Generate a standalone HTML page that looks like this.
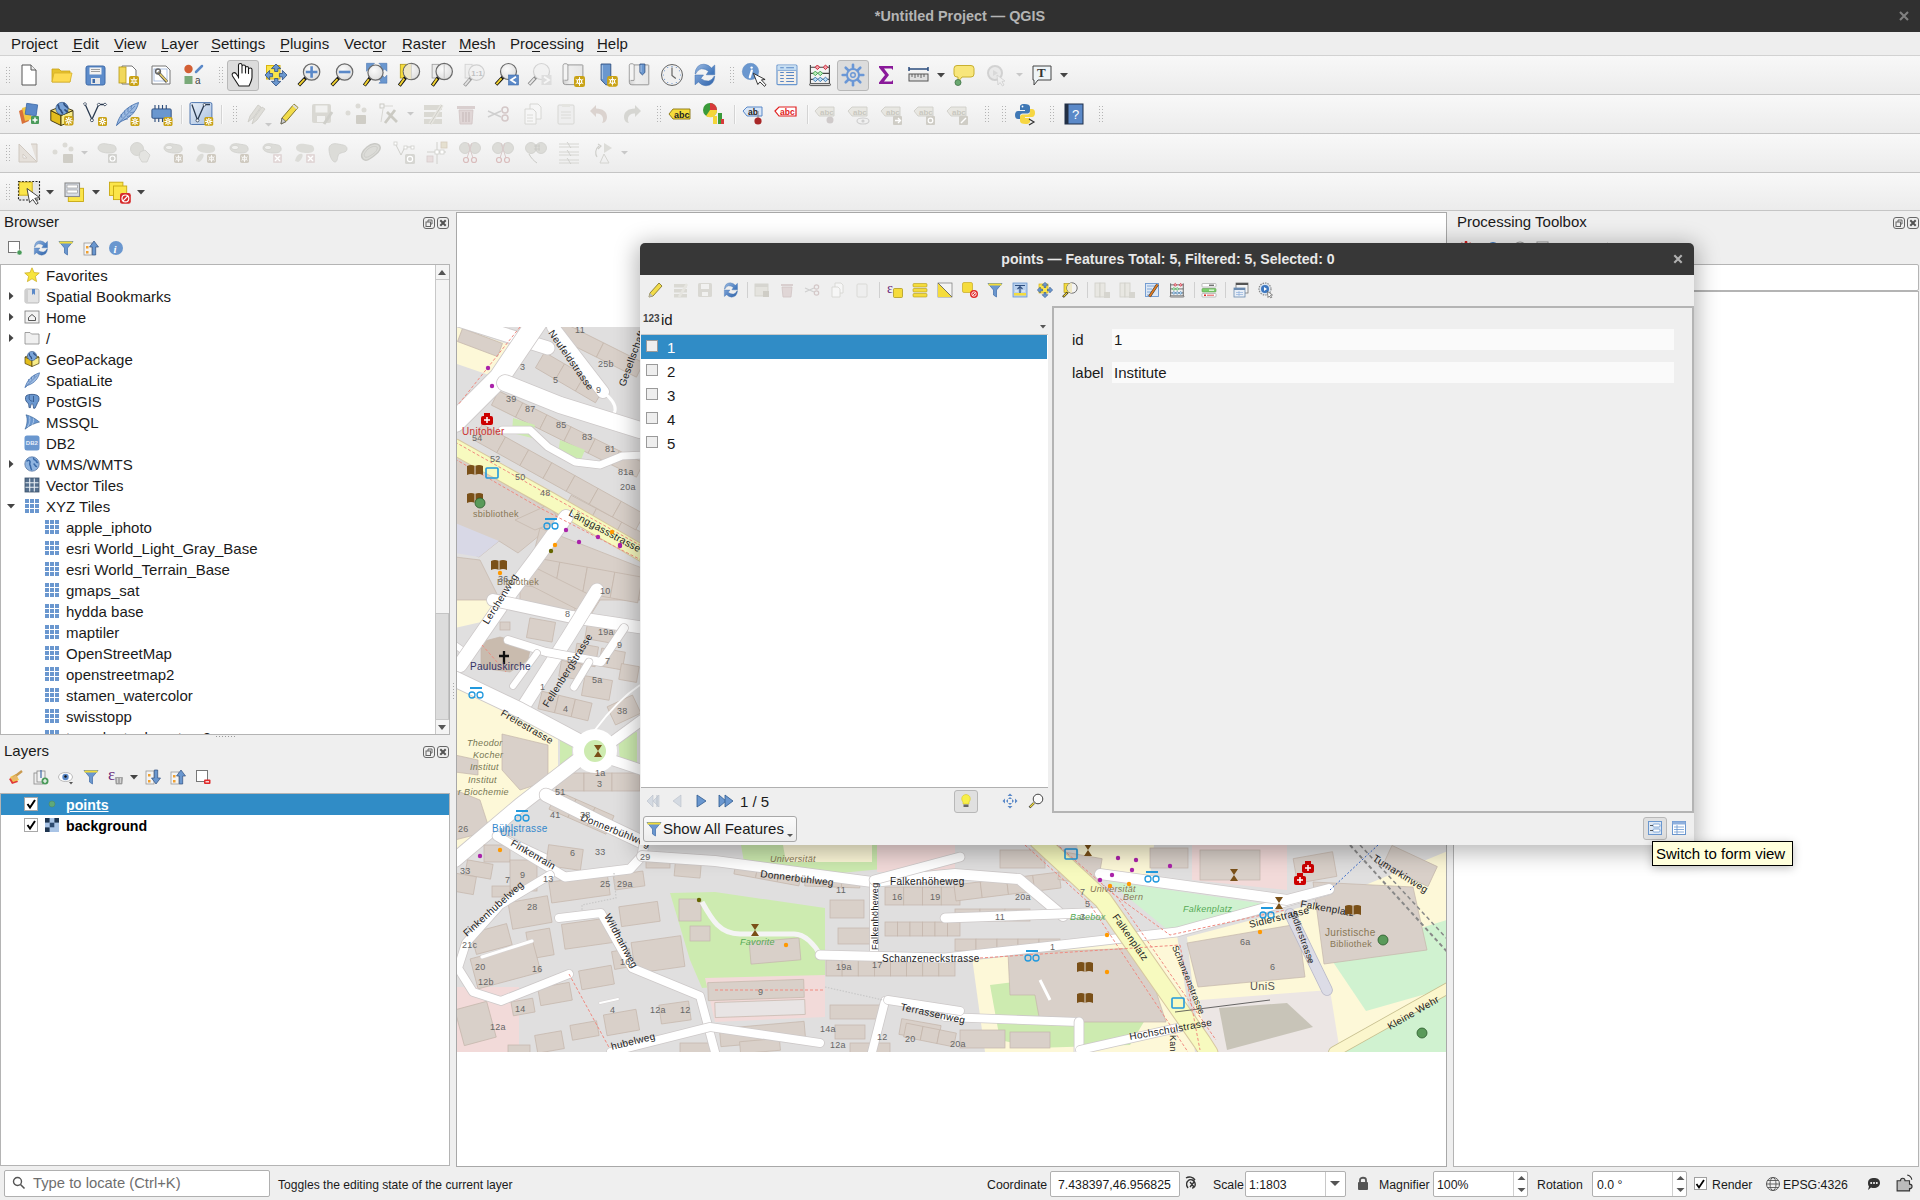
<!DOCTYPE html><html><head><meta charset="utf-8"><style>
*{margin:0;padding:0;box-sizing:border-box}
html,body{width:1920px;height:1200px;overflow:hidden;background:#efefef;font-family:"Liberation Sans",sans-serif;position:relative}
.a{position:absolute}
.t{position:absolute;white-space:nowrap;line-height:1}
svg{position:absolute;overflow:visible}
</style></head><body><div class="a" style="left:0px;top:0px;width:1920px;height:32px;background:#303030"></div><div class="t" style="left:560px;width:800px;text-align:center;top:8.81px;font-size:14.4px;color:#b4b4b4;font-weight:bold;">*Untitled Project — QGIS</div><svg style="left:1899px;top:11px" width="10" height="10"><path d="M1 1L9 9M9 1L1 9" stroke="#808080" stroke-width="2.1"/></svg><div class="a" style="left:0px;top:32px;width:1920px;height:23px;background:#eeeeee"></div><div class="a" style="left:0px;top:55px;width:1920px;height:1px;background:#d2d2d2"></div><div class="t" style="left:11px;top:36.30px;font-size:15px;color:#1a1a1a;font-weight:normal;">Project</div><div class="a" style="left:33px;top:51px;width:4px;height:1px;background:#1a1a1a"></div><div class="t" style="left:73px;top:36.30px;font-size:15px;color:#1a1a1a;font-weight:normal;">Edit</div><div class="a" style="left:72px;top:51px;width:9px;height:1px;background:#1a1a1a"></div><div class="t" style="left:114px;top:36.30px;font-size:15px;color:#1a1a1a;font-weight:normal;">View</div><div class="a" style="left:114px;top:51px;width:9px;height:1px;background:#1a1a1a"></div><div class="t" style="left:161px;top:36.30px;font-size:15px;color:#1a1a1a;font-weight:normal;">Layer</div><div class="a" style="left:161px;top:51px;width:7px;height:1px;background:#1a1a1a"></div><div class="t" style="left:211px;top:36.30px;font-size:15px;color:#1a1a1a;font-weight:normal;">Settings</div><div class="a" style="left:211px;top:51px;width:8px;height:1px;background:#1a1a1a"></div><div class="t" style="left:280px;top:36.30px;font-size:15px;color:#1a1a1a;font-weight:normal;">Plugins</div><div class="a" style="left:280px;top:51px;width:9px;height:1px;background:#1a1a1a"></div><div class="t" style="left:344px;top:36.30px;font-size:15px;color:#1a1a1a;font-weight:normal;">Vector</div><div class="a" style="left:373px;top:51px;width:9px;height:1px;background:#1a1a1a"></div><div class="t" style="left:402px;top:36.30px;font-size:15px;color:#1a1a1a;font-weight:normal;">Raster</div><div class="a" style="left:402px;top:51px;width:9px;height:1px;background:#1a1a1a"></div><div class="t" style="left:459px;top:36.30px;font-size:15px;color:#1a1a1a;font-weight:normal;">Mesh</div><div class="a" style="left:459px;top:51px;width:13px;height:1px;background:#1a1a1a"></div><div class="t" style="left:510px;top:36.30px;font-size:15px;color:#1a1a1a;font-weight:normal;">Processing</div><div class="a" style="left:532px;top:51px;width:8px;height:1px;background:#1a1a1a"></div><div class="t" style="left:597px;top:36.30px;font-size:15px;color:#1a1a1a;font-weight:normal;">Help</div><div class="a" style="left:597px;top:51px;width:10px;height:1px;background:#1a1a1a"></div><div class="a" style="left:0px;top:56px;width:1920px;height:38px;background:linear-gradient(#f8f8f8,#ececec)"></div><div class="a" style="left:0px;top:94px;width:1920px;height:1px;background:#c5c5c5"></div><div class="a" style="left:0px;top:95px;width:1920px;height:38px;background:linear-gradient(#f8f8f8,#ececec)"></div><div class="a" style="left:0px;top:133px;width:1920px;height:1px;background:#c5c5c5"></div><div class="a" style="left:0px;top:134px;width:1920px;height:38px;background:linear-gradient(#f8f8f8,#ececec)"></div><div class="a" style="left:0px;top:172px;width:1920px;height:1px;background:#c5c5c5"></div><div class="a" style="left:0px;top:173px;width:1920px;height:37px;background:linear-gradient(#f8f8f8,#ececec)"></div><div class="a" style="left:0px;top:210px;width:1920px;height:1px;background:#c5c5c5"></div><div class="a" style="left:6px;top:67px;width:1px;height:1px;background:#b4b4b4"></div><div class="a" style="left:9px;top:67px;width:1px;height:1px;background:#b4b4b4"></div><div class="a" style="left:6px;top:70px;width:1px;height:1px;background:#b4b4b4"></div><div class="a" style="left:9px;top:70px;width:1px;height:1px;background:#b4b4b4"></div><div class="a" style="left:6px;top:73px;width:1px;height:1px;background:#b4b4b4"></div><div class="a" style="left:9px;top:73px;width:1px;height:1px;background:#b4b4b4"></div><div class="a" style="left:6px;top:76px;width:1px;height:1px;background:#b4b4b4"></div><div class="a" style="left:9px;top:76px;width:1px;height:1px;background:#b4b4b4"></div><div class="a" style="left:6px;top:79px;width:1px;height:1px;background:#b4b4b4"></div><div class="a" style="left:9px;top:79px;width:1px;height:1px;background:#b4b4b4"></div><div class="a" style="left:6px;top:82px;width:1px;height:1px;background:#b4b4b4"></div><div class="a" style="left:9px;top:82px;width:1px;height:1px;background:#b4b4b4"></div><div class="a" style="left:227px;top:60px;width:32px;height:31px;background:#dcdcdc;border:1px solid #b8b8b8;border-radius:3px"></div><div class="a" style="left:837px;top:60px;width:32px;height:31px;background:#dcdcdc;border:1px solid #b8b8b8;border-radius:3px"></div><svg style="left:17.0px;top:63.0px" width="24" height="24" viewBox="0 0 24 24"><path d="M5 2H14L19 7V22H5Z" fill="#fff" stroke="#555" stroke-width="1"/><path d="M14 2V7H19" fill="#eee" stroke="#555" stroke-width="1"/></svg><svg style="left:50.0px;top:63.0px" width="24" height="24" viewBox="0 0 24 24"><path d="M2 6H9L11 8H20V19H2Z" fill="#e6c22e" stroke="#c9a21a" stroke-width="0.8"/><path d="M4 10H22L20 19H2Z" fill="#fddb52" stroke="#d6b028" stroke-width="0.8"/></svg><svg style="left:83.0px;top:63.0px" width="24" height="24" viewBox="0 0 24 24"><rect x="3" y="3" width="19" height="19" rx="2" fill="#5d8ccb" stroke="#3e6aa8"/><rect x="6.5" y="4.5" width="12" height="7" fill="#f2f2f2"/><path d="M8 6.5H17M8 8.5H17" stroke="#888" stroke-width="0.8"/><rect x="8" y="15" width="9" height="6" fill="#e8e8e8"/><rect x="9.5" y="16" width="2.5" height="4" fill="#3e6aa8"/></svg><svg style="left:116.0px;top:63.0px" width="24" height="24" viewBox="0 0 24 24"><path d="M6 3H16L20 7V21H6Z" fill="#fff" stroke="#777"/><rect x="3" y="4" width="7" height="16" fill="#f1d85b" stroke="#b89a16" stroke-width="0.8"/><rect x="13" y="13" width="10" height="10" rx="2.00" fill="#c9a215"/><path d="M18.0 18.0L21.46 20.00" stroke="#fff" stroke-width="0.85"/><path d="M18.0 18.0L14.54 20.00" stroke="#fff" stroke-width="0.85"/><path d="M18.0 18.0L14.54 16.00" stroke="#fff" stroke-width="0.85"/><path d="M18.0 18.0L21.46 16.00" stroke="#fff" stroke-width="0.85"/><circle cx="18.0" cy="18.0" r="2.00" fill="#c9a215" stroke="#fff" stroke-width="1.00"/><path d="M18.0 14.0V22.0" stroke="#fff" stroke-width="0.85"/></svg><svg style="left:149.0px;top:63.0px" width="24" height="24" viewBox="0 0 24 24"><path d="M3 3H17L21 7V21H3Z" fill="#fff" stroke="#777"/><rect x="5" y="6" width="13" height="12" fill="none" stroke="#9bb3dc" stroke-width="0.8"/><path d="M9 9L18 19" stroke="#555" stroke-width="3"/><path d="M9.5 9.5L18 18.5" stroke="#e8cf6a" stroke-width="1.6"/><circle cx="9" cy="8.5" r="2.4" fill="none" stroke="#666" stroke-width="1.5"/></svg><svg style="left:182.0px;top:63.0px" width="24" height="24" viewBox="0 0 24 24"><circle cx="6.5" cy="6" r="4.2" fill="#d35f34"/><rect x="2.5" y="13" width="8" height="8" fill="#79a978"/><path d="M14 9L20 3" stroke="#5b89c8" stroke-width="2.5" stroke-linecap="round"/><text x="13" y="21" font-family="Liberation Sans" font-size="10" fill="#444">a</text></svg><svg style="left:231.0px;top:63.0px" width="24" height="24" viewBox="0 0 24 24"><path d="M7.5 15L7.5 2Q7.5 0.5 9.3 0.5Q11 0.5 11 2L11 10L11 3.5Q11 2 12.7 2Q14.5 2 14.5 3.5L14.5 10L14.5 5Q14.5 3.5 16 3.5Q17.5 3.5 17.5 5L17.5 10.5L17.5 6.5Q17.5 5 19.2 5Q21 5 21 6.5L21 14Q21 17 18 23L8 23L1.5 13Q0.5 11 2 10Q3.5 9 5 10.5L7.5 14Z" fill="#fff" stroke="#1a1a1a" stroke-width="1.1" stroke-linejoin="round"/></svg><svg style="left:264.0px;top:63.0px" width="24" height="24" viewBox="0 0 24 24"><rect x="2.5" y="2.5" width="13.5" height="13.5" fill="#fbe54a" stroke="#d8b410" stroke-width="1"/><path d="M12 1L16.8 5.6H13.9V8.5H10.6V5.6H7.4ZM12 23L16.8 18.4H13.9V15.5H10.6V18.4H7.4ZM1 12L5.6 7.4V10.5H8.6V13.8H5.6V16.9ZM23 12L18.4 7.4V10.5H15.4V13.8H18.4V16.9Z" fill="#6a97cf" stroke="#2f4f80" stroke-width="0.8" stroke-linejoin="round"/></svg><svg style="left:297.0px;top:63.0px" width="24" height="24" viewBox="0 0 24 24"><defs><radialGradient id="lens" cx="0.4" cy="0.35" r="0.7"><stop offset="0" stop-color="#fbfbfb"/><stop offset="1" stop-color="#dcdcdc"/></radialGradient></defs><path d="M9.296000000000001 14.304L1.8 22.2" stroke="#111" stroke-width="3.6" stroke-linecap="butt"/><path d="M7.496000000000001 16.104L2.2 21.8" stroke="#f2d230" stroke-width="1.9"/><circle cx="14.6" cy="9" r="8.2" fill="url(#lens)" stroke="#6a6a6a" stroke-width="1.2"/><path d="M14.6 3.2V14.8M8.8 9H20.4" stroke="#5b89c8" stroke-width="2.6"/></svg><svg style="left:330.0px;top:63.0px" width="24" height="24" viewBox="0 0 24 24"><path d="M9.296000000000001 14.304L1.8 22.2" stroke="#111" stroke-width="3.6" stroke-linecap="butt"/><path d="M7.496000000000001 16.104L2.2 21.8" stroke="#f2d230" stroke-width="1.9"/><circle cx="14.6" cy="9" r="8.2" fill="url(#lens)" stroke="#6a6a6a" stroke-width="1.2"/><path d="M8.8 9H20.4" stroke="#5b89c8" stroke-width="2.6"/></svg><svg style="left:364.0px;top:63.0px" width="24" height="24" viewBox="0 0 24 24"><path d="M2.5 0.3H10.5L8.5 2.3L11 4.8L7.3 8.5L4.8 6L2.5 8.3Z" fill="#6a97cf" stroke="#3e6aa8" stroke-width="0.5"/><path d="M22.9 0.3H14.9L16.9 2.3L14.4 4.8L18.1 8.5L20.6 6L22.9 8.3Z" fill="#6a97cf" stroke="#3e6aa8" stroke-width="0.5"/><path d="M22.9 20.2H14.9L16.9 18.2L14.4 15.7L18.1 12L20.6 14.5L22.9 12.2Z" fill="#6a97cf" stroke="#3e6aa8" stroke-width="0.5"/><path d="M6.628 14.472L0.3 22.5" stroke="#111" stroke-width="3.6" stroke-linecap="butt"/><path d="M4.828 16.272L0.7 22.1" stroke="#f2d230" stroke-width="1.9"/><circle cx="11.5" cy="9.6" r="7.6" fill="url(#lens)" stroke="#6a6a6a" stroke-width="1.2"/></svg><svg style="left:396.0px;top:63.0px" width="24" height="24" viewBox="0 0 24 24"><rect x="4.3" y="1.3" width="7.3" height="13.7" fill="#f5dc3c" stroke="#b09818" stroke-width="0.8"/><path d="M10.096000000000002 13.804L3.3 22.6" stroke="#111" stroke-width="3.6" stroke-linecap="butt"/><path d="M8.296000000000003 15.604L3.6999999999999997 22.200000000000003" stroke="#f2d230" stroke-width="1.9"/><circle cx="15.4" cy="8.5" r="8.2" fill="url(#lens)" stroke="#6a6a6a" stroke-width="1.2"/><path d="M15.4 0.8A7.7 7.7 0 0 0 15.4 16.2Z" fill="#eee6c4"/><path d="M15.4 1V16" stroke="#c8c8c8" stroke-width="0.8"/></svg><svg style="left:429.0px;top:63.0px" width="24" height="24" viewBox="0 0 24 24"><rect x="3.1" y="1.3" width="7" height="13.7" fill="#eaeaea" stroke="#9a9a9a" stroke-width="0.8"/><path d="M9.895999999999999 13.804L3.3 22.6" stroke="#111" stroke-width="3.6" stroke-linecap="butt"/><path d="M8.096 15.604L3.6999999999999997 22.200000000000003" stroke="#f2d230" stroke-width="1.9"/><circle cx="15.2" cy="8.5" r="8.2" fill="url(#lens)" stroke="#6a6a6a" stroke-width="1.2"/><path d="M15.2 1V16" stroke="#b8b8b8" stroke-width="0.8"/></svg><svg style="left:462.0px;top:63.0px" width="24" height="24" viewBox="0 0 24 24"><g opacity="0.4"><rect x="3.1" y="1.3" width="7" height="13.7" fill="#eaeaea" stroke="#9a9a9a" stroke-width="0.8"/><path d="M9.484 14.616L2.5 22.6" stroke="#111" stroke-width="3.6" stroke-linecap="butt"/><path d="M7.684 16.416L2.9 22.200000000000003" stroke="#ccc" stroke-width="1.9"/><circle cx="14.5" cy="9.6" r="7.8" fill="#f0f0f0" stroke="#999" stroke-width="1.2"/><text x="9.2" y="13.3" font-family="Liberation Sans" font-size="8" font-weight="bold" fill="#777">1:1</text></g></svg><svg style="left:495.0px;top:63.0px" width="24" height="24" viewBox="0 0 24 24"><path d="M8.34 13.66L1 21.5" stroke="#111" stroke-width="3.6" stroke-linecap="butt"/><path d="M6.54 15.459999999999999L1.4 21.1" stroke="#f2d230" stroke-width="1.9"/><circle cx="13.5" cy="8.5" r="8" fill="url(#lens)" stroke="#6a6a6a" stroke-width="1.2"/><rect x="13.5" y="12" width="10" height="10" fill="#5b89c8" stroke="#3e6aa8" stroke-width="0.6"/><path d="M21 13.8L16 17L21 20.2" stroke="#fff" stroke-width="1.8" fill="none"/></svg><svg style="left:528.0px;top:63.0px" width="24" height="24" viewBox="0 0 24 24"><g opacity="0.45"><path d="M8.34 13.66L1 21.5" stroke="#111" stroke-width="3.6" stroke-linecap="butt"/><path d="M6.54 15.459999999999999L1.4 21.1" stroke="#ddd" stroke-width="1.9"/><circle cx="13.5" cy="8.5" r="8" fill="#f0f0f0" stroke="#aaa" stroke-width="1.2"/><rect x="13.5" y="12" width="10" height="10" fill="#c8c8c8"/><path d="M16 13.8L21 17L16 20.2" stroke="#fff" stroke-width="1.8" fill="none"/></g></svg><svg style="left:562.0px;top:63.0px" width="24" height="24" viewBox="0 0 24 24"><defs><linearGradient id="scr" x1="0" y1="0" x2="1" y2="0"><stop offset="0" stop-color="#cfcfcf"/><stop offset="0.35" stop-color="#eeeeee"/><stop offset="1" stop-color="#e6e6e6"/></linearGradient></defs><path d="M5.800000000000001 1.9H20.299999999999997Q20.9 1.9 20.9 2.5V21.0Q20.9 21.6 20.299999999999997 21.6H3.6Q1.1 21.6 1.1 19.1V2.2Q1.1 0.7 3.45 0.7Q5.800000000000001 0.7 5.800000000000001 2.2Z" fill="url(#scr)" stroke="#8f8f8f" stroke-width="0.9"/><path d="M5.800000000000001 2.2V17.1H2.6" fill="none" stroke="#8f8f8f" stroke-width="0.9"/><rect x="1.6" y="1.5" width="3.7" height="15.100000000000001" fill="#f4f4f4"/><rect x="12" y="13" width="11" height="11" rx="2.20" fill="#c9a215"/><path d="M17.5 18.5L21.31 20.70" stroke="#fff" stroke-width="0.94"/><path d="M17.5 18.5L13.69 20.70" stroke="#fff" stroke-width="0.94"/><path d="M17.5 18.5L13.69 16.30" stroke="#fff" stroke-width="0.94"/><path d="M17.5 18.5L21.31 16.30" stroke="#fff" stroke-width="0.94"/><circle cx="17.5" cy="18.5" r="2.20" fill="#c9a215" stroke="#fff" stroke-width="1.10"/><path d="M17.5 14.1V22.9" stroke="#fff" stroke-width="0.94"/></svg><svg style="left:596.0px;top:63.0px" width="24" height="24" viewBox="0 0 24 24"><path d="M5.1 1H14.8V21.8H9.8L5.1 16.9Z" fill="#6a97cf" stroke="#2f4f80" stroke-width="0.9"/><path d="M6.3 2.2V16" stroke="#c8dcf4" stroke-width="0.8"/><rect x="11.1" y="13" width="10.7" height="10.7" rx="2.14" fill="#c9a215"/><path d="M16.45 18.35L20.16 20.49" stroke="#fff" stroke-width="0.91"/><path d="M16.45 18.35L12.74 20.49" stroke="#fff" stroke-width="0.91"/><path d="M16.45 18.35L12.74 16.21" stroke="#fff" stroke-width="0.91"/><path d="M16.45 18.35L20.16 16.21" stroke="#fff" stroke-width="0.91"/><circle cx="16.45" cy="18.35" r="2.14" fill="#c9a215" stroke="#fff" stroke-width="1.07"/><path d="M16.45 14.07V22.63" stroke="#fff" stroke-width="0.91"/></svg><svg style="left:628.0px;top:63.0px" width="24" height="24" viewBox="0 0 24 24"><defs><linearGradient id="scr" x1="0" y1="0" x2="1" y2="0"><stop offset="0" stop-color="#cfcfcf"/><stop offset="0.35" stop-color="#eeeeee"/><stop offset="1" stop-color="#e6e6e6"/></linearGradient></defs><path d="M6.0 1.9H20.2Q20.8 1.9 20.8 2.5V21.2Q20.8 21.8 20.2 21.8H3.8Q1.3 21.8 1.3 19.3V2.2Q1.3 0.7 3.6500000000000004 0.7Q6.0 0.7 6.0 2.2Z" fill="url(#scr)" stroke="#8f8f8f" stroke-width="0.9"/><path d="M6.0 2.2V17.3H2.8" fill="none" stroke="#8f8f8f" stroke-width="0.9"/><rect x="1.8" y="1.5" width="3.7" height="15.3" fill="#f4f4f4"/><path d="M11.9 1H16.9V9.5L14.4 11.9L11.9 9.5Z" fill="#6a97cf" stroke="#2f4f80" stroke-width="0.8"/><path d="M13 2V9" stroke="#c8dcf4" stroke-width="0.7"/></svg><svg style="left:660.0px;top:63.0px" width="24" height="24" viewBox="0 0 24 24"><circle cx="12" cy="12" r="10.5" fill="#f0f0f0" stroke="#666" stroke-width="1"/><circle cx="20.60" cy="12.00" r="0.55" fill="#5b89c8"/><circle cx="19.45" cy="16.30" r="0.55" fill="#5b89c8"/><circle cx="16.30" cy="19.45" r="0.55" fill="#5b89c8"/><circle cx="12.00" cy="20.60" r="0.55" fill="#5b89c8"/><circle cx="7.70" cy="19.45" r="0.55" fill="#5b89c8"/><circle cx="4.55" cy="16.30" r="0.55" fill="#5b89c8"/><circle cx="3.40" cy="12.00" r="0.55" fill="#5b89c8"/><circle cx="4.55" cy="7.70" r="0.55" fill="#5b89c8"/><circle cx="7.70" cy="4.55" r="0.55" fill="#5b89c8"/><circle cx="12.00" cy="3.40" r="0.55" fill="#5b89c8"/><circle cx="16.30" cy="4.55" r="0.55" fill="#5b89c8"/><circle cx="19.45" cy="7.70" r="0.55" fill="#5b89c8"/><path d="M12 4.5V12.5L15.8 15.5" stroke="#666" stroke-width="1.2" fill="none"/></svg><svg style="left:693.0px;top:63.0px" width="24" height="24" viewBox="0 0 24 24"><defs><linearGradient id="rg1" x1="0" y1="0" x2="1" y2="0.6"><stop offset="0" stop-color="#9dbbe2"/><stop offset="1" stop-color="#4479bd"/></linearGradient><linearGradient id="rg2" x1="0" y1="0" x2="1" y2="0.6"><stop offset="0" stop-color="#78a0d6"/><stop offset="1" stop-color="#3a6cb0"/></linearGradient></defs><path d="M2 10.75Q3 1 11 1.2Q15.5 1.5 18.5 5L21.75 2V11.75H13.25L15.5 8.25Q12.5 5.5 8.25 5.75Q4.5 6.5 2.75 10.75Z" fill="url(#rg1)" stroke="#3f6fae" stroke-width="0.5"/><path d="M21.75 13.25Q21 22.5 13 22.75Q8.5 22.5 5.5 19L2 21.75V12H10.5L7.75 15.5Q11.5 18.5 15.75 18Q19.5 17 21 13.25Z" fill="url(#rg2)" stroke="#3f6fae" stroke-width="0.5"/></svg><svg style="left:743.0px;top:63.0px" width="24" height="24" viewBox="0 0 24 24"><circle cx="7.5" cy="8.5" r="8.2" fill="#6a97cf" stroke="#5a86be" stroke-width="0.5"/><circle cx="8.6" cy="4.6" r="1.2" fill="#fff"/><path d="M6.8 14.3L8.8 7.6" stroke="#fff" stroke-width="2.2" stroke-linecap="round"/><path d="M10.4 10.3L14.8 21.5L16.9 18.9L21.6 23.4L22.9 21.8L18.4 16.9L22.1 16.5Z" fill="#fff" stroke="#222" stroke-width="0.9" stroke-linejoin="round"/></svg><svg style="left:775.0px;top:63.0px" width="24" height="24" viewBox="0 0 24 24"><rect x="2" y="2" width="19.9" height="19.7" rx="1" fill="#f3efe9" stroke="#6a97cf" stroke-width="1.2"/><rect x="2.6" y="2.6" width="18.7" height="4.8" fill="#c8e0f4"/><path d="M2.6 7.4H21.3" stroke="#6a97cf" stroke-width="0.8"/><path d="M5.2 4.8H8.8M11.2 4.8H19M5.2 9.5H8.8M11.2 9.5H19M5.2 12.5H8.8M11.2 12.5H19M5.2 15.5H8.8M11.2 15.5H19M5.2 18.5H8.8M11.2 18.5H19" stroke="#5a86c4" stroke-width="1.1"/></svg><svg style="left:808.0px;top:63.0px" width="24" height="24" viewBox="0 0 24 24"><path d="M2.4 2V21M21.4 2V21M2.4 4.3H21.4M2.4 10.4H21.4M2.4 16.4H21.4" stroke="#444" stroke-width="1.1"/><path d="M9.4 2.0L11.7 4.3L9.4 6.6L7.1000000000000005 4.3Z" fill="#f4a0a8" stroke="#c8283a" stroke-width="1"/><path d="M17.5 2.0L19.8 4.3L17.5 6.6L15.2 4.3Z" fill="#f4a0a8" stroke="#c8283a" stroke-width="1"/><path d="M7.3 8.100000000000001L9.6 10.4L7.3 12.7L5.0 10.4Z" fill="#b8f0b8" stroke="#4aa85a" stroke-width="1"/><path d="M12.3 8.100000000000001L14.600000000000001 10.4L12.3 12.7L10.0 10.4Z" fill="#b8f0b8" stroke="#4aa85a" stroke-width="1"/><path d="M7.3 14.099999999999998L9.6 16.4L7.3 18.7L5.0 16.4Z" fill="#b8ddf8" stroke="#4a7fb0" stroke-width="1"/><path d="M12.3 14.099999999999998L14.600000000000001 16.4L12.3 18.7L10.0 16.4Z" fill="#b8ddf8" stroke="#4a7fb0" stroke-width="1"/><path d="M17.5 14.099999999999998L19.8 16.4L17.5 18.7L15.2 16.4Z" fill="#b8ddf8" stroke="#4a7fb0" stroke-width="1"/><rect x="1.6" y="20.6" width="20.9" height="2" rx="1" fill="#ddd" stroke="#444" stroke-width="0.9"/></svg><svg style="left:841.0px;top:63.0px" width="24" height="24" viewBox="0 0 24 24"><g transform="translate(12 12)" fill="none" stroke="#6a97d6"><path d="M0 -6.5V-10.3" stroke-width="2.6" stroke-linecap="round" transform="rotate(0)"/><path d="M0 -6.5V-10.3" stroke-width="2.6" stroke-linecap="round" transform="rotate(45)"/><path d="M0 -6.5V-10.3" stroke-width="2.6" stroke-linecap="round" transform="rotate(90)"/><path d="M0 -6.5V-10.3" stroke-width="2.6" stroke-linecap="round" transform="rotate(135)"/><path d="M0 -6.5V-10.3" stroke-width="2.6" stroke-linecap="round" transform="rotate(180)"/><path d="M0 -6.5V-10.3" stroke-width="2.6" stroke-linecap="round" transform="rotate(225)"/><path d="M0 -6.5V-10.3" stroke-width="2.6" stroke-linecap="round" transform="rotate(270)"/><path d="M0 -6.5V-10.3" stroke-width="2.6" stroke-linecap="round" transform="rotate(315)"/><circle r="6" stroke-width="2"/><circle r="2.3" stroke-width="1.4"/></g></svg><svg style="left:874.0px;top:63.0px" width="24" height="24" viewBox="0 0 24 24"><path d="M5 3H19V7L17.5 5.5H10L15 12L10 18.5H17.5L19 17V21H5V19.5L11 12L5 4.5Z" fill="#8a1a9a"/></svg><svg style="left:907.0px;top:63.0px" width="24" height="24" viewBox="0 0 24 24"><path d="M2 6H21M2 4V8M21 4V8" stroke="#2b4c7e" stroke-width="1.5"/><rect x="2" y="11" width="19" height="7" fill="#e0e0e0" stroke="#555" stroke-width="1"/><path d="M5 11V14M8 11V15M11 11V14M14 11V15M17 11V14" stroke="#555" stroke-width="0.9"/></svg><svg style="left:952.0px;top:63.0px" width="24" height="24" viewBox="0 0 24 24"><path d="M5 2.5H19Q22 2.5 22 5.5V11Q22 14 19 14H10L6 19V14H5Q2 14 2 11V5.5Q2 2.5 5 2.5Z" fill="#f8e67a" stroke="#c8b030" stroke-width="1" stroke-linejoin="round"/><circle cx="6" cy="19.5" r="3" fill="#6aa870" stroke="#3d7043" stroke-width="0.8"/></svg><svg style="left:985.0px;top:63.0px" width="24" height="24" viewBox="0 0 24 24"><g opacity="0.45"><circle cx="10" cy="10" r="7" fill="#ddd" stroke="#aaa" stroke-width="2"/><path d="M8 7V13L13 10Z" fill="#bbb"/><path d="M12 12L13 22L15 19.5L17.5 23L19 22L17 18.5L20 18Z" fill="#eee" stroke="#aaa" stroke-width="0.8"/></g></svg><svg style="left:1030.0px;top:63.0px" width="24" height="24" viewBox="0 0 24 24"><path d="M3 3H21V17H8L4 22V17H3Z" fill="#eef4f7" stroke="#444" stroke-width="1"/><text x="7" y="14" font-family="Liberation Serif" font-size="13" font-weight="bold" fill="#333">T</text></svg><div class="a" style="left:219px;top:67px;width:1px;height:1px;background:#b4b4b4"></div><div class="a" style="left:222px;top:67px;width:1px;height:1px;background:#b4b4b4"></div><div class="a" style="left:219px;top:70px;width:1px;height:1px;background:#b4b4b4"></div><div class="a" style="left:222px;top:70px;width:1px;height:1px;background:#b4b4b4"></div><div class="a" style="left:219px;top:73px;width:1px;height:1px;background:#b4b4b4"></div><div class="a" style="left:222px;top:73px;width:1px;height:1px;background:#b4b4b4"></div><div class="a" style="left:219px;top:76px;width:1px;height:1px;background:#b4b4b4"></div><div class="a" style="left:222px;top:76px;width:1px;height:1px;background:#b4b4b4"></div><div class="a" style="left:219px;top:79px;width:1px;height:1px;background:#b4b4b4"></div><div class="a" style="left:222px;top:79px;width:1px;height:1px;background:#b4b4b4"></div><div class="a" style="left:219px;top:82px;width:1px;height:1px;background:#b4b4b4"></div><div class="a" style="left:222px;top:82px;width:1px;height:1px;background:#b4b4b4"></div><div class="a" style="left:730px;top:67px;width:1px;height:1px;background:#b4b4b4"></div><div class="a" style="left:733px;top:67px;width:1px;height:1px;background:#b4b4b4"></div><div class="a" style="left:730px;top:70px;width:1px;height:1px;background:#b4b4b4"></div><div class="a" style="left:733px;top:70px;width:1px;height:1px;background:#b4b4b4"></div><div class="a" style="left:730px;top:73px;width:1px;height:1px;background:#b4b4b4"></div><div class="a" style="left:733px;top:73px;width:1px;height:1px;background:#b4b4b4"></div><div class="a" style="left:730px;top:76px;width:1px;height:1px;background:#b4b4b4"></div><div class="a" style="left:733px;top:76px;width:1px;height:1px;background:#b4b4b4"></div><div class="a" style="left:730px;top:79px;width:1px;height:1px;background:#b4b4b4"></div><div class="a" style="left:733px;top:79px;width:1px;height:1px;background:#b4b4b4"></div><div class="a" style="left:730px;top:82px;width:1px;height:1px;background:#b4b4b4"></div><div class="a" style="left:733px;top:82px;width:1px;height:1px;background:#b4b4b4"></div><svg style="left:937px;top:72.5px" width="8" height="5"><path d="M0 0L8 0L4 4.5Z" fill="#444"/></svg><svg style="left:1015.5px;top:73px" width="7" height="4"><path d="M0 0L7 0L3.5 3.5Z" fill="#c8c8c8"/></svg><svg style="left:1060px;top:72.5px" width="8" height="5"><path d="M0 0L8 0L4 4.5Z" fill="#444"/></svg><div class="a" style="left:6px;top:106px;width:1px;height:1px;background:#b4b4b4"></div><div class="a" style="left:9px;top:106px;width:1px;height:1px;background:#b4b4b4"></div><div class="a" style="left:6px;top:109px;width:1px;height:1px;background:#b4b4b4"></div><div class="a" style="left:9px;top:109px;width:1px;height:1px;background:#b4b4b4"></div><div class="a" style="left:6px;top:112px;width:1px;height:1px;background:#b4b4b4"></div><div class="a" style="left:9px;top:112px;width:1px;height:1px;background:#b4b4b4"></div><div class="a" style="left:6px;top:115px;width:1px;height:1px;background:#b4b4b4"></div><div class="a" style="left:9px;top:115px;width:1px;height:1px;background:#b4b4b4"></div><div class="a" style="left:6px;top:118px;width:1px;height:1px;background:#b4b4b4"></div><div class="a" style="left:9px;top:118px;width:1px;height:1px;background:#b4b4b4"></div><div class="a" style="left:6px;top:121px;width:1px;height:1px;background:#b4b4b4"></div><div class="a" style="left:9px;top:121px;width:1px;height:1px;background:#b4b4b4"></div><svg style="left:17.0px;top:102.0px" width="24" height="24" viewBox="0 0 24 24"><path d="M2 9L8 6L12 19L5 22Z" fill="#d9713a"/><path d="M5 6L12 4L15 17L8 19Z" fill="#f1c742"/><rect x="9" y="2" width="11" height="11" fill="#5b89c8" stroke="#3e6aa8" stroke-width="0.8" transform="rotate(8 14 7)"/><rect x="14" y="14" width="8" height="8" rx="1" fill="#4a9a5a"/><path d="M18 15.5V20.5M15.5 18H20.5" stroke="#fff" stroke-width="1.5"/></svg><svg style="left:50.0px;top:102.0px" width="24" height="24" viewBox="0 0 24 24"><path d="M0.8 8.5L11 13.5V23.5L0.8 18.5Z" fill="#e3bd1c" stroke="#3a300a" stroke-width="0.9"/><path d="M11 13.5L23 8.5V18.5L11 23.5Z" fill="#f8ec88" stroke="#3a300a" stroke-width="0.9"/><path d="M0.8 8.5L12 4L23 8.5L11 13.5Z" fill="#f4e070" stroke="#3a300a" stroke-width="0.9"/><circle cx="12" cy="6.5" r="6.2" fill="#7aa4d8" stroke="#3a5a8a" stroke-width="0.7"/><path d="M8 3C9.5 4.5 8 6.5 10 7.5C11.5 8 11 10 12.5 11M14 1.5C14 3.5 16 4 17.5 5.5M15 8C16 8.5 16.5 9.5 17.5 9.5" stroke="#2f4f80" stroke-width="1.8" fill="none" stroke-linecap="round"/><rect x="14" y="14" width="9.5" height="9.5" rx="1.71" fill="#c9a215"/><path d="M19.98 18.75L22.17 18.75" stroke="#fff" stroke-width="1.24" stroke-linecap="round"/><path d="M19.62 19.62L21.17 21.17" stroke="#fff" stroke-width="1.24" stroke-linecap="round"/><path d="M18.75 19.98L18.75 22.17" stroke="#fff" stroke-width="1.24" stroke-linecap="round"/><path d="M17.88 19.62L16.33 21.17" stroke="#fff" stroke-width="1.24" stroke-linecap="round"/><path d="M17.52 18.75L15.33 18.75" stroke="#fff" stroke-width="1.24" stroke-linecap="round"/><path d="M17.88 17.88L16.33 16.33" stroke="#fff" stroke-width="1.24" stroke-linecap="round"/><path d="M18.75 17.52L18.75 15.33" stroke="#fff" stroke-width="1.24" stroke-linecap="round"/><path d="M19.62 17.88L21.17 16.33" stroke="#fff" stroke-width="1.24" stroke-linecap="round"/></svg><svg style="left:83.0px;top:102.0px" width="24" height="24" viewBox="0 0 24 24"><path d="M2 2L8.9 17.5L15.75 2.5H22" stroke="#2a3a50" stroke-width="1.3" fill="none"/><path d="M2 0.3999999999999999L3.6 2L2 3.6L0.3999999999999999 2Z" fill="#fff" stroke="#2a3a50" stroke-width="0.8"/><path d="M15.75 0.8999999999999999L17.35 2.5L15.75 4.1L14.15 2.5Z" fill="#fff" stroke="#2a3a50" stroke-width="0.8"/><path d="M22 0.8999999999999999L23.6 2.5L22 4.1L20.4 2.5Z" fill="#fff" stroke="#2a3a50" stroke-width="0.8"/><circle cx="8.9" cy="18.2" r="1.5" fill="#fff" stroke="#2a3a50" stroke-width="0.8"/><rect x="15" y="15" width="9" height="9" rx="1.62" fill="#c9a215"/><path d="M20.67 19.50L22.74 19.50" stroke="#fff" stroke-width="1.17" stroke-linecap="round"/><path d="M20.33 20.33L21.79 21.79" stroke="#fff" stroke-width="1.17" stroke-linecap="round"/><path d="M19.50 20.67L19.50 22.74" stroke="#fff" stroke-width="1.17" stroke-linecap="round"/><path d="M18.67 20.33L17.21 21.79" stroke="#fff" stroke-width="1.17" stroke-linecap="round"/><path d="M18.33 19.50L16.26 19.50" stroke="#fff" stroke-width="1.17" stroke-linecap="round"/><path d="M18.67 18.67L17.21 17.21" stroke="#fff" stroke-width="1.17" stroke-linecap="round"/><path d="M19.50 18.33L19.50 16.26" stroke="#fff" stroke-width="1.17" stroke-linecap="round"/><path d="M20.33 18.67L21.79 17.21" stroke="#fff" stroke-width="1.17" stroke-linecap="round"/></svg><svg style="left:116.0px;top:102.0px" width="24" height="24" viewBox="0 0 24 24"><path d="M0.5 23.5C3 14 9 5 22.5 0.5C21 8 16 15 5 19.5Z" fill="#9dbbe2" stroke="#3e6aa8" stroke-width="0.8"/><path d="M0.5 23.5L19 4M6 16L5 12M9 13L8.5 8.5M12 10L12 6M15 7L15.5 3.5M8 17.5L12 17M11 14.5L15 13.5M14 11L18 10" stroke="#3e6aa8" stroke-width="0.6" fill="none"/><rect x="14.5" y="15" width="9" height="9" rx="1.62" fill="#c9a215"/><path d="M20.17 19.50L22.24 19.50" stroke="#fff" stroke-width="1.17" stroke-linecap="round"/><path d="M19.83 20.33L21.29 21.79" stroke="#fff" stroke-width="1.17" stroke-linecap="round"/><path d="M19.00 20.67L19.00 22.74" stroke="#fff" stroke-width="1.17" stroke-linecap="round"/><path d="M18.17 20.33L16.71 21.79" stroke="#fff" stroke-width="1.17" stroke-linecap="round"/><path d="M17.83 19.50L15.76 19.50" stroke="#fff" stroke-width="1.17" stroke-linecap="round"/><path d="M18.17 18.67L16.71 17.21" stroke="#fff" stroke-width="1.17" stroke-linecap="round"/><path d="M19.00 18.33L19.00 16.26" stroke="#fff" stroke-width="1.17" stroke-linecap="round"/><path d="M19.83 18.67L21.29 17.21" stroke="#fff" stroke-width="1.17" stroke-linecap="round"/></svg><svg style="left:149.0px;top:102.0px" width="24" height="24" viewBox="0 0 24 24"><rect x="2.9" y="6.9" width="19.3" height="9.4" rx="1.2" fill="#6a97cf" stroke="#2a4a7a" stroke-width="0.9"/><path d="M6 3V6.9M6 16.3V20" stroke="#2a4a7a" stroke-width="1.1"/><path d="M9.75 3V6.9M9.75 16.3V20" stroke="#2a4a7a" stroke-width="1.1"/><path d="M13.5 3V6.9M13.5 16.3V20" stroke="#2a4a7a" stroke-width="1.1"/><path d="M17.25 3V6.9M17.25 16.3V20" stroke="#2a4a7a" stroke-width="1.1"/><rect x="14.5" y="15" width="9" height="9" rx="1.62" fill="#c9a215"/><path d="M20.17 19.50L22.24 19.50" stroke="#fff" stroke-width="1.17" stroke-linecap="round"/><path d="M19.83 20.33L21.29 21.79" stroke="#fff" stroke-width="1.17" stroke-linecap="round"/><path d="M19.00 20.67L19.00 22.74" stroke="#fff" stroke-width="1.17" stroke-linecap="round"/><path d="M18.17 20.33L16.71 21.79" stroke="#fff" stroke-width="1.17" stroke-linecap="round"/><path d="M17.83 19.50L15.76 19.50" stroke="#fff" stroke-width="1.17" stroke-linecap="round"/><path d="M18.17 18.67L16.71 17.21" stroke="#fff" stroke-width="1.17" stroke-linecap="round"/><path d="M19.00 18.33L19.00 16.26" stroke="#fff" stroke-width="1.17" stroke-linecap="round"/><path d="M19.83 18.67L21.29 17.21" stroke="#fff" stroke-width="1.17" stroke-linecap="round"/></svg><svg style="left:189.0px;top:102.0px" width="24" height="24" viewBox="0 0 24 24"><defs><linearGradient id="vbg" x1="0" y1="0" x2="1" y2="1"><stop offset="0" stop-color="#e8eff8"/><stop offset="1" stop-color="#a8c0e0"/></linearGradient></defs><rect x="1" y="0.6" width="21.9" height="21.9" rx="1.5" fill="url(#vbg)" stroke="#3e6aa8" stroke-width="0.9"/><path d="M2.9 2.5L8.5 18.1L15.4 2.5H21" stroke="#2a3a50" stroke-width="1.3" fill="none"/><circle cx="8.5" cy="18.4" r="1.5" fill="#fff" stroke="#2a3a50" stroke-width="0.8"/><circle cx="15.4" cy="2.8" r="1.3" fill="#fff" stroke="#2a3a50" stroke-width="0.7"/><rect x="15.4" y="15" width="8.8" height="8.8" rx="1.58" fill="#c9a215"/><path d="M20.94 19.40L22.97 19.40" stroke="#fff" stroke-width="1.14" stroke-linecap="round"/><path d="M20.61 20.21L22.04 21.64" stroke="#fff" stroke-width="1.14" stroke-linecap="round"/><path d="M19.80 20.54L19.80 22.57" stroke="#fff" stroke-width="1.14" stroke-linecap="round"/><path d="M18.99 20.21L17.56 21.64" stroke="#fff" stroke-width="1.14" stroke-linecap="round"/><path d="M18.66 19.40L16.63 19.40" stroke="#fff" stroke-width="1.14" stroke-linecap="round"/><path d="M18.99 18.59L17.56 17.16" stroke="#fff" stroke-width="1.14" stroke-linecap="round"/><path d="M19.80 18.26L19.80 16.23" stroke="#fff" stroke-width="1.14" stroke-linecap="round"/><path d="M20.61 18.59L22.04 17.16" stroke="#fff" stroke-width="1.14" stroke-linecap="round"/></svg><svg style="left:245.0px;top:102.0px" width="24" height="24" viewBox="0 0 24 24"><g opacity="0.9"><path d="M3 20L5 14L13 3L16 5L8 16Z" fill="#dcdbd6" stroke="#c8c7c0" stroke-width="0.8"/><path d="M7 22L9 16L17 5L20 7L12 18Z" fill="#dcdbd6" stroke="#c8c7c0" stroke-width="0.8"/></g></svg><svg style="left:277.0px;top:102.0px" width="24" height="24" viewBox="0 0 24 24"><path d="M4 22L5 16L17 2L21 5.5L9 19.5Z" fill="#f2dc4a" stroke="#776a20" stroke-width="0.9"/><path d="M4 22L5 16L9 19.5Z" fill="#ccc" stroke="#555" stroke-width="0.7"/><path d="M16 3L20 6.5" stroke="#ddd" stroke-width="2"/></svg><svg style="left:310.0px;top:102.0px" width="24" height="24" viewBox="0 0 24 24"><rect x="2" y="2" width="19" height="19" rx="2" fill="#d9d8d3"/><rect x="5.5" y="3.5" width="12" height="7" fill="#f1f1f0"/><rect x="7" y="14" width="8" height="6" fill="#f1f1f0"/><path d="M14 22L22 10" stroke="#cfcfca" stroke-width="3"/></svg><svg style="left:344.0px;top:102.0px" width="24" height="24" viewBox="0 0 24 24"><circle cx="14" cy="4" r="2.5" fill="#dcdbd6"/><circle cx="20" cy="8" r="2.5" fill="#dcdbd6"/><circle cx="4" cy="11" r="2.5" fill="#dcdbd6"/><rect x="12" y="13" width="10" height="9" rx="1" fill="#cfcdc6"/></svg><svg style="left:378.0px;top:102.0px" width="24" height="24" viewBox="0 0 24 24"><rect x="2" y="2" width="4" height="4" fill="none" stroke="#c8c7c0" stroke-width="0.9"/><path d="M6 4H15M3 20L5 7" stroke="#d0cfca" stroke-width="0.8"/><path d="M7 21L17 8M9 10L19 20" stroke="#cbcac3" stroke-width="2.8"/></svg><svg style="left:422.0px;top:102.0px" width="24" height="24" viewBox="0 0 24 24"><rect x="2" y="3" width="18" height="5" fill="#dad9d3"/><rect x="2" y="10" width="18" height="5" fill="#dad9d3"/><rect x="2" y="17" width="18" height="5" fill="#dad9d3"/><path d="M8 22L20 3" stroke="#e6e5e0" stroke-width="3.5"/><path d="M8 22L20 3" stroke="#cfcec8" stroke-width="1"/></svg><svg style="left:454.0px;top:102.0px" width="24" height="24" viewBox="0 0 24 24"><rect x="3" y="4" width="18" height="3" fill="#d9cfcf"/><path d="M5 8H19L18 22H6Z" fill="#e0d6d6" stroke="#d0c4c4" stroke-width="0.8"/><path d="M9 10V20M12 10V20M15 10V20" stroke="#c9bcbc" stroke-width="1.2"/></svg><svg style="left:487.0px;top:102.0px" width="24" height="24" viewBox="0 0 24 24"><path d="M1 9L14 15M1 15L14 9" stroke="#cfcfcf" stroke-width="1.4"/><circle cx="18" cy="8" r="3" fill="none" stroke="#d4c8c8" stroke-width="1.6"/><circle cx="18" cy="16" r="3" fill="none" stroke="#d4c8c8" stroke-width="1.6"/></svg><svg style="left:521.0px;top:102.0px" width="24" height="24" viewBox="0 0 24 24"><path d="M9 2H17L20 5V17H9Z" fill="#f6f6f6" stroke="#d4d4d0" stroke-width="0.9"/><path d="M4 7H12L15 10V22H4Z" fill="#f6f6f6" stroke="#d4d4d0" stroke-width="0.9"/><path d="M6 13H12M6 16H12M6 19H12" stroke="#d6d6d2" stroke-width="0.8"/></svg><svg style="left:554.0px;top:102.0px" width="24" height="24" viewBox="0 0 24 24"><rect x="4" y="3" width="16" height="19" rx="1" fill="#eee" stroke="#d4d4d0" stroke-width="0.9"/><rect x="8" y="2" width="8" height="3" fill="#e4e4e0"/><path d="M7 10H17M7 13H17M7 16H17" stroke="#d6d6d2" stroke-width="0.8"/></svg><svg style="left:587.0px;top:102.0px" width="24" height="24" viewBox="0 0 24 24"><path d="M3 9L9 3V6.5C16 6.5 20 10 20 15C20 18 18 21 15 21C17 19 17 11 9 11.5V15Z" fill="#dbd3cf"/></svg><svg style="left:620.0px;top:102.0px" width="24" height="24" viewBox="0 0 24 24"><path d="M21 9L15 3V6.5C8 6.5 4 10 4 15C4 18 6 21 9 21C7 19 7 11 15 11.5V15Z" fill="#d6d6d2"/></svg><svg style="left:668.0px;top:102.0px" width="24" height="24" viewBox="0 0 24 24"><path d="M1 12L5 7H22V17H5Z" fill="#f5dc3c" stroke="#8a7410" stroke-width="0.9"/><text x="6" y="15.5" font-family="Liberation Sans" font-size="9" font-weight="bold" fill="#222">abc</text></svg><svg style="left:701.0px;top:102.0px" width="24" height="24" viewBox="0 0 24 24"><circle cx="9" cy="8" r="7" fill="#3a9a3a"/><path d="M9 8L9 1A7 7 0 0 1 16 8Z" fill="#d83a3a"/><path d="M9 8L16 8A7 7 0 0 1 5 14Z" fill="#f4d53a"/><rect x="12" y="14" width="4" height="8" fill="#f4d53a"/><rect x="17" y="11" width="4" height="11" fill="#3a9a3a"/><rect x="20" y="17" width="3" height="5" fill="#d83a3a"/></svg><svg style="left:742.0px;top:102.0px" width="24" height="24" viewBox="0 0 24 24"><path d="M1 9L5 5H20V14H5Z" fill="#d8e6f7" stroke="#5b89c8" stroke-width="1"/><text x="6" y="12.5" font-family="Liberation Sans" font-size="8.5" font-weight="bold" fill="#222">ab</text><path d="M16 9V18" stroke="#888" stroke-width="1"/><circle cx="16" cy="19" r="3.6" fill="#a82828"/></svg><svg style="left:774.0px;top:102.0px" width="24" height="24" viewBox="0 0 24 24"><path d="M1 9L5 5H22V14H5Z" fill="#fff" stroke="#e02020" stroke-width="1.2"/><text x="6" y="12.8" font-family="Liberation Sans" font-size="8.5" font-weight="bold" fill="#e02020">abc</text></svg><svg style="left:814.0px;top:102.0px" width="24" height="24" viewBox="0 0 24 24"><g><path d="M1 9L5 5H20V14H5Z" fill="#e8e7e2" stroke="#cfcec8" stroke-width="0.9"/><text x="6" y="12.5" font-family="Liberation Sans" font-size="8" font-weight="bold" fill="#c8c7c0">abc</text><circle cx="16" cy="18" r="3.5" fill="#cfcaca"/></g></svg><svg style="left:847.0px;top:102.0px" width="24" height="24" viewBox="0 0 24 24"><g><path d="M1 9L5 5H20V14H5Z" fill="#e8e7e2" stroke="#cfcec8" stroke-width="0.9"/><text x="6" y="12.5" font-family="Liberation Sans" font-size="8" font-weight="bold" fill="#c8c7c0">abc</text><ellipse cx="16" cy="19" rx="6" ry="3" fill="none" stroke="#cfcfcf" stroke-width="1.2"/><circle cx="16" cy="19" r="1.6" fill="#cfcfcf"/></g></svg><svg style="left:880.0px;top:102.0px" width="24" height="24" viewBox="0 0 24 24"><g><path d="M1 9L5 5H20V14H5Z" fill="#e8e7e2" stroke="#cfcec8" stroke-width="0.9"/><text x="6" y="12.5" font-family="Liberation Sans" font-size="8" font-weight="bold" fill="#c8c7c0">abc</text><rect x="13" y="14" width="9" height="9" rx="1" fill="#cfcdc6"/><path d="M15 18.5H20M18 16L20.5 18.5L18 21" stroke="#fff" stroke-width="1.3" fill="none"/></g></svg><svg style="left:913.0px;top:102.0px" width="24" height="24" viewBox="0 0 24 24"><g><path d="M1 9L5 5H20V14H5Z" fill="#e8e7e2" stroke="#cfcec8" stroke-width="0.9"/><text x="6" y="12.5" font-family="Liberation Sans" font-size="8" font-weight="bold" fill="#c8c7c0">abc</text><rect x="13" y="14" width="9" height="9" rx="1" fill="#cfcdc6"/><circle cx="17.5" cy="18.5" r="2.3" fill="none" stroke="#fff" stroke-width="1.2"/></g></svg><svg style="left:946.0px;top:102.0px" width="24" height="24" viewBox="0 0 24 24"><g><path d="M1 9L5 5H20V14H5Z" fill="#e8e7e2" stroke="#cfcec8" stroke-width="0.9"/><text x="6" y="12.5" font-family="Liberation Sans" font-size="8" font-weight="bold" fill="#c8c7c0">abc</text><rect x="13" y="14" width="9" height="9" rx="1" fill="#cfcdc6"/><path d="M15 21L20 16" stroke="#fff" stroke-width="1.5"/></g></svg><svg style="left:1013.0px;top:102.0px" width="24" height="24" viewBox="0 0 24 24"><path d="M11.5 2C7 2 7 4 7 5V8H12V9H5C3 9 2 11 2 13C2 15.5 3 17 5 17H7V14C7 12.5 8 11.5 9.5 11.5H14.5C16 11.5 17 10.5 17 9V5C17 3 15 2 11.5 2Z" fill="#3f78b5"/><path d="M12.5 22C17 22 17 20 17 19V16H12V15H19C21 15 22 13 22 11C22 8.5 21 7 19 7H17V10C17 11.5 16 12.5 14.5 12.5H9.5C8 12.5 7 13.5 7 15V19C7 21 9 22 12.5 22Z" fill="#f6d643"/><circle cx="9.5" cy="4.5" r="0.9" fill="#fff"/><path d="M16 17L21 20L16 23" stroke="#333" stroke-width="1.2" fill="none"/></svg><svg style="left:1062.0px;top:102.0px" width="24" height="24" viewBox="0 0 24 24"><rect x="3" y="2" width="18" height="20" fill="#5b89c8" stroke="#1f2f4a" stroke-width="1"/><rect x="3" y="2" width="3.5" height="20" fill="#222f44"/><text x="10" y="17" font-family="Liberation Sans" font-size="13" fill="#fff">?</text></svg><div class="a" style="left:181px;top:105px;width:1px;height:19px;background:#d4d4d4"></div><div class="a" style="left:182px;top:105px;width:1px;height:19px;background:#fafafa"></div><div class="a" style="left:221px;top:105px;width:1px;height:19px;background:#d4d4d4"></div><div class="a" style="left:222px;top:105px;width:1px;height:19px;background:#fafafa"></div><div class="a" style="left:233px;top:106px;width:1px;height:1px;background:#b4b4b4"></div><div class="a" style="left:236px;top:106px;width:1px;height:1px;background:#b4b4b4"></div><div class="a" style="left:233px;top:109px;width:1px;height:1px;background:#b4b4b4"></div><div class="a" style="left:236px;top:109px;width:1px;height:1px;background:#b4b4b4"></div><div class="a" style="left:233px;top:112px;width:1px;height:1px;background:#b4b4b4"></div><div class="a" style="left:236px;top:112px;width:1px;height:1px;background:#b4b4b4"></div><div class="a" style="left:233px;top:115px;width:1px;height:1px;background:#b4b4b4"></div><div class="a" style="left:236px;top:115px;width:1px;height:1px;background:#b4b4b4"></div><div class="a" style="left:233px;top:118px;width:1px;height:1px;background:#b4b4b4"></div><div class="a" style="left:236px;top:118px;width:1px;height:1px;background:#b4b4b4"></div><div class="a" style="left:233px;top:121px;width:1px;height:1px;background:#b4b4b4"></div><div class="a" style="left:236px;top:121px;width:1px;height:1px;background:#b4b4b4"></div><div class="a" style="left:657px;top:106px;width:1px;height:1px;background:#b4b4b4"></div><div class="a" style="left:660px;top:106px;width:1px;height:1px;background:#b4b4b4"></div><div class="a" style="left:657px;top:109px;width:1px;height:1px;background:#b4b4b4"></div><div class="a" style="left:660px;top:109px;width:1px;height:1px;background:#b4b4b4"></div><div class="a" style="left:657px;top:112px;width:1px;height:1px;background:#b4b4b4"></div><div class="a" style="left:660px;top:112px;width:1px;height:1px;background:#b4b4b4"></div><div class="a" style="left:657px;top:115px;width:1px;height:1px;background:#b4b4b4"></div><div class="a" style="left:660px;top:115px;width:1px;height:1px;background:#b4b4b4"></div><div class="a" style="left:657px;top:118px;width:1px;height:1px;background:#b4b4b4"></div><div class="a" style="left:660px;top:118px;width:1px;height:1px;background:#b4b4b4"></div><div class="a" style="left:657px;top:121px;width:1px;height:1px;background:#b4b4b4"></div><div class="a" style="left:660px;top:121px;width:1px;height:1px;background:#b4b4b4"></div><div class="a" style="left:734px;top:105px;width:1px;height:19px;background:#d4d4d4"></div><div class="a" style="left:735px;top:105px;width:1px;height:19px;background:#fafafa"></div><div class="a" style="left:807px;top:105px;width:1px;height:19px;background:#d4d4d4"></div><div class="a" style="left:808px;top:105px;width:1px;height:19px;background:#fafafa"></div><div class="a" style="left:985px;top:106px;width:1px;height:1px;background:#b4b4b4"></div><div class="a" style="left:988px;top:106px;width:1px;height:1px;background:#b4b4b4"></div><div class="a" style="left:985px;top:109px;width:1px;height:1px;background:#b4b4b4"></div><div class="a" style="left:988px;top:109px;width:1px;height:1px;background:#b4b4b4"></div><div class="a" style="left:985px;top:112px;width:1px;height:1px;background:#b4b4b4"></div><div class="a" style="left:988px;top:112px;width:1px;height:1px;background:#b4b4b4"></div><div class="a" style="left:985px;top:115px;width:1px;height:1px;background:#b4b4b4"></div><div class="a" style="left:988px;top:115px;width:1px;height:1px;background:#b4b4b4"></div><div class="a" style="left:985px;top:118px;width:1px;height:1px;background:#b4b4b4"></div><div class="a" style="left:988px;top:118px;width:1px;height:1px;background:#b4b4b4"></div><div class="a" style="left:985px;top:121px;width:1px;height:1px;background:#b4b4b4"></div><div class="a" style="left:988px;top:121px;width:1px;height:1px;background:#b4b4b4"></div><div class="a" style="left:1002px;top:106px;width:1px;height:1px;background:#b4b4b4"></div><div class="a" style="left:1005px;top:106px;width:1px;height:1px;background:#b4b4b4"></div><div class="a" style="left:1002px;top:109px;width:1px;height:1px;background:#b4b4b4"></div><div class="a" style="left:1005px;top:109px;width:1px;height:1px;background:#b4b4b4"></div><div class="a" style="left:1002px;top:112px;width:1px;height:1px;background:#b4b4b4"></div><div class="a" style="left:1005px;top:112px;width:1px;height:1px;background:#b4b4b4"></div><div class="a" style="left:1002px;top:115px;width:1px;height:1px;background:#b4b4b4"></div><div class="a" style="left:1005px;top:115px;width:1px;height:1px;background:#b4b4b4"></div><div class="a" style="left:1002px;top:118px;width:1px;height:1px;background:#b4b4b4"></div><div class="a" style="left:1005px;top:118px;width:1px;height:1px;background:#b4b4b4"></div><div class="a" style="left:1002px;top:121px;width:1px;height:1px;background:#b4b4b4"></div><div class="a" style="left:1005px;top:121px;width:1px;height:1px;background:#b4b4b4"></div><div class="a" style="left:1050px;top:106px;width:1px;height:1px;background:#b4b4b4"></div><div class="a" style="left:1053px;top:106px;width:1px;height:1px;background:#b4b4b4"></div><div class="a" style="left:1050px;top:109px;width:1px;height:1px;background:#b4b4b4"></div><div class="a" style="left:1053px;top:109px;width:1px;height:1px;background:#b4b4b4"></div><div class="a" style="left:1050px;top:112px;width:1px;height:1px;background:#b4b4b4"></div><div class="a" style="left:1053px;top:112px;width:1px;height:1px;background:#b4b4b4"></div><div class="a" style="left:1050px;top:115px;width:1px;height:1px;background:#b4b4b4"></div><div class="a" style="left:1053px;top:115px;width:1px;height:1px;background:#b4b4b4"></div><div class="a" style="left:1050px;top:118px;width:1px;height:1px;background:#b4b4b4"></div><div class="a" style="left:1053px;top:118px;width:1px;height:1px;background:#b4b4b4"></div><div class="a" style="left:1050px;top:121px;width:1px;height:1px;background:#b4b4b4"></div><div class="a" style="left:1053px;top:121px;width:1px;height:1px;background:#b4b4b4"></div><div class="a" style="left:1099px;top:106px;width:1px;height:1px;background:#b4b4b4"></div><div class="a" style="left:1102px;top:106px;width:1px;height:1px;background:#b4b4b4"></div><div class="a" style="left:1099px;top:109px;width:1px;height:1px;background:#b4b4b4"></div><div class="a" style="left:1102px;top:109px;width:1px;height:1px;background:#b4b4b4"></div><div class="a" style="left:1099px;top:112px;width:1px;height:1px;background:#b4b4b4"></div><div class="a" style="left:1102px;top:112px;width:1px;height:1px;background:#b4b4b4"></div><div class="a" style="left:1099px;top:115px;width:1px;height:1px;background:#b4b4b4"></div><div class="a" style="left:1102px;top:115px;width:1px;height:1px;background:#b4b4b4"></div><div class="a" style="left:1099px;top:118px;width:1px;height:1px;background:#b4b4b4"></div><div class="a" style="left:1102px;top:118px;width:1px;height:1px;background:#b4b4b4"></div><div class="a" style="left:1099px;top:121px;width:1px;height:1px;background:#b4b4b4"></div><div class="a" style="left:1102px;top:121px;width:1px;height:1px;background:#b4b4b4"></div><svg style="left:264.5px;top:123px" width="7" height="4"><path d="M0 0L7 0L3.5 3.5Z" fill="#c8c8c8"/></svg><svg style="left:406.5px;top:112px" width="7" height="4"><path d="M0 0L7 0L3.5 3.5Z" fill="#c8c8c8"/></svg><div class="a" style="left:6px;top:145px;width:1px;height:1px;background:#b4b4b4"></div><div class="a" style="left:9px;top:145px;width:1px;height:1px;background:#b4b4b4"></div><div class="a" style="left:6px;top:148px;width:1px;height:1px;background:#b4b4b4"></div><div class="a" style="left:9px;top:148px;width:1px;height:1px;background:#b4b4b4"></div><div class="a" style="left:6px;top:151px;width:1px;height:1px;background:#b4b4b4"></div><div class="a" style="left:9px;top:151px;width:1px;height:1px;background:#b4b4b4"></div><div class="a" style="left:6px;top:154px;width:1px;height:1px;background:#b4b4b4"></div><div class="a" style="left:9px;top:154px;width:1px;height:1px;background:#b4b4b4"></div><div class="a" style="left:6px;top:157px;width:1px;height:1px;background:#b4b4b4"></div><div class="a" style="left:9px;top:157px;width:1px;height:1px;background:#b4b4b4"></div><div class="a" style="left:6px;top:160px;width:1px;height:1px;background:#b4b4b4"></div><div class="a" style="left:9px;top:160px;width:1px;height:1px;background:#b4b4b4"></div><svg style="left:16.0px;top:141.0px" width="24" height="24" viewBox="0 0 24 24"><path d="M3 3V21H21Z" fill="#e5e0da" stroke="#cfc8c0" stroke-width="1"/><path d="M7 13V17H11Z" fill="#f4f4f4" stroke="#cfc8c0" stroke-width="0.8"/><path d="M15 3H21V21" fill="#e5e0da" stroke="#cfc8c0" stroke-width="1"/></svg><svg style="left:51.0px;top:141.0px" width="24" height="24" viewBox="0 0 24 24"><circle cx="14" cy="4" r="2.5" fill="#dcdbd6"/><circle cx="20" cy="8" r="2.5" fill="#dcdbd6"/><circle cx="4" cy="11" r="2.5" fill="#dcdbd6"/><rect x="12" y="13" width="10" height="9" rx="1" fill="#cfcdc6"/></svg><svg style="left:95.0px;top:141.0px" width="24" height="24" viewBox="0 0 24 24"><path d="M3 7C3 3 8 2 12 3C16 4 20 3 21 7C22 11 18 12 14 12C10 12 3 11 3 7Z" fill="#dcdcd8" stroke="#cfcfcb" stroke-width="0.8"/><rect x="13" y="13" width="9" height="9" rx="1" fill="#d2d2cf"/><circle cx="17.5" cy="17.5" r="2.5" fill="none" stroke="#fff" stroke-width="1.2"/></svg><svg style="left:128.0px;top:141.0px" width="24" height="24" viewBox="0 0 24 24"><circle cx="9" cy="8" r="6.5" fill="#dcdcd8" stroke="#cfcfcb" stroke-width="0.8"/><path d="M12 11L17 9L22 14L19 21H14L11 16Z" fill="#e4e4e1" stroke="#cfcfcb" stroke-width="0.8"/></svg><svg style="left:161.0px;top:141.0px" width="24" height="24" viewBox="0 0 24 24"><path d="M3 7C3 3 8 2 12 3C16 4 20 3 21 7C22 11 18 12 14 12C10 12 3 11 3 7Z" fill="#dcdcd8" stroke="#cfcfcb" stroke-width="0.8"/><ellipse cx="8" cy="6.5" rx="3.5" ry="2.2" fill="#f0f0ee" stroke="#cfcfcb" stroke-width="0.8"/><rect x="13" y="13" width="9" height="9" rx="1.80" fill="#cfcac0"/><path d="M17.5 17.5L20.62 19.30" stroke="#fff" stroke-width="0.77"/><path d="M17.5 17.5L14.38 19.30" stroke="#fff" stroke-width="0.77"/><path d="M17.5 17.5L14.38 15.70" stroke="#fff" stroke-width="0.77"/><path d="M17.5 17.5L20.62 15.70" stroke="#fff" stroke-width="0.77"/><circle cx="17.5" cy="17.5" r="1.80" fill="#cfcac0" stroke="#fff" stroke-width="0.90"/><path d="M17.5 13.9V21.1" stroke="#fff" stroke-width="0.77"/></svg><svg style="left:194.0px;top:141.0px" width="24" height="24" viewBox="0 0 24 24"><path d="M3 7C3 3 8 2 12 3C16 4 20 3 21 7C22 11 18 12 14 12C10 12 3 11 3 7Z" fill="#dcdcd8"/><path d="M2 20C3 15 6 12 9 13C11 14 8 20 5 21Z" fill="#dcdcd8"/><rect x="13" y="13" width="9" height="9" rx="1.80" fill="#cfcac0"/><path d="M17.5 17.5L20.62 19.30" stroke="#fff" stroke-width="0.77"/><path d="M17.5 17.5L14.38 19.30" stroke="#fff" stroke-width="0.77"/><path d="M17.5 17.5L14.38 15.70" stroke="#fff" stroke-width="0.77"/><path d="M17.5 17.5L20.62 15.70" stroke="#fff" stroke-width="0.77"/><circle cx="17.5" cy="17.5" r="1.80" fill="#cfcac0" stroke="#fff" stroke-width="0.90"/><path d="M17.5 13.9V21.1" stroke="#fff" stroke-width="0.77"/></svg><svg style="left:227.0px;top:141.0px" width="24" height="24" viewBox="0 0 24 24"><path d="M3 7C3 3 8 2 12 3C16 4 20 3 21 7C22 11 18 12 14 12C10 12 3 11 3 7Z" fill="#dcdcd8" stroke="#cfcfcb" stroke-width="0.8"/><ellipse cx="8" cy="6.5" rx="3.5" ry="2.2" fill="#f0f0ee" stroke="#cfcfcb" stroke-width="0.8"/><rect x="13" y="13" width="9" height="9" rx="1.80" fill="#cfcac0"/><path d="M17.5 17.5L20.62 19.30" stroke="#fff" stroke-width="0.77"/><path d="M17.5 17.5L14.38 19.30" stroke="#fff" stroke-width="0.77"/><path d="M17.5 17.5L14.38 15.70" stroke="#fff" stroke-width="0.77"/><path d="M17.5 17.5L20.62 15.70" stroke="#fff" stroke-width="0.77"/><circle cx="17.5" cy="17.5" r="1.80" fill="#cfcac0" stroke="#fff" stroke-width="0.90"/><path d="M17.5 13.9V21.1" stroke="#fff" stroke-width="0.77"/></svg><svg style="left:260.0px;top:141.0px" width="24" height="24" viewBox="0 0 24 24"><path d="M3 7C3 3 8 2 12 3C16 4 20 3 21 7C22 11 18 12 14 12C10 12 3 11 3 7Z" fill="#dcdcd8" stroke="#cfcfcb" stroke-width="0.8"/><ellipse cx="8" cy="6.5" rx="3.5" ry="2.2" fill="#f0f0ee" stroke="#cfcfcb" stroke-width="0.8"/><rect x="13" y="13" width="9" height="9" rx="1" fill="#e2d8d8"/><path d="M15 15L20 20M20 15L15 20" stroke="#fff" stroke-width="1.4"/></svg><svg style="left:293.0px;top:141.0px" width="24" height="24" viewBox="0 0 24 24"><path d="M3 7C3 3 8 2 12 3C16 4 20 3 21 7C22 11 18 12 14 12C10 12 3 11 3 7Z" fill="#dcdcd8"/><path d="M2 20C3 15 6 12 9 13C11 14 8 20 5 21Z" fill="#dcdcd8"/><rect x="13" y="13" width="9" height="9" rx="1" fill="#e2d8d8"/><path d="M15 15L20 20M20 15L15 20" stroke="#fff" stroke-width="1.4"/></svg><svg style="left:326.0px;top:141.0px" width="24" height="24" viewBox="0 0 24 24"><path d="M3 8C3 3 8 2 12 3C17 4 21 4 21 8C21 12 15 11 13 13C11 15 12 21 9 21C6 21 3 14 3 8Z" fill="#dcdcd8" stroke="#cfcfcb" stroke-width="0.8"/></svg><svg style="left:359.0px;top:141.0px" width="24" height="24" viewBox="0 0 24 24"><path d="M4 18C1 15 3 10 8 6C13 2 18 2 20 4C23 7 20 11 16 14C11 18 7 21 4 18Z" fill="#dcdcd8" stroke="#c9c9c5" stroke-width="1.4"/><path d="M6 16C4 14 6 11 9 8C13 5 16 5 18 6C19 8 17 11 14 13C11 15 8 17 6 16Z" fill="none" stroke="#c9c9c5" stroke-width="0.8"/></svg><svg style="left:393.0px;top:141.0px" width="24" height="24" viewBox="0 0 24 24"><path d="M2 2L8 14L12 6H20" stroke="#cfcfcb" stroke-width="1" fill="none"/><rect x="1" y="1" width="3" height="3" fill="#fff" stroke="#cfcfcb" stroke-width="0.8"/><rect x="11" y="5" width="3" height="3" fill="#fff" stroke="#cfcfcb" stroke-width="0.8"/><rect x="18" y="5" width="3" height="3" fill="#fff" stroke="#cfcfcb" stroke-width="0.8"/><rect x="12" y="13" width="10" height="10" rx="1.5" fill="#d6d6d2"/><circle cx="17" cy="18" r="2.6" fill="none" stroke="#fff" stroke-width="1.2"/></svg><svg style="left:425.0px;top:141.0px" width="24" height="24" viewBox="0 0 24 24"><path d="M12 1V23M2 11H21" stroke="#d0d0cc" stroke-width="1"/><rect x="10" y="9" width="4" height="4" fill="#fff" stroke="#cfcfcb" stroke-width="0.8"/><rect x="15" y="9" width="4" height="4" fill="#fff" stroke="#cfcfcb" stroke-width="0.8"/><rect x="2" y="15" width="6" height="6" fill="#e8dede" stroke="#d6cccc" stroke-width="0.8"/><rect x="16" y="1" width="6" height="6" fill="#e5e0d0" stroke="#d6ccbc" stroke-width="0.8"/></svg><svg style="left:458.0px;top:141.0px" width="24" height="24" viewBox="0 0 24 24"><circle cx="7" cy="7" r="5.5" fill="#dcdcd8" stroke="#cfcfcb" stroke-width="0.8"/><circle cx="17" cy="7" r="5.5" fill="#dcdcd8" stroke="#cfcfcb" stroke-width="0.8"/><path d="M14 2L9 17M10 2L15 17" stroke="#d9caca" stroke-width="1"/><circle cx="8" cy="19" r="2.5" fill="none" stroke="#d9bcbc" stroke-width="1.2"/><circle cx="16" cy="19" r="2.5" fill="none" stroke="#d9bcbc" stroke-width="1.2"/></svg><svg style="left:491.0px;top:141.0px" width="24" height="24" viewBox="0 0 24 24"><circle cx="7" cy="7" r="5.5" fill="#dcdcd8" stroke="#cfcfcb" stroke-width="0.8"/><circle cx="17" cy="7" r="5.5" fill="#dcdcd8" stroke="#cfcfcb" stroke-width="0.8"/><path d="M14 2L9 17M10 2L15 17" stroke="#d9caca" stroke-width="1"/><circle cx="8" cy="19" r="2.5" fill="none" stroke="#d9bcbc" stroke-width="1.2"/><circle cx="16" cy="19" r="2.5" fill="none" stroke="#d9bcbc" stroke-width="1.2"/></svg><svg style="left:524.0px;top:141.0px" width="24" height="24" viewBox="0 0 24 24"><circle cx="7" cy="7" r="5.5" fill="#dcdcd8" stroke="#cfcfcb" stroke-width="0.8"/><circle cx="17" cy="7" r="5.5" fill="#dcdcd8" stroke="#cfcfcb" stroke-width="0.8"/><path d="M10 5H16M10 8H16M12 3V10M15 3V10" stroke="#c9c9c5" stroke-width="0.8"/><path d="M5 13C7 17 10 20 13 22" stroke="#c9c9c5" stroke-width="1" fill="none"/></svg><svg style="left:557.0px;top:141.0px" width="24" height="24" viewBox="0 0 24 24"><path d="M2 3H22M2 6H22M2 11H22M2 14H22M2 19H22M2 22H22" stroke="#d6d6d2" stroke-width="1"/><path d="M10 1C12 3 12 5 14 7M10 9C12 11 12 13 14 15M10 17C12 19 12 21 14 23" stroke="#c9c9c5" stroke-width="0.8" fill="none"/></svg><svg style="left:591.0px;top:141.0px" width="24" height="24" viewBox="0 0 24 24"><path d="M6 16C4 13 4 8 8 5" stroke="#cfcfcb" stroke-width="1.2" fill="none"/><path d="M7 3L10 5L7 8" stroke="#cfcfcb" stroke-width="1.2" fill="none"/><path d="M13 2V12L21 7Z" fill="#dcdcd8"/><path d="M13 13L9 22H18Z" fill="none" stroke="#d4d4d0" stroke-width="1"/></svg><svg style="left:80.5px;top:151px" width="7" height="4"><path d="M0 0L7 0L3.5 3.5Z" fill="#c8c8c8"/></svg><svg style="left:620.5px;top:151px" width="7" height="4"><path d="M0 0L7 0L3.5 3.5Z" fill="#c8c8c8"/></svg><div class="a" style="left:6px;top:184px;width:1px;height:1px;background:#b4b4b4"></div><div class="a" style="left:9px;top:184px;width:1px;height:1px;background:#b4b4b4"></div><div class="a" style="left:6px;top:187px;width:1px;height:1px;background:#b4b4b4"></div><div class="a" style="left:9px;top:187px;width:1px;height:1px;background:#b4b4b4"></div><div class="a" style="left:6px;top:190px;width:1px;height:1px;background:#b4b4b4"></div><div class="a" style="left:9px;top:190px;width:1px;height:1px;background:#b4b4b4"></div><div class="a" style="left:6px;top:193px;width:1px;height:1px;background:#b4b4b4"></div><div class="a" style="left:9px;top:193px;width:1px;height:1px;background:#b4b4b4"></div><div class="a" style="left:6px;top:196px;width:1px;height:1px;background:#b4b4b4"></div><div class="a" style="left:9px;top:196px;width:1px;height:1px;background:#b4b4b4"></div><div class="a" style="left:6px;top:199px;width:1px;height:1px;background:#b4b4b4"></div><div class="a" style="left:9px;top:199px;width:1px;height:1px;background:#b4b4b4"></div><svg style="left:16.0px;top:180.0px" width="24" height="24" viewBox="0 0 24 24"><rect x="2.5" y="1.5" width="21" height="18.5" fill="#e6e6e6" stroke="#222" stroke-width="1.1" stroke-dasharray="2 1.4"/><rect x="3.2" y="2.2" width="13" height="13" fill="#fbe54a" stroke="#c8a810" stroke-width="0.9"/><path d="M11 8.5L23.5 17.5L18.8 18.4L22.2 23.2L20.2 24.3L16.8 19.4L13.6 22.6Z" fill="#fff" stroke="#333" stroke-width="0.9" stroke-linejoin="round"/></svg><svg style="left:46px;top:189.5px" width="8" height="5"><path d="M0 0L8 0L4 4.5Z" fill="#444"/></svg><svg style="left:63.0px;top:180.0px" width="24" height="24" viewBox="0 0 24 24"><rect x="5.3" y="8.3" width="15.2" height="13.2" fill="#fbe54a" stroke="#c8a810" stroke-width="0.9"/><rect x="2" y="3" width="14.5" height="13.5" fill="#d8dde6" stroke="#8a8a8a" stroke-width="1.1"/><rect x="4" y="5" width="10.5" height="3" fill="#fff" stroke="#8a8a8a" stroke-width="0.6"/><rect x="4" y="10" width="10.5" height="3" fill="#fff" stroke="#8a8a8a" stroke-width="0.6"/></svg><svg style="left:92px;top:189.5px" width="8" height="5"><path d="M0 0L8 0L4 4.5Z" fill="#444"/></svg><svg style="left:108.0px;top:180.0px" width="24" height="24" viewBox="0 0 24 24"><rect x="1.5" y="2.2" width="13.4" height="13.2" fill="#fbe54a" stroke="#c8a810" stroke-width="0.9"/><rect x="5.5" y="6" width="13.2" height="13.6" fill="#fbe54a" stroke="#c8a810" stroke-width="0.9"/><rect x="12" y="13" width="10.8" height="10.8" rx="2.2" fill="#d62a2a"/><circle cx="17.4" cy="18.4" r="3.4" fill="none" stroke="#fff" stroke-width="1.2"/><path d="M15 20.8L19.8 16" stroke="#fff" stroke-width="1.2"/></svg><svg style="left:137px;top:189.5px" width="8" height="5"><path d="M0 0L8 0L4 4.5Z" fill="#444"/></svg><div class="t" style="left:4px;top:214.30px;font-size:15px;color:#1a1a1a;font-weight:normal;">Browser</div><svg style="left:423px;top:217px" width="26" height="12"><rect x="0.5" y="0.5" width="11" height="11" rx="2.5" fill="none" stroke="#666" stroke-width="1"/><rect x="3" y="5" width="4.5" height="4.5" fill="none" stroke="#666" stroke-width="1"/><path d="M5 5V3H9V7H7.5" fill="none" stroke="#666" stroke-width="1"/><rect x="14.5" y="0.5" width="11" height="11" rx="2.5" fill="none" stroke="#666" stroke-width="1"/><path d="M17.3 3.3L22.7 8.7M22.7 3.3L17.3 8.7" stroke="#555" stroke-width="2"/></svg><svg style="left:7.0px;top:240.0px" width="16" height="16" viewBox="0 0 16 16"><rect x="1.5" y="1.5" width="11" height="11" fill="#fff" stroke="#777"/><circle cx="12.5" cy="12.5" r="2.6" fill="#4a9a5a" stroke="#fff" stroke-width="0.6"/></svg><svg style="left:33.0px;top:240.0px" width="16" height="16" viewBox="0 0 24 24"><defs><linearGradient id="rg1" x1="0" y1="0" x2="1" y2="0.6"><stop offset="0" stop-color="#9dbbe2"/><stop offset="1" stop-color="#4479bd"/></linearGradient><linearGradient id="rg2" x1="0" y1="0" x2="1" y2="0.6"><stop offset="0" stop-color="#78a0d6"/><stop offset="1" stop-color="#3a6cb0"/></linearGradient></defs><path d="M2 10.75Q3 1 11 1.2Q15.5 1.5 18.5 5L21.75 2V11.75H13.25L15.5 8.25Q12.5 5.5 8.25 5.75Q4.5 6.5 2.75 10.75Z" fill="url(#rg1)" stroke="#3f6fae" stroke-width="0.5"/><path d="M21.75 13.25Q21 22.5 13 22.75Q8.5 22.5 5.5 19L2 21.75V12H10.5L7.75 15.5Q11.5 18.5 15.75 18Q19.5 17 21 13.25Z" fill="url(#rg2)" stroke="#3f6fae" stroke-width="0.5"/></svg><svg style="left:58.0px;top:240.0px" width="16" height="16" viewBox="0 0 16 16"><path d="M1 1.5H15L9.5 8V15L6.5 13V8Z" fill="#6a97cf" stroke="#3e6aa8" stroke-width="0.7"/><rect x="1.5" y="1.5" width="13" height="2" fill="#f2dc3a"/></svg><svg style="left:83.0px;top:240.0px" width="16" height="16" viewBox="0 0 16 16"><rect x="1" y="3" width="8" height="12" fill="#f4f4f4" stroke="#999" stroke-width="0.8"/><rect x="3" y="6" width="2.5" height="2.5" fill="#f0a030"/><rect x="3" y="11" width="2.5" height="2.5" fill="#f0a030"/><path d="M9.3 15H12.7V7H15.5L11 1L6.5 7H9.3Z" fill="#6a97cf" stroke="#2f4f80" stroke-width="0.7" stroke-linejoin="round"/></svg><svg style="left:108.0px;top:240.0px" width="16" height="16" viewBox="0 0 16 16"><circle cx="8" cy="8" r="7" fill="#6a97cf"/><text x="5.6" y="12.5" font-family="Liberation Serif" font-size="11" font-style="italic" font-weight="bold" fill="#fff">i</text></svg><div class="a" style="left:0px;top:264px;width:450px;height:471px;background:#fff;border:1px solid #b4b4b4"></div><div class="a" style="left:435px;top:265px;width:14px;height:469px;background:#f4f4f4;border-left:1px solid #c8c8c8"></div><div class="a" style="left:435px;top:613px;width:14px;height:107px;background:#dcdcdc;border:1px solid #c4c4c4"></div><div class="a" style="left:435px;top:279px;width:14px;height:1px;background:#c8c8c8"></div><div class="a" style="left:435px;top:719px;width:14px;height:1px;background:#c8c8c8"></div><svg style="left:437px;top:268px" width="10" height="8"><path d="M1 7L5 2L9 7Z" fill="#555"/></svg><svg style="left:437px;top:724px" width="10" height="8"><path d="M1 1L5 6L9 1Z" fill="#555"/></svg><div class="a" style="left:1px;top:265px;width:434px;height:469px;overflow:hidden"><svg style="left:23.0px;top:2.0px" width="16" height="16" viewBox="0 0 16 16"><path d="M8 0.8L10.1 5.6L15.3 6L11.4 9.4L12.6 14.6L8 11.8L3.4 14.6L4.6 9.4L0.7 6L5.9 5.6Z" fill="#f7e43c" stroke="#c8a818" stroke-width="0.7"/></svg><div class="t" style="left:45px;top:2.80px;font-size:15px;color:#1a1a1a;font-weight:normal;">Favorites</div><svg style="left:8px;top:27px" width="6" height="8"><path d="M0 0L4.5 4L0 8Z" fill="#444"/></svg><svg style="left:23.0px;top:23.0px" width="16" height="16" viewBox="0 0 16 16"><rect x="1" y="1" width="14" height="14" rx="1.5" fill="#e4e4e4" stroke="#aaa" stroke-width="0.8"/><rect x="1" y="1" width="3" height="14" fill="#cfcfcf"/><path d="M8 1H11V7L9.5 5.5L8 7Z" fill="#5b89c8"/></svg><div class="t" style="left:45px;top:23.80px;font-size:15px;color:#1a1a1a;font-weight:normal;">Spatial Bookmarks</div><svg style="left:8px;top:48px" width="6" height="8"><path d="M0 0L4.5 4L0 8Z" fill="#444"/></svg><svg style="left:23.0px;top:44.0px" width="16" height="16" viewBox="0 0 16 16"><rect x="1" y="2" width="14" height="12" fill="#f2f2f2" stroke="#777" stroke-width="0.8"/><path d="M4.5 8.5L8 5.5L11.5 8.5V11.5H4.5Z" fill="none" stroke="#444" stroke-width="0.9"/></svg><div class="t" style="left:45px;top:44.80px;font-size:15px;color:#1a1a1a;font-weight:normal;">Home</div><svg style="left:8px;top:69px" width="6" height="8"><path d="M0 0L4.5 4L0 8Z" fill="#444"/></svg><svg style="left:23.0px;top:65.0px" width="16" height="16" viewBox="0 0 16 16"><path d="M1 2.5H6L7.5 4H15V14H1Z" fill="#f0f0f0" stroke="#8a8a8a" stroke-width="0.8"/></svg><div class="t" style="left:45px;top:65.80px;font-size:15px;color:#1a1a1a;font-weight:normal;">/</div><svg style="left:23.0px;top:86.0px" width="16" height="16" viewBox="0 0 16 16"><path d="M1 6L8 9V15.5L1 12.5Z" fill="#e3bd1c" stroke="#4a3e0c" stroke-width="0.7"/><path d="M8 9L15 6V12.5L8 15.5Z" fill="#f8ec88" stroke="#4a3e0c" stroke-width="0.7"/><path d="M1 6L8 3L15 6L8 9Z" fill="#f4e070" stroke="#4a3e0c" stroke-width="0.7"/><circle cx="8" cy="5" r="4.6" fill="#7aa4d8" stroke="#3a5a8a" stroke-width="0.6"/><path d="M5 2.5C6 3.5 5 5 6.5 5.5C7.5 6 7 7.5 8 8M9.5 1.5C9.5 3 11 3.5 12 4.5" stroke="#2f4f80" stroke-width="1.3" fill="none"/></svg><div class="t" style="left:45px;top:86.80px;font-size:15px;color:#1a1a1a;font-weight:normal;">GeoPackage</div><svg style="left:23.0px;top:107.0px" width="16" height="16" viewBox="0 0 16 16"><path d="M1 15.5C3 9 7 3.5 15.5 0.8C14.5 6 11 11 3.5 13.5Z" fill="#9dbbe2" stroke="#3e6aa8" stroke-width="0.7"/><path d="M1 15.5L13 3.5M5 10L4.5 7M7.5 7.5L7.5 4.8M10 5.5L10.5 3" stroke="#3e6aa8" stroke-width="0.6" fill="none"/></svg><div class="t" style="left:45px;top:107.80px;font-size:15px;color:#1a1a1a;font-weight:normal;">SpatiaLite</div><svg style="left:23.0px;top:128.0px" width="16" height="16" viewBox="0 0 16 16"><path d="M2 3C4 0.8 12 0.8 14.2 3C15.6 5 15.2 8 13.6 9.6C13 11.2 12 13.2 11 15.2L9.5 15.2C9.5 13.2 9 11.2 8 10.6C7 11.2 6.5 13 6.5 14.6L5 14.6C5 12.2 4.5 10.2 3 9.2C1.4 8 1 5 2 3Z" fill="#6a97cf" stroke="#2f4f80" stroke-width="0.8"/><path d="M5.5 2.5C4.5 5.5 5.5 8 8.5 8.2M9.5 3V9" stroke="#2f4f80" stroke-width="0.8" fill="none"/></svg><div class="t" style="left:45px;top:128.80px;font-size:15px;color:#1a1a1a;font-weight:normal;">PostGIS</div><svg style="left:23.0px;top:149.0px" width="16" height="16" viewBox="0 0 16 16"><path d="M1 15.2C3 11 4 5 2 0.8C7 2 12 5 15.5 8C11 9.2 6 11 1 15.2Z" fill="#6a97cf" stroke="#2f5a8f" stroke-width="0.6"/><path d="M5.5 2.5C6.5 6.5 5.5 10.5 3.5 13M9.5 4.5C10 7.5 9 10 7.2 11.8" stroke="#c8daf0" stroke-width="0.7" fill="none"/></svg><div class="t" style="left:45px;top:149.80px;font-size:15px;color:#1a1a1a;font-weight:normal;">MSSQL</div><svg style="left:23.0px;top:170.0px" width="16" height="16" viewBox="0 0 16 16"><rect x="0.5" y="0.5" width="15" height="15" rx="2.5" fill="#6a97cf"/><text x="1.8" y="10.3" font-family="Liberation Sans" font-size="6" font-weight="bold" fill="#e8eef8">DB2</text></svg><div class="t" style="left:45px;top:170.80px;font-size:15px;color:#1a1a1a;font-weight:normal;">DB2</div><svg style="left:8px;top:195px" width="6" height="8"><path d="M0 0L4.5 4L0 8Z" fill="#444"/></svg><svg style="left:23.0px;top:191.0px" width="16" height="16" viewBox="0 0 16 16"><circle cx="8" cy="8" r="7.2" fill="#8fb4e0" stroke="#4a6a9a" stroke-width="0.7"/><path d="M3 5C4 4 5.5 4 6 5.5C6.5 7 5 7.5 6 9C7 10.5 6.5 12.5 7.5 13.5M9.5 2C9.5 3.5 10.5 4 11.5 4.2C12.5 4.5 12 6 13.5 6.5M10 8C11 8.5 11 10 12.5 10.5" stroke="#3a6aa8" stroke-width="1.5" fill="none" stroke-linecap="round"/></svg><div class="t" style="left:45px;top:191.80px;font-size:15px;color:#1a1a1a;font-weight:normal;">WMS/WMTS</div><svg style="left:23.0px;top:212.0px" width="16" height="16" viewBox="0 0 16 16"><rect x="1" y="1" width="14" height="14" fill="#56708e"/><path d="M1 5.7H15M1 10.3H15M5.7 1V15M10.3 1V15" stroke="#e8eef4" stroke-width="1.1"/><rect x="1" y="1" width="14" height="14" fill="none" stroke="#3a506a" stroke-width="0.8"/></svg><div class="t" style="left:45px;top:212.80px;font-size:15px;color:#1a1a1a;font-weight:normal;">Vector Tiles</div><svg style="left:6px;top:239px" width="9" height="6"><path d="M0 0L8 0L4 4.5Z" fill="#444"/></svg><svg style="left:23.0px;top:233.0px" width="16" height="16" viewBox="0 0 16 16"><rect x="1" y="1" width="4" height="4" fill="#6a97cf"/><rect x="1" y="6" width="4" height="4" fill="#6a97cf"/><rect x="1" y="11" width="4" height="4" fill="#6a97cf"/><rect x="6" y="1" width="4" height="4" fill="#6a97cf"/><rect x="6" y="6" width="4" height="4" fill="#6a97cf"/><rect x="6" y="11" width="4" height="4" fill="#6a97cf"/><rect x="11" y="1" width="4" height="4" fill="#6a97cf"/><rect x="11" y="6" width="4" height="4" fill="#6a97cf"/><rect x="11" y="11" width="4" height="4" fill="#6a97cf"/></svg><div class="t" style="left:45px;top:233.80px;font-size:15px;color:#1a1a1a;font-weight:normal;">XYZ Tiles</div><svg style="left:43.0px;top:254.0px" width="16" height="16" viewBox="0 0 16 16"><rect x="1" y="1" width="4" height="4" fill="#6a97cf"/><rect x="1" y="6" width="4" height="4" fill="#6a97cf"/><rect x="1" y="11" width="4" height="4" fill="#6a97cf"/><rect x="6" y="1" width="4" height="4" fill="#6a97cf"/><rect x="6" y="6" width="4" height="4" fill="#6a97cf"/><rect x="6" y="11" width="4" height="4" fill="#6a97cf"/><rect x="11" y="1" width="4" height="4" fill="#6a97cf"/><rect x="11" y="6" width="4" height="4" fill="#6a97cf"/><rect x="11" y="11" width="4" height="4" fill="#6a97cf"/></svg><div class="t" style="left:65px;top:254.80px;font-size:15px;color:#1a1a1a;font-weight:normal;">apple_iphoto</div><svg style="left:43.0px;top:275.0px" width="16" height="16" viewBox="0 0 16 16"><rect x="1" y="1" width="4" height="4" fill="#6a97cf"/><rect x="1" y="6" width="4" height="4" fill="#6a97cf"/><rect x="1" y="11" width="4" height="4" fill="#6a97cf"/><rect x="6" y="1" width="4" height="4" fill="#6a97cf"/><rect x="6" y="6" width="4" height="4" fill="#6a97cf"/><rect x="6" y="11" width="4" height="4" fill="#6a97cf"/><rect x="11" y="1" width="4" height="4" fill="#6a97cf"/><rect x="11" y="6" width="4" height="4" fill="#6a97cf"/><rect x="11" y="11" width="4" height="4" fill="#6a97cf"/></svg><div class="t" style="left:65px;top:275.80px;font-size:15px;color:#1a1a1a;font-weight:normal;">esri World_Light_Gray_Base</div><svg style="left:43.0px;top:296.0px" width="16" height="16" viewBox="0 0 16 16"><rect x="1" y="1" width="4" height="4" fill="#6a97cf"/><rect x="1" y="6" width="4" height="4" fill="#6a97cf"/><rect x="1" y="11" width="4" height="4" fill="#6a97cf"/><rect x="6" y="1" width="4" height="4" fill="#6a97cf"/><rect x="6" y="6" width="4" height="4" fill="#6a97cf"/><rect x="6" y="11" width="4" height="4" fill="#6a97cf"/><rect x="11" y="1" width="4" height="4" fill="#6a97cf"/><rect x="11" y="6" width="4" height="4" fill="#6a97cf"/><rect x="11" y="11" width="4" height="4" fill="#6a97cf"/></svg><div class="t" style="left:65px;top:296.80px;font-size:15px;color:#1a1a1a;font-weight:normal;">esri World_Terrain_Base</div><svg style="left:43.0px;top:317.0px" width="16" height="16" viewBox="0 0 16 16"><rect x="1" y="1" width="4" height="4" fill="#6a97cf"/><rect x="1" y="6" width="4" height="4" fill="#6a97cf"/><rect x="1" y="11" width="4" height="4" fill="#6a97cf"/><rect x="6" y="1" width="4" height="4" fill="#6a97cf"/><rect x="6" y="6" width="4" height="4" fill="#6a97cf"/><rect x="6" y="11" width="4" height="4" fill="#6a97cf"/><rect x="11" y="1" width="4" height="4" fill="#6a97cf"/><rect x="11" y="6" width="4" height="4" fill="#6a97cf"/><rect x="11" y="11" width="4" height="4" fill="#6a97cf"/></svg><div class="t" style="left:65px;top:317.80px;font-size:15px;color:#1a1a1a;font-weight:normal;">gmaps_sat</div><svg style="left:43.0px;top:338.0px" width="16" height="16" viewBox="0 0 16 16"><rect x="1" y="1" width="4" height="4" fill="#6a97cf"/><rect x="1" y="6" width="4" height="4" fill="#6a97cf"/><rect x="1" y="11" width="4" height="4" fill="#6a97cf"/><rect x="6" y="1" width="4" height="4" fill="#6a97cf"/><rect x="6" y="6" width="4" height="4" fill="#6a97cf"/><rect x="6" y="11" width="4" height="4" fill="#6a97cf"/><rect x="11" y="1" width="4" height="4" fill="#6a97cf"/><rect x="11" y="6" width="4" height="4" fill="#6a97cf"/><rect x="11" y="11" width="4" height="4" fill="#6a97cf"/></svg><div class="t" style="left:65px;top:338.80px;font-size:15px;color:#1a1a1a;font-weight:normal;">hydda base</div><svg style="left:43.0px;top:359.0px" width="16" height="16" viewBox="0 0 16 16"><rect x="1" y="1" width="4" height="4" fill="#6a97cf"/><rect x="1" y="6" width="4" height="4" fill="#6a97cf"/><rect x="1" y="11" width="4" height="4" fill="#6a97cf"/><rect x="6" y="1" width="4" height="4" fill="#6a97cf"/><rect x="6" y="6" width="4" height="4" fill="#6a97cf"/><rect x="6" y="11" width="4" height="4" fill="#6a97cf"/><rect x="11" y="1" width="4" height="4" fill="#6a97cf"/><rect x="11" y="6" width="4" height="4" fill="#6a97cf"/><rect x="11" y="11" width="4" height="4" fill="#6a97cf"/></svg><div class="t" style="left:65px;top:359.80px;font-size:15px;color:#1a1a1a;font-weight:normal;">maptiler</div><svg style="left:43.0px;top:380.0px" width="16" height="16" viewBox="0 0 16 16"><rect x="1" y="1" width="4" height="4" fill="#6a97cf"/><rect x="1" y="6" width="4" height="4" fill="#6a97cf"/><rect x="1" y="11" width="4" height="4" fill="#6a97cf"/><rect x="6" y="1" width="4" height="4" fill="#6a97cf"/><rect x="6" y="6" width="4" height="4" fill="#6a97cf"/><rect x="6" y="11" width="4" height="4" fill="#6a97cf"/><rect x="11" y="1" width="4" height="4" fill="#6a97cf"/><rect x="11" y="6" width="4" height="4" fill="#6a97cf"/><rect x="11" y="11" width="4" height="4" fill="#6a97cf"/></svg><div class="t" style="left:65px;top:380.80px;font-size:15px;color:#1a1a1a;font-weight:normal;">OpenStreetMap</div><svg style="left:43.0px;top:401.0px" width="16" height="16" viewBox="0 0 16 16"><rect x="1" y="1" width="4" height="4" fill="#6a97cf"/><rect x="1" y="6" width="4" height="4" fill="#6a97cf"/><rect x="1" y="11" width="4" height="4" fill="#6a97cf"/><rect x="6" y="1" width="4" height="4" fill="#6a97cf"/><rect x="6" y="6" width="4" height="4" fill="#6a97cf"/><rect x="6" y="11" width="4" height="4" fill="#6a97cf"/><rect x="11" y="1" width="4" height="4" fill="#6a97cf"/><rect x="11" y="6" width="4" height="4" fill="#6a97cf"/><rect x="11" y="11" width="4" height="4" fill="#6a97cf"/></svg><div class="t" style="left:65px;top:401.80px;font-size:15px;color:#1a1a1a;font-weight:normal;">openstreetmap2</div><svg style="left:43.0px;top:422.0px" width="16" height="16" viewBox="0 0 16 16"><rect x="1" y="1" width="4" height="4" fill="#6a97cf"/><rect x="1" y="6" width="4" height="4" fill="#6a97cf"/><rect x="1" y="11" width="4" height="4" fill="#6a97cf"/><rect x="6" y="1" width="4" height="4" fill="#6a97cf"/><rect x="6" y="6" width="4" height="4" fill="#6a97cf"/><rect x="6" y="11" width="4" height="4" fill="#6a97cf"/><rect x="11" y="1" width="4" height="4" fill="#6a97cf"/><rect x="11" y="6" width="4" height="4" fill="#6a97cf"/><rect x="11" y="11" width="4" height="4" fill="#6a97cf"/></svg><div class="t" style="left:65px;top:422.80px;font-size:15px;color:#1a1a1a;font-weight:normal;">stamen_watercolor</div><svg style="left:43.0px;top:443.0px" width="16" height="16" viewBox="0 0 16 16"><rect x="1" y="1" width="4" height="4" fill="#6a97cf"/><rect x="1" y="6" width="4" height="4" fill="#6a97cf"/><rect x="1" y="11" width="4" height="4" fill="#6a97cf"/><rect x="6" y="1" width="4" height="4" fill="#6a97cf"/><rect x="6" y="6" width="4" height="4" fill="#6a97cf"/><rect x="6" y="11" width="4" height="4" fill="#6a97cf"/><rect x="11" y="1" width="4" height="4" fill="#6a97cf"/><rect x="11" y="6" width="4" height="4" fill="#6a97cf"/><rect x="11" y="11" width="4" height="4" fill="#6a97cf"/></svg><div class="t" style="left:65px;top:443.80px;font-size:15px;color:#1a1a1a;font-weight:normal;">swisstopp</div><svg style="left:43.0px;top:464.0px" width="16" height="16" viewBox="0 0 16 16"><rect x="1" y="1" width="4" height="4" fill="#6a97cf"/><rect x="1" y="6" width="4" height="4" fill="#6a97cf"/><rect x="1" y="11" width="4" height="4" fill="#6a97cf"/><rect x="6" y="1" width="4" height="4" fill="#6a97cf"/><rect x="6" y="6" width="4" height="4" fill="#6a97cf"/><rect x="6" y="11" width="4" height="4" fill="#6a97cf"/><rect x="11" y="1" width="4" height="4" fill="#6a97cf"/><rect x="11" y="6" width="4" height="4" fill="#6a97cf"/><rect x="11" y="11" width="4" height="4" fill="#6a97cf"/></svg><div class="t" style="left:65px;top:464.80px;font-size:15px;color:#1a1a1a;font-weight:normal;">toposkarte_benutzer2</div></div><div class="a" style="left:453px;top:683px;width:1px;height:1px;background:#a8a8a8"></div><div class="a" style="left:453px;top:686px;width:1px;height:1px;background:#a8a8a8"></div><div class="a" style="left:453px;top:689px;width:1px;height:1px;background:#a8a8a8"></div><div class="a" style="left:453px;top:692px;width:1px;height:1px;background:#a8a8a8"></div><div class="a" style="left:453px;top:695px;width:1px;height:1px;background:#a8a8a8"></div><div class="a" style="left:453px;top:698px;width:1px;height:1px;background:#a8a8a8"></div><svg style="left:216px;top:736px" width="20" height="3"><rect x="0" y="0" width="1" height="1" fill="#999"/><rect x="3" y="0" width="1" height="1" fill="#999"/><rect x="6" y="0" width="1" height="1" fill="#999"/><rect x="9" y="0" width="1" height="1" fill="#999"/><rect x="12" y="0" width="1" height="1" fill="#999"/><rect x="15" y="0" width="1" height="1" fill="#999"/><rect x="18" y="0" width="1" height="1" fill="#999"/></svg><div class="t" style="left:4px;top:743.30px;font-size:15px;color:#1a1a1a;font-weight:normal;">Layers</div><svg style="left:423px;top:746px" width="26" height="12"><rect x="0.5" y="0.5" width="11" height="11" rx="2.5" fill="none" stroke="#666" stroke-width="1"/><rect x="3" y="5" width="4.5" height="4.5" fill="none" stroke="#666" stroke-width="1"/><path d="M5 5V3H9V7H7.5" fill="none" stroke="#666" stroke-width="1"/><rect x="14.5" y="0.5" width="11" height="11" rx="2.5" fill="none" stroke="#666" stroke-width="1"/><path d="M17.3 3.3L22.7 8.7M22.7 3.3L17.3 8.7" stroke="#555" stroke-width="2"/></svg><svg style="left:8.0px;top:769.0px" width="16" height="16" viewBox="0 0 16 16"><path d="M1 10L7 7L10 13L4 15Z" fill="#e03a3a"/><path d="M2 8L8 5L11 11L5 13Z" fill="#f2c94a"/><path d="M5 9L14 2" stroke="#c99a50" stroke-width="2.4"/><path d="M3 9L8 6L10 10L5 12Z" fill="#e8b86a"/></svg><svg style="left:33.0px;top:769.0px" width="16" height="16" viewBox="0 0 16 16"><rect x="1" y="4" width="9" height="11" fill="none" stroke="#888" stroke-width="0.8"/><rect x="4" y="2" width="8" height="11" fill="#f2f2f2" stroke="#888" stroke-width="0.8"/><path d="M8 1V9" stroke="#3e6aa8" stroke-width="1.2"/><circle cx="12" cy="12" r="3.5" fill="#4a9a5a"/><path d="M12 10V14M10 12H14" stroke="#fff" stroke-width="1.2"/></svg><svg style="left:58.0px;top:769.0px" width="16" height="16" viewBox="0 0 16 16"><ellipse cx="7.5" cy="8" rx="7" ry="4.5" fill="#fff" stroke="#aaa" stroke-width="0.8"/><circle cx="7.5" cy="8" r="3.2" fill="#5b89c8"/><circle cx="7.5" cy="7.5" r="1.2" fill="#111"/><path d="M11 13L15 13L13 15.5Z" fill="#555"/></svg><svg style="left:83.0px;top:769.0px" width="16" height="16" viewBox="0 0 16 16"><path d="M1 1.5H15L9.5 8V15L6.5 13V8Z" fill="#6a97cf" stroke="#3e6aa8" stroke-width="0.7"/><rect x="1.5" y="1.5" width="13" height="2" fill="#f2dc3a"/></svg><svg style="left:108.0px;top:769.0px" width="16" height="16" viewBox="0 0 16 16"><text x="0" y="11" font-family="Liberation Serif" font-size="17" fill="#6a2a7a">ε</text><path d="M7.5 8.5H14.5L14 15H8Z" fill="#a8a8a8" stroke="#888" stroke-width="0.6"/><path d="M9.5 9V14M12.5 9V14" stroke="#ddd" stroke-width="0.8"/></svg><svg style="left:130px;top:774.5px" width="8" height="5"><path d="M0 0L8 0L4 4.5Z" fill="#444"/></svg><svg style="left:145.0px;top:769.0px" width="16" height="16" viewBox="0 0 16 16"><rect x="1" y="2" width="8" height="13" fill="#f4f4f4" stroke="#999" stroke-width="0.8"/><rect x="3" y="5" width="2.5" height="2.5" fill="#f0a030"/><rect x="3" y="11" width="2.5" height="2.5" fill="#f0a030"/><path d="M9.3 1H12.7V9H15.5L11 15L6.5 9H9.3Z" fill="#6a97cf" stroke="#2f4f80" stroke-width="0.7" stroke-linejoin="round"/></svg><svg style="left:170.0px;top:769.0px" width="16" height="16" viewBox="0 0 16 16"><rect x="1" y="3" width="8" height="12" fill="#f4f4f4" stroke="#999" stroke-width="0.8"/><rect x="3" y="6" width="2.5" height="2.5" fill="#f0a030"/><rect x="3" y="11" width="2.5" height="2.5" fill="#f0a030"/><path d="M9.3 15H12.7V7H15.5L11 1L6.5 7H9.3Z" fill="#6a97cf" stroke="#2f4f80" stroke-width="0.7" stroke-linejoin="round"/></svg><svg style="left:195.0px;top:769.0px" width="16" height="16" viewBox="0 0 16 16"><rect x="1.5" y="1.5" width="11" height="11" fill="#fff" stroke="#777"/><rect x="9" y="10.5" width="6.5" height="4.5" rx="1" fill="#e02a2a"/><path d="M10.5 12.8H14" stroke="#fff" stroke-width="1.2"/></svg><div class="a" style="left:0px;top:793px;width:450px;height:373px;background:#fff;border:1px solid #b4b4b4"></div><div class="a" style="left:1px;top:794px;width:448px;height:21px;background:#308cc6"></div><div class="a" style="left:24px;top:797px;width:14px;height:14px;background:#fff;border:1px solid #a8a8a8"></div><svg style="left:26px;top:799px" width="10" height="10"><path d="M1.5 5L4 8.5L9 1" stroke="#000" stroke-width="2" fill="none"/></svg><div class="a" style="left:24px;top:818px;width:14px;height:14px;background:#fff;border:1px solid #a8a8a8"></div><svg style="left:26px;top:820px" width="10" height="10"><path d="M1.5 5L4 8.5L9 1" stroke="#000" stroke-width="2" fill="none"/></svg><svg style="left:47px;top:799px" width="10" height="10"><circle cx="5" cy="5" r="3" fill="#5fa97a" stroke="#4f8a65" stroke-width="0.6"/></svg><svg style="left:44.0px;top:817.0px" width="16" height="16" viewBox="0 0 16 16"><rect x="1" y="1" width="14" height="14" fill="#a9c4e6"/><rect x="1" y="1" width="4.6" height="4.6" fill="#1f3550"/><rect x="10.4" y="1" width="4.6" height="4.6" fill="#1f3550"/><rect x="5.7" y="5.7" width="4.6" height="4.6" fill="#2c4a70"/><rect x="1" y="10.4" width="4.6" height="4.6" fill="#1f3550"/></svg><div class="t" style="left:66px;top:797.98px;font-size:14.2px;color:#fff;font-weight:bold;text-decoration:underline">points</div><div class="t" style="left:66px;top:818.98px;font-size:14.2px;color:#000;font-weight:bold;">background</div><div class="a" style="left:456px;top:212px;width:991px;height:955px;background:#fff;border:1px solid #a8a8a8"></div><svg style="left:0;top:0" width="1920" height="1200" viewBox="0 0 1920 1200"><defs><clipPath id="mc"><rect x="457" y="327" width="989" height="725"/></clipPath></defs><g clip-path="url(#mc)"><rect x="457" y="327" width="989" height="725" fill="#e0dfdf"/><polygon points="457,327 513,346 489,375 457,364" fill="#fdf8d8" stroke="none" stroke-width="0" /><polygon points="455,590 493,590 490,620 455,628" fill="#fdf8d8" stroke="none" stroke-width="0" /><polygon points="455,679 505,700 525,720 558,739 558,769 519,804 490,831 455,852" fill="#fdf8d8" stroke="none" stroke-width="0" /><polygon points="455,455 562,517 518,553 499,541 479,557 455,545" fill="#d9d0c9" stroke="#c4b6ab" stroke-width="0.7" /><polygon points="455,523 499,541 479,557 455,553" fill="#d8d8e6" stroke="none" stroke-width="0" /><polygon points="455,557 480,560 500,600 455,600" fill="#d9d0c9" stroke="#c4b6ab" stroke-width="0.7" /><rect x="538.4229633421252" y="356.8333333333333" width="23.154073315749674" height="18" fill="#d9d0c9" stroke="#c4b6ab" stroke-width="0.7" transform="rotate(30.3 550.0 365.8333333333333)"/><rect x="558.4229633421252" y="368.5" width="23.154073315749674" height="18" fill="#d9d0c9" stroke="#c4b6ab" stroke-width="0.7" transform="rotate(30.3 570.0 377.5)"/><rect x="578.4229633421252" y="380.1666666666667" width="23.154073315749674" height="18" fill="#d9d0c9" stroke="#c4b6ab" stroke-width="0.7" transform="rotate(30.3 590.0 389.1666666666667)"/><rect x="557.639320225002" y="332.0" width="44.721359549995796" height="16" fill="#d9d0c9" stroke="#c4b6ab" stroke-width="0.7" transform="rotate(26.6 580.0 340.0)"/><rect x="597.639320225002" y="352.0" width="44.721359549995796" height="16" fill="#d9d0c9" stroke="#c4b6ab" stroke-width="0.7" transform="rotate(26.6 620.0 360.0)"/><rect x="493.5923383943214" y="396.0" width="26.981989878023782" height="16" fill="#d9d0c9" stroke="#c4b6ab" stroke-width="0.7" transform="rotate(26.4 507.0833333333333 404.0)"/><rect x="517.7590050609881" y="408.0" width="26.981989878023782" height="16" fill="#d9d0c9" stroke="#c4b6ab" stroke-width="0.7" transform="rotate(26.4 531.25 416.0)"/><rect x="541.9256717276547" y="420.0" width="26.981989878023782" height="16" fill="#d9d0c9" stroke="#c4b6ab" stroke-width="0.7" transform="rotate(26.4 555.4166666666666 428.0)"/><rect x="566.0923383943215" y="432.0" width="26.981989878023782" height="16" fill="#d9d0c9" stroke="#c4b6ab" stroke-width="0.7" transform="rotate(26.4 579.5833333333334 440.0)"/><rect x="590.2590050609881" y="444.0" width="26.981989878023782" height="16" fill="#d9d0c9" stroke="#c4b6ab" stroke-width="0.7" transform="rotate(26.4 603.75 452.0)"/><rect x="614.4256717276547" y="456.0" width="26.981989878023782" height="16" fill="#d9d0c9" stroke="#c4b6ab" stroke-width="0.7" transform="rotate(26.4 627.9166666666666 464.0)"/><polygon points="513,418 535,425 532,438 512,433" fill="#cdebb0" stroke="none" stroke-width="0" /><polygon points="560,440 585,450 580,462 558,455" fill="#cdebb0" stroke="none" stroke-width="0" /><rect x="564.3527262976107" y="500.6666666666667" width="28.627880738111852" height="22" fill="#d9d0c9" stroke="#c4b6ab" stroke-width="0.7" transform="rotate(27.8 578.6666666666666 511.6666666666667)"/><rect x="589.6860596309441" y="514.0" width="28.627880738111852" height="22" fill="#d9d0c9" stroke="#c4b6ab" stroke-width="0.7" transform="rotate(27.8 604.0 525.0)"/><rect x="615.0193929642775" y="527.3333333333334" width="28.627880738111852" height="22" fill="#d9d0c9" stroke="#c4b6ab" stroke-width="0.7" transform="rotate(27.8 629.3333333333334 538.3333333333334)"/><rect x="476.334189818731" y="429.42857142857144" width="26.474477505395146" height="18" fill="#d9d0c9" stroke="#c4b6ab" stroke-width="0.7" transform="rotate(29.1 489.57142857142856 438.42857142857144)"/><rect x="499.4770469615881" y="442.2857142857143" width="26.474477505395146" height="18" fill="#d9d0c9" stroke="#c4b6ab" stroke-width="0.7" transform="rotate(29.1 512.7142857142857 451.2857142857143)"/><rect x="522.6199041044454" y="455.14285714285717" width="26.474477505395146" height="18" fill="#d9d0c9" stroke="#c4b6ab" stroke-width="0.7" transform="rotate(29.1 535.8571428571429 464.14285714285717)"/><rect x="545.7627612473025" y="468.0" width="26.474477505395146" height="18" fill="#d9d0c9" stroke="#c4b6ab" stroke-width="0.7" transform="rotate(29.1 559.0 477.0)"/><rect x="568.9056183901596" y="480.85714285714283" width="26.474477505395146" height="18" fill="#d9d0c9" stroke="#c4b6ab" stroke-width="0.7" transform="rotate(29.1 582.1428571428571 489.85714285714283)"/><rect x="592.0484755330168" y="493.7142857142857" width="26.474477505395146" height="18" fill="#d9d0c9" stroke="#c4b6ab" stroke-width="0.7" transform="rotate(29.1 605.2857142857143 502.7142857142857)"/><rect x="615.1913326758739" y="506.57142857142856" width="26.474477505395146" height="18" fill="#d9d0c9" stroke="#c4b6ab" stroke-width="0.7" transform="rotate(29.1 628.4285714285714 515.5714285714286)"/><polygon points="540,528 642,568 642,600 600,600 560,592 532,560" fill="#d9d0c9" stroke="#c4b6ab" stroke-width="0.7" /><polygon points="515,520 548,505 560,520 535,530" fill="#d9d0c9" stroke="#c4b6ab" stroke-width="0.7" /><rect x="529.7745751406263" y="559.5" width="27.95084971874737" height="26" fill="#d9d0c9" stroke="#c4b6ab" stroke-width="0.7" transform="rotate(10.3 543.75 572.5)"/><rect x="557.2745751406263" y="564.5" width="27.95084971874737" height="26" fill="#d9d0c9" stroke="#c4b6ab" stroke-width="0.7" transform="rotate(10.3 571.25 577.5)"/><rect x="584.7745751406263" y="569.5" width="27.95084971874737" height="26" fill="#d9d0c9" stroke="#c4b6ab" stroke-width="0.7" transform="rotate(10.3 598.75 582.5)"/><rect x="612.2745751406263" y="574.5" width="27.95084971874737" height="26" fill="#d9d0c9" stroke="#c4b6ab" stroke-width="0.7" transform="rotate(10.3 626.25 587.5)"/><rect x="458.63999063670616" y="335.5" width="42.720018726587654" height="14" fill="#d9d0c9" stroke="#c4b6ab" stroke-width="0.7" transform="rotate(20.6 480.0 342.5)"/><polygon points="520,585 575,592 575,612 520,605" fill="#d9d0c9" stroke="#c4b6ab" stroke-width="0.7" /><polygon points="530,565 600,600 590,616 520,580" fill="#d9d0c9" stroke="#c4b6ab" stroke-width="0.7" /><rect x="528" y="620" width="26" height="20" fill="#d9d0c9" stroke="#c4b6ab" stroke-width="0.7" transform="rotate(10 541.0 630.0)"/><rect x="500" y="622" width="10" height="8" fill="#d9d0c9" stroke="#c4b6ab" stroke-width="0.7" transform="rotate(0 505.0 626.0)"/><rect x="586" y="625" width="28" height="16" fill="#d9d0c9" stroke="#c4b6ab" stroke-width="0.7" transform="rotate(10 600.0 633.0)"/><rect x="575" y="645" width="22" height="20" fill="#d9d0c9" stroke="#c4b6ab" stroke-width="0.7" transform="rotate(10 586.0 655.0)"/><rect x="560" y="662" width="20" height="16" fill="#d9d0c9" stroke="#c4b6ab" stroke-width="0.7" transform="rotate(10 570.0 670.0)"/><rect x="600" y="650" width="24" height="18" fill="#d9d0c9" stroke="#c4b6ab" stroke-width="0.7" transform="rotate(10 612.0 659.0)"/><rect x="583" y="678" width="28" height="20" fill="#d9d0c9" stroke="#c4b6ab" stroke-width="0.7" transform="rotate(10 597.0 688.0)"/><rect x="620" y="665" width="18" height="16" fill="#d9d0c9" stroke="#c4b6ab" stroke-width="0.7" transform="rotate(10 629.0 673.0)"/><rect x="539.7633599118784" y="693.0" width="17.13994684290992" height="18" fill="#d9d0c9" stroke="#c4b6ab" stroke-width="0.7" transform="rotate(13.5 548.3333333333334 702.0)"/><rect x="556.430026578545" y="697.0" width="17.13994684290992" height="18" fill="#d9d0c9" stroke="#c4b6ab" stroke-width="0.7" transform="rotate(13.5 565.0 706.0)"/><rect x="573.0966932452117" y="701.0" width="17.13994684290992" height="18" fill="#d9d0c9" stroke="#c4b6ab" stroke-width="0.7" transform="rotate(13.5 581.6666666666666 710.0)"/><rect x="610" y="700" width="28" height="20" fill="#d9d0c9" stroke="#c4b6ab" stroke-width="0.7" transform="rotate(-25 624.0 710.0)"/><polygon points="481,642 500,637 531,645 528,660 510,672 481,668" fill="#c9bbae" stroke="#c4b6ab" stroke-width="0.7" /><path d="M504 651V664M499 656H509" stroke="#111" stroke-width="2.3"/><polygon points="502,734 548,745 548,781 520,790 502,770" fill="#d9d0c9" stroke="#c4b6ab" stroke-width="0.7" /><polygon points="455,790 480,800 490,831 455,840" fill="#d9d0c9" stroke="#c4b6ab" stroke-width="0.7" /><polygon points="455,755 478,760 478,775 455,772" fill="#d9d0c9" stroke="#c4b6ab" stroke-width="0.7" /><rect x="556.0" y="773.0" width="28.0" height="18" fill="#d9d0c9" stroke="#c4b6ab" stroke-width="0.7" transform="rotate(0.0 570.0 782.0)"/><rect x="584.0" y="773.0" width="28.0" height="18" fill="#d9d0c9" stroke="#c4b6ab" stroke-width="0.7" transform="rotate(0.0 598.0 782.0)"/><rect x="612.0" y="773.0" width="28.0" height="18" fill="#d9d0c9" stroke="#c4b6ab" stroke-width="0.7" transform="rotate(0.0 626.0 782.0)"/><rect x="552.126422453603" y="794.1666666666666" width="20.747155092793914" height="20" fill="#d9d0c9" stroke="#c4b6ab" stroke-width="0.7" transform="rotate(23.7 562.5 804.1666666666666)"/><rect x="571.126422453603" y="802.5" width="20.747155092793914" height="20" fill="#d9d0c9" stroke="#c4b6ab" stroke-width="0.7" transform="rotate(23.7 581.5 812.5)"/><rect x="590.126422453603" y="810.8333333333334" width="20.747155092793914" height="20" fill="#d9d0c9" stroke="#c4b6ab" stroke-width="0.7" transform="rotate(23.7 600.5 820.8333333333334)"/><polygon points="560,740 572,741 572,769 560,768" fill="#cdebb0" stroke="none" stroke-width="0" /><polygon points="618,735 637,732 637,763 620,763" fill="#cdebb0" stroke="none" stroke-width="0" /><path d="M455,645 L462,650" fill="none" stroke="#cdc9c9" stroke-width="7.6" stroke-linejoin="round" stroke-linecap="round"/><path d="M455,645 L462,650" fill="none" stroke="#ffffff" stroke-width="6" stroke-linejoin="round" stroke-linecap="round"/><path d="M452,318 L548,348" fill="none" stroke="#cdc9c9" stroke-width="14.6" stroke-linejoin="round" stroke-linecap="round"/><path d="M452,318 L548,348" fill="none" stroke="#ffffff" stroke-width="13" stroke-linejoin="round" stroke-linecap="round"/><path d="M537,322 L499,378 L455,422" fill="none" stroke="#cdc9c9" stroke-width="21.6" stroke-linejoin="round" stroke-linecap="round"/><path d="M537,322 L499,378 L455,422" fill="none" stroke="#ffffff" stroke-width="20" stroke-linejoin="round" stroke-linecap="round"/><path d="M553,327 L603,392" fill="none" stroke="#cdc9c9" stroke-width="13.6" stroke-linejoin="round" stroke-linecap="round"/><path d="M553,327 L603,392" fill="none" stroke="#ffffff" stroke-width="12" stroke-linejoin="round" stroke-linecap="round"/><path d="M603 392C620 405 620 420 598 415" fill="none" stroke="#fff" stroke-width="3"/><path d="M505,383 L560,405 L640,430" fill="none" stroke="#cdc9c9" stroke-width="17.6" stroke-linejoin="round" stroke-linecap="round"/><path d="M505,383 L560,405 L640,430" fill="none" stroke="#ffffff" stroke-width="16" stroke-linejoin="round" stroke-linecap="round"/><path d="M502,430 L530,430 L548,447 L575,462 L600,465 L622,456 L645,455" fill="none" stroke="#cdc9c9" stroke-width="8.6" stroke-linejoin="round" stroke-linecap="round"/><path d="M502,430 L530,430 L548,447 L575,462 L600,465 L622,456 L645,455" fill="none" stroke="#ffffff" stroke-width="7" stroke-linejoin="round" stroke-linecap="round"/><path d="M455,447 L550,500 L645,555" fill="none" stroke="#d8c8a0" stroke-width="17" stroke-linejoin="round" stroke-linecap="round"/><path d="M455,447 L550,500 L645,555" fill="none" stroke="#f7fabf" stroke-width="15" stroke-linejoin="round" stroke-linecap="round"/><path d="M566,517 L535,560 L505,600 L460,665" fill="none" stroke="#cdc9c9" stroke-width="15.6" stroke-linejoin="round" stroke-linecap="round"/><path d="M566,517 L535,560 L505,600 L460,665" fill="none" stroke="#ffffff" stroke-width="14" stroke-linejoin="round" stroke-linecap="round"/><path d="M493,600 L572,617 L645,628" fill="none" stroke="#cdc9c9" stroke-width="13.6" stroke-linejoin="round" stroke-linecap="round"/><path d="M493,600 L572,617 L645,628" fill="none" stroke="#ffffff" stroke-width="12" stroke-linejoin="round" stroke-linecap="round"/><path d="M597,590 L568,637 L520,712" fill="none" stroke="#cdc9c9" stroke-width="14.6" stroke-linejoin="round" stroke-linecap="round"/><path d="M597,590 L568,637 L520,712" fill="none" stroke="#ffffff" stroke-width="13" stroke-linejoin="round" stroke-linecap="round"/><path d="M508,640 L546,652 L601,662 L624,628" fill="none" stroke="#cdc9c9" stroke-width="9.6" stroke-linejoin="round" stroke-linecap="round"/><path d="M508,640 L546,652 L601,662 L624,628" fill="none" stroke="#ffffff" stroke-width="8" stroke-linejoin="round" stroke-linecap="round"/><path d="M589,662 L574,687" fill="none" stroke="#cdc9c9" stroke-width="8.6" stroke-linejoin="round" stroke-linecap="round"/><path d="M589,662 L574,687" fill="none" stroke="#ffffff" stroke-width="7" stroke-linejoin="round" stroke-linecap="round"/><path d="M513,686 L537,653" fill="none" stroke="#cdc9c9" stroke-width="7.6" stroke-linejoin="round" stroke-linecap="round"/><path d="M513,686 L537,653" fill="none" stroke="#ffffff" stroke-width="6" stroke-linejoin="round" stroke-linecap="round"/><path d="M455,679 L520,710 L580,742" fill="none" stroke="#cdc9c9" stroke-width="16.6" stroke-linejoin="round" stroke-linecap="round"/><path d="M455,679 L520,710 L580,742" fill="none" stroke="#ffffff" stroke-width="15" stroke-linejoin="round" stroke-linecap="round"/><path d="M577,761 L520,805 L455,860" fill="none" stroke="#cdc9c9" stroke-width="15.6" stroke-linejoin="round" stroke-linecap="round"/><path d="M577,761 L520,805 L455,860" fill="none" stroke="#ffffff" stroke-width="14" stroke-linejoin="round" stroke-linecap="round"/><path d="M612,742 L642,720" fill="none" stroke="#cdc9c9" stroke-width="11.6" stroke-linejoin="round" stroke-linecap="round"/><path d="M612,742 L642,720" fill="none" stroke="#ffffff" stroke-width="10" stroke-linejoin="round" stroke-linecap="round"/><path d="M612,760 L642,770" fill="none" stroke="#cdc9c9" stroke-width="11.6" stroke-linejoin="round" stroke-linecap="round"/><path d="M612,760 L642,770" fill="none" stroke="#ffffff" stroke-width="10" stroke-linejoin="round" stroke-linecap="round"/><path d="M546,795 L600,822 L642,842" fill="none" stroke="#cdc9c9" stroke-width="14.6" stroke-linejoin="round" stroke-linecap="round"/><path d="M546,795 L600,822 L642,842" fill="none" stroke="#ffffff" stroke-width="13" stroke-linejoin="round" stroke-linecap="round"/><path d="M499,837 L548,860" fill="none" stroke="#cdc9c9" stroke-width="10.6" stroke-linejoin="round" stroke-linecap="round"/><path d="M499,837 L548,860" fill="none" stroke="#ffffff" stroke-width="9" stroke-linejoin="round" stroke-linecap="round"/><path d="M595 730C610 710 625 695 640 685" fill="none" stroke="#fff" stroke-width="2"/><circle cx="595" cy="751" r="22" fill="#ffffff"/><circle cx="595" cy="751" r="11" fill="#cdebb0"/><path d="M455,442 L540,490 L645,548" fill="none" stroke="#f08a80" stroke-width="1" stroke-dasharray="3 2"/><path d="M455,459 L540,508 L645,562" fill="none" stroke="#f08a80" stroke-width="1" stroke-dasharray="3 2"/><path d="M520,327 L458,405" fill="none" stroke="#f08a80" stroke-width="1" stroke-dasharray="3 2"/><path d="M482,645 L506,672" fill="none" stroke="#f08a80" stroke-width="1" stroke-dasharray="3 2"/><polygon points="741,845 882,845 882,869 820,875 745,868" fill="#cdebb0" stroke="none" stroke-width="0" /><polygon points="783,845 872,845 872,862 786,862" fill="#fdf8d8" stroke="none" stroke-width="0" /><polygon points="877,845 955,845 955,874 877,872" fill="#f2dad9" stroke="none" stroke-width="0" /><polygon points="670,893 715,892 825,908 825,978 702,988 690,960" fill="#cdebb0" stroke="none" stroke-width="0" /><polygon points="705,978 825,975 825,1017 715,1022" fill="#f2dad9" stroke="none" stroke-width="0" /><polygon points="455,987 519,987 519,1052 455,1052" fill="#f2dad9" stroke="none" stroke-width="0" /><polygon points="971,950 1177,935 1195,1052 985,1052" fill="#fdf8d8" stroke="none" stroke-width="0" /><polygon points="990,985 1070,975 1145,1020 1130,1045 1035,1048 1000,1040" fill="#cdebb0" stroke="none" stroke-width="0" /><polygon points="1187,937 1329,900 1450,850 1450,1052 1200,1052" fill="#fdf8d8" stroke="none" stroke-width="0" /><polygon points="1329,956 1450,919 1450,987 1366,1011" fill="#d0f2d0" stroke="none" stroke-width="0" /><polygon points="1192,845 1287,845 1287,890 1192,880" fill="#f2dad9" stroke="none" stroke-width="0" /><polygon points="1108,881 1279,906 1169,931" fill="#d0f2d0" stroke="none" stroke-width="0" /><polygon points="1077,845 1154,845 1150,875 1082,868" fill="#fdf8d8" stroke="none" stroke-width="0" /><polygon points="1200,1000 1330,990 1340,1052 1205,1052" fill="#ece6e4" stroke="none" stroke-width="0" /><polygon points="1219,1008 1287,1003 1313,1027 1227,1050" fill="#c8c4b8" stroke="none" stroke-width="0" /><polygon points="1334,1052 1450,992 1450,1052" fill="#d0f2d0" stroke="none" stroke-width="0" /><rect x="484" y="845" width="26" height="17" fill="#d9d0c9" stroke="#c4b6ab" stroke-width="0.7" transform="rotate(0 497.0 853.5)"/><rect x="547" y="847" width="35" height="21" fill="#d9d0c9" stroke="#c4b6ab" stroke-width="0.7" transform="rotate(8 564.5 857.5)"/><rect x="466" y="862" width="26" height="15" fill="#d9d0c9" stroke="#c4b6ab" stroke-width="0.7" transform="rotate(10 479.0 869.5)"/><rect x="510" y="860" width="27" height="31" fill="#d9d0c9" stroke="#c4b6ab" stroke-width="0.7" transform="rotate(0 523.5 875.5)"/><rect x="455" y="875" width="20" height="18" fill="#d9d0c9" stroke="#c4b6ab" stroke-width="0.7" transform="rotate(10 465.0 884.0)"/><rect x="492" y="886" width="18" height="11" fill="#d9d0c9" stroke="#c4b6ab" stroke-width="0.7" transform="rotate(0 501.0 891.5)"/><rect x="550" y="878" width="59" height="21" fill="#d9d0c9" stroke="#c4b6ab" stroke-width="0.7" transform="rotate(-8 579.5 888.5)"/><rect x="614" y="873" width="30" height="15" fill="#d9d0c9" stroke="#c4b6ab" stroke-width="0.7" transform="rotate(-8 629.0 880.5)"/><rect x="646" y="853" width="24" height="15" fill="#d9d0c9" stroke="#c4b6ab" stroke-width="0.7" transform="rotate(0 658.0 860.5)"/><rect x="675" y="856" width="26" height="21" fill="#d9d0c9" stroke="#c4b6ab" stroke-width="0.7" transform="rotate(5 688.0 866.5)"/><rect x="510" y="899" width="40" height="27" fill="#d9d0c9" stroke="#c4b6ab" stroke-width="0.7" transform="rotate(-10 530.0 912.5)"/><rect x="473" y="928" width="37" height="22" fill="#d9d0c9" stroke="#c4b6ab" stroke-width="0.7" transform="rotate(-15 491.5 939.0)"/><rect x="528" y="930" width="24" height="27" fill="#d9d0c9" stroke="#c4b6ab" stroke-width="0.7" transform="rotate(-10 540.0 943.5)"/><rect x="473" y="950" width="65" height="31" fill="#d9d0c9" stroke="#c4b6ab" stroke-width="0.7" transform="rotate(-15 505.5 965.5)"/><rect x="620" y="904" width="39" height="20" fill="#d9d0c9" stroke="#c4b6ab" stroke-width="0.7" transform="rotate(-8 639.5 914.0)"/><rect x="563" y="921" width="48" height="25" fill="#d9d0c9" stroke="#c4b6ab" stroke-width="0.7" transform="rotate(-8 587.0 933.5)"/><rect x="633" y="939" width="50" height="31" fill="#d9d0c9" stroke="#c4b6ab" stroke-width="0.7" transform="rotate(-8 658.0 954.5)"/><rect x="613" y="950" width="18" height="18" fill="#d9d0c9" stroke="#c4b6ab" stroke-width="0.7" transform="rotate(-10 622.0 959.0)"/><rect x="580" y="968" width="33" height="19" fill="#d9d0c9" stroke="#c4b6ab" stroke-width="0.7" transform="rotate(-10 596.5 977.5)"/><rect x="539" y="985" width="32" height="18" fill="#d9d0c9" stroke="#c4b6ab" stroke-width="0.7" transform="rotate(-10 555.0 994.0)"/><rect x="512" y="1000" width="22" height="14" fill="#d9d0c9" stroke="#c4b6ab" stroke-width="0.7" transform="rotate(-10 523.0 1007.0)"/><rect x="459" y="1005" width="33" height="37" fill="#d9d0c9" stroke="#c4b6ab" stroke-width="0.7" transform="rotate(-15 475.5 1023.5)"/><rect x="605" y="1012" width="33" height="21" fill="#d9d0c9" stroke="#c4b6ab" stroke-width="0.7" transform="rotate(-10 621.5 1022.5)"/><rect x="660" y="1003" width="30" height="19" fill="#d9d0c9" stroke="#c4b6ab" stroke-width="0.7" transform="rotate(-8 675.0 1012.5)"/><rect x="536" y="1033" width="27" height="18" fill="#d9d0c9" stroke="#c4b6ab" stroke-width="0.7" transform="rotate(-10 549.5 1042.0)"/><rect x="571" y="1023" width="27" height="15" fill="#d9d0c9" stroke="#c4b6ab" stroke-width="0.7" transform="rotate(-10 584.5 1030.5)"/><rect x="508" y="1045" width="22" height="10" fill="#d9d0c9" stroke="#c4b6ab" stroke-width="0.7" transform="rotate(0 519.0 1050.0)"/><rect x="680" y="1043" width="35" height="12" fill="#d9d0c9" stroke="#c4b6ab" stroke-width="0.7" transform="rotate(0 697.5 1049.0)"/><rect x="679" y="899" width="22" height="22" fill="#d9d0c9" stroke="#c4b6ab" stroke-width="0.7" transform="rotate(0 690.0 910.0)"/><rect x="690" y="926" width="20" height="15" fill="#d9d0c9" stroke="#c4b6ab" stroke-width="0.7" transform="rotate(0 700.0 933.5)"/><rect x="734.8169314202262" y="864.0" width="22.03280382621432" height="12" fill="#d9d0c9" stroke="#c4b6ab" stroke-width="0.7" transform="rotate(10.5 745.8333333333334 870.0)"/><rect x="756.4835980868928" y="868.0" width="22.03280382621432" height="12" fill="#d9d0c9" stroke="#c4b6ab" stroke-width="0.7" transform="rotate(10.5 767.5 874.0)"/><rect x="778.1502647535594" y="872.0" width="22.03280382621432" height="12" fill="#d9d0c9" stroke="#c4b6ab" stroke-width="0.7" transform="rotate(10.5 789.1666666666666 878.0)"/><rect x="804.993941396122" y="874.3333333333334" width="18.345450541089352" height="12" fill="#d9d0c9" stroke="#c4b6ab" stroke-width="0.7" transform="rotate(2.1 814.1666666666666 880.3333333333334)"/><rect x="823.3272747294553" y="875.0" width="18.345450541089352" height="12" fill="#d9d0c9" stroke="#c4b6ab" stroke-width="0.7" transform="rotate(2.1 832.5 881.0)"/><rect x="841.6606080627887" y="875.6666666666666" width="18.345450541089352" height="12" fill="#d9d0c9" stroke="#c4b6ab" stroke-width="0.7" transform="rotate(2.1 850.8333333333334 881.6666666666666)"/><rect x="885.0" y="887.0" width="18.75" height="18" fill="#d9d0c9" stroke="#c4b6ab" stroke-width="0.7" transform="rotate(0.0 894.375 896.0)"/><rect x="903.75" y="887.0" width="18.75" height="18" fill="#d9d0c9" stroke="#c4b6ab" stroke-width="0.7" transform="rotate(0.0 913.125 896.0)"/><rect x="922.5" y="887.0" width="18.75" height="18" fill="#d9d0c9" stroke="#c4b6ab" stroke-width="0.7" transform="rotate(0.0 931.875 896.0)"/><rect x="941.25" y="887.0" width="18.75" height="18" fill="#d9d0c9" stroke="#c4b6ab" stroke-width="0.7" transform="rotate(0.0 950.625 896.0)"/><rect x="885.0" y="922.0" width="12.5" height="14" fill="#d9d0c9" stroke="#c4b6ab" stroke-width="0.7" transform="rotate(0.0 891.25 929.0)"/><rect x="897.5" y="922.0" width="12.5" height="14" fill="#d9d0c9" stroke="#c4b6ab" stroke-width="0.7" transform="rotate(0.0 903.75 929.0)"/><rect x="910.0" y="922.0" width="12.5" height="14" fill="#d9d0c9" stroke="#c4b6ab" stroke-width="0.7" transform="rotate(0.0 916.25 929.0)"/><rect x="922.5" y="922.0" width="12.5" height="14" fill="#d9d0c9" stroke="#c4b6ab" stroke-width="0.7" transform="rotate(0.0 928.75 929.0)"/><rect x="935.0" y="922.0" width="12.5" height="14" fill="#d9d0c9" stroke="#c4b6ab" stroke-width="0.7" transform="rotate(0.0 941.25 929.0)"/><rect x="947.5" y="922.0" width="12.5" height="14" fill="#d9d0c9" stroke="#c4b6ab" stroke-width="0.7" transform="rotate(0.0 953.75 929.0)"/><rect x="830" y="900" width="34" height="18" fill="#d9d0c9" stroke="#c4b6ab" stroke-width="0.7" transform="rotate(0 847.0 909.0)"/><rect x="838" y="928" width="36" height="16" fill="#d9d0c9" stroke="#c4b6ab" stroke-width="0.7" transform="rotate(0 856.0 936.0)"/><rect x="750" y="940" width="50" height="22" fill="#d9d0c9" stroke="#c4b6ab" stroke-width="0.7" transform="rotate(-5 775.0 951.0)"/><rect x="708" y="981" width="96" height="18" fill="#d9d0c9" stroke="#c4b6ab" stroke-width="0.7" transform="rotate(-2 756.0 990.0)"/><rect x="715" y="1001" width="90" height="15" fill="#e8e4e4" stroke="#c4b6ab" stroke-width="0.7" transform="rotate(-2 760.0 1008.5)"/><rect x="720" y="1025" width="85" height="18" fill="#d9d0c9" stroke="#c4b6ab" stroke-width="0.7" transform="rotate(-5 762.5 1034.0)"/><rect x="740" y="1040" width="40" height="12" fill="#d9d0c9" stroke="#c4b6ab" stroke-width="0.7" transform="rotate(-5 760.0 1046.0)"/><rect x="826.0" y="960.0" width="16.125" height="16" fill="#d9d0c9" stroke="#c4b6ab" stroke-width="0.7" transform="rotate(0.0 834.0625 968.0)"/><rect x="842.125" y="960.0" width="16.125" height="16" fill="#d9d0c9" stroke="#c4b6ab" stroke-width="0.7" transform="rotate(0.0 850.1875 968.0)"/><rect x="858.25" y="960.0" width="16.125" height="16" fill="#d9d0c9" stroke="#c4b6ab" stroke-width="0.7" transform="rotate(0.0 866.3125 968.0)"/><rect x="874.375" y="960.0" width="16.125" height="16" fill="#d9d0c9" stroke="#c4b6ab" stroke-width="0.7" transform="rotate(0.0 882.4375 968.0)"/><rect x="890.5" y="960.0" width="16.125" height="16" fill="#d9d0c9" stroke="#c4b6ab" stroke-width="0.7" transform="rotate(0.0 898.5625 968.0)"/><rect x="906.625" y="960.0" width="16.125" height="16" fill="#d9d0c9" stroke="#c4b6ab" stroke-width="0.7" transform="rotate(0.0 914.6875 968.0)"/><rect x="922.75" y="960.0" width="16.125" height="16" fill="#d9d0c9" stroke="#c4b6ab" stroke-width="0.7" transform="rotate(0.0 930.8125 968.0)"/><rect x="938.875" y="960.0" width="16.125" height="16" fill="#d9d0c9" stroke="#c4b6ab" stroke-width="0.7" transform="rotate(0.0 946.9375 968.0)"/><rect x="830" y="1005" width="50" height="14" fill="#d9d0c9" stroke="#c4b6ab" stroke-width="0.7" transform="rotate(0 855.0 1012.0)"/><rect x="835" y="1025" width="30" height="14" fill="#d9d0c9" stroke="#c4b6ab" stroke-width="0.7" transform="rotate(0 850.0 1032.0)"/><rect x="900" y="1022" width="40" height="16" fill="#d9d0c9" stroke="#c4b6ab" stroke-width="0.7" transform="rotate(10 920.0 1030.0)"/><rect x="850" y="1043" width="40" height="10" fill="#d9d0c9" stroke="#c4b6ab" stroke-width="0.7" transform="rotate(0 870.0 1048.0)"/><rect x="904.8349674773453" y="1024.6666666666667" width="16.99673171197595" height="14" fill="#d9d0c9" stroke="#c4b6ab" stroke-width="0.7" transform="rotate(11.3 913.3333333333334 1031.6666666666667)"/><rect x="921.501634144012" y="1028.0" width="16.99673171197595" height="14" fill="#d9d0c9" stroke="#c4b6ab" stroke-width="0.7" transform="rotate(11.3 930.0 1035.0)"/><rect x="938.1683008106786" y="1031.3333333333333" width="16.99673171197595" height="14" fill="#d9d0c9" stroke="#c4b6ab" stroke-width="0.7" transform="rotate(11.3 946.6666666666666 1038.3333333333333)"/><rect x="954.8997873363035" y="883.375" width="26.45042532739313" height="16" fill="#d9d0c9" stroke="#c4b6ab" stroke-width="0.7" transform="rotate(-7.1 968.125 891.375)"/><rect x="981.1497873363035" y="880.125" width="26.45042532739313" height="16" fill="#d9d0c9" stroke="#c4b6ab" stroke-width="0.7" transform="rotate(-7.1 994.375 888.125)"/><rect x="1007.3997873363035" y="876.875" width="26.45042532739313" height="16" fill="#d9d0c9" stroke="#c4b6ab" stroke-width="0.7" transform="rotate(-7.1 1020.625 884.875)"/><rect x="1033.6497873363035" y="873.625" width="26.45042532739313" height="16" fill="#d9d0c9" stroke="#c4b6ab" stroke-width="0.7" transform="rotate(-7.1 1046.875 881.625)"/><rect x="955.0" y="939.0" width="21.0" height="12" fill="#d9d0c9" stroke="#c4b6ab" stroke-width="0.7" transform="rotate(0.0 965.5 945.0)"/><rect x="976.0" y="939.0" width="21.0" height="12" fill="#d9d0c9" stroke="#c4b6ab" stroke-width="0.7" transform="rotate(0.0 986.5 945.0)"/><rect x="997.0" y="939.0" width="21.0" height="12" fill="#d9d0c9" stroke="#c4b6ab" stroke-width="0.7" transform="rotate(0.0 1007.5 945.0)"/><rect x="1018.0" y="939.0" width="21.0" height="12" fill="#d9d0c9" stroke="#c4b6ab" stroke-width="0.7" transform="rotate(0.0 1028.5 945.0)"/><rect x="1039.0" y="939.0" width="21.0" height="12" fill="#d9d0c9" stroke="#c4b6ab" stroke-width="0.7" transform="rotate(0.0 1049.5 945.0)"/><rect x="955.0" y="909.0" width="25.0" height="12" fill="#d9d0c9" stroke="#c4b6ab" stroke-width="0.7" transform="rotate(0.0 967.5 915.0)"/><rect x="980.0" y="909.0" width="25.0" height="12" fill="#d9d0c9" stroke="#c4b6ab" stroke-width="0.7" transform="rotate(0.0 992.5 915.0)"/><rect x="1005.0" y="909.0" width="25.0" height="12" fill="#d9d0c9" stroke="#c4b6ab" stroke-width="0.7" transform="rotate(0.0 1017.5 915.0)"/><rect x="1060" y="855" width="40" height="28" fill="#d9d0c9" stroke="#c4b6ab" stroke-width="0.7" transform="rotate(10 1080.0 869.0)"/><rect x="1000" y="850" width="45" height="18" fill="#d9d0c9" stroke="#c4b6ab" stroke-width="0.7" transform="rotate(0 1022.5 859.0)"/><rect x="1150" y="848" width="38" height="20" fill="#d9d0c9" stroke="#c4b6ab" stroke-width="0.7" transform="rotate(0 1169.0 858.0)"/><rect x="960" y="1030" width="45" height="18" fill="#d9d0c9" stroke="#c4b6ab" stroke-width="0.7" transform="rotate(0 982.5 1039.0)"/><rect x="1010" y="1032" width="40" height="16" fill="#d9d0c9" stroke="#c4b6ab" stroke-width="0.7" transform="rotate(0 1030.0 1040.0)"/><polygon points="1008,953 1142,948 1166,1022 1040,1022 1035,995 1010,995" fill="#d9d0c9" stroke="#c4b6ab" stroke-width="0.7" /><polygon points="1187,943 1298,924 1305,977 1198,987" fill="#d9d0c9" stroke="#c4b6ab" stroke-width="0.7" /><polygon points="1313,882 1413,887 1427,950 1324,964" fill="#d9d0c9" stroke="#c4b6ab" stroke-width="0.7" /><rect x="1200" y="850" width="60" height="30" fill="#d9d0c9" stroke="#c4b6ab" stroke-width="0.7" transform="rotate(0 1230.0 865.0)"/><rect x="1295" y="855" width="40" height="25" fill="#d9d0c9" stroke="#c4b6ab" stroke-width="0.7" transform="rotate(-10 1315.0 867.5)"/><rect x="1385" y="855" width="50" height="22" fill="#d9d0c9" stroke="#c4b6ab" stroke-width="0.7" transform="rotate(25 1410.0 866.0)"/><path d="M497,836 L565,877 L630,869 L642,856 L645,838" fill="none" stroke="#cdc9c9" stroke-width="10.6" stroke-linejoin="round" stroke-linecap="round"/><path d="M497,836 L565,877 L630,869 L642,856 L645,838" fill="none" stroke="#ffffff" stroke-width="9" stroke-linejoin="round" stroke-linecap="round"/><path d="M642,856 L715,861 L872,882 L955,874 L1019,879 L1063,916" fill="none" stroke="#cdc9c9" stroke-width="11.6" stroke-linejoin="round" stroke-linecap="round"/><path d="M642,856 L715,861 L872,882 L955,874 L1019,879 L1063,916" fill="none" stroke="#ffffff" stroke-width="10" stroke-linejoin="round" stroke-linecap="round"/><path d="M550,875 L500,905 L466,943 L458,968 L473,992 L501,1001 L569,974" fill="none" stroke="#cdc9c9" stroke-width="9.6" stroke-linejoin="round" stroke-linecap="round"/><path d="M550,875 L500,905 L466,943 L458,968 L473,992 L501,1001 L569,974" fill="none" stroke="#ffffff" stroke-width="8" stroke-linejoin="round" stroke-linecap="round"/><path d="M482,957 L532,941" fill="none" stroke="#d8d4d4" stroke-width="4.0" stroke-linejoin="round" stroke-linecap="round"/><path d="M482,957 L532,941" fill="none" stroke="#fff" stroke-width="3" stroke-linejoin="round" stroke-linecap="round"/><path d="M600,1003 L618,999" fill="none" stroke="#d8d4d4" stroke-width="3.0" stroke-linejoin="round" stroke-linecap="round"/><path d="M600,1003 L618,999" fill="none" stroke="#fff" stroke-width="2" stroke-linejoin="round" stroke-linecap="round"/><path d="M614 873L616 898L582 905L582 911" fill="none" stroke="#c8c8c8" stroke-width="1.2" stroke-dasharray="1.5 1.5"/><path d="M569,974 L611,1051" fill="none" stroke="#f08a80" stroke-width="1" stroke-dasharray="3 2"/><path d="M559,918 L601,913 L632,968 L700,996 L715,1052" fill="none" stroke="#cdc9c9" stroke-width="9.6" stroke-linejoin="round" stroke-linecap="round"/><path d="M559,918 L601,913 L632,968 L700,996 L715,1052" fill="none" stroke="#ffffff" stroke-width="8" stroke-linejoin="round" stroke-linecap="round"/><path d="M611,1052 L710,1027 L820,1043" fill="none" stroke="#cdc9c9" stroke-width="9.6" stroke-linejoin="round" stroke-linecap="round"/><path d="M611,1052 L710,1027 L820,1043" fill="none" stroke="#ffffff" stroke-width="8" stroke-linejoin="round" stroke-linecap="round"/><path d="M874,884 L874,952" fill="none" stroke="#cdc9c9" stroke-width="9.6" stroke-linejoin="round" stroke-linecap="round"/><path d="M874,884 L874,952" fill="none" stroke="#ffffff" stroke-width="8" stroke-linejoin="round" stroke-linecap="round"/><path d="M702 902C712 920 720 934 740 934L794 934C805 934 815 945 820 955" fill="none" stroke="#f4f4f4" stroke-width="5"/><path d="M820,955 L945,958 L1177,932 L1329,890" fill="none" stroke="#cdc9c9" stroke-width="10.6" stroke-linejoin="round" stroke-linecap="round"/><path d="M820,955 L945,958 L1177,932 L1329,890" fill="none" stroke="#ffffff" stroke-width="9" stroke-linejoin="round" stroke-linecap="round"/><path d="M1100,874 L1287,900 L1329,889" fill="none" stroke="#cdc9c9" stroke-width="11.6" stroke-linejoin="round" stroke-linecap="round"/><path d="M1100,874 L1287,900 L1329,889" fill="none" stroke="#ffffff" stroke-width="10" stroke-linejoin="round" stroke-linecap="round"/><path d="M885,1001 L872,1052" fill="none" stroke="#cdc9c9" stroke-width="9.6" stroke-linejoin="round" stroke-linecap="round"/><path d="M885,1001 L872,1052" fill="none" stroke="#ffffff" stroke-width="8" stroke-linejoin="round" stroke-linecap="round"/><path d="M945,918 L1114,912" fill="none" stroke="#cdc9c9" stroke-width="10.6" stroke-linejoin="round" stroke-linecap="round"/><path d="M945,918 L1114,912" fill="none" stroke="#ffffff" stroke-width="9" stroke-linejoin="round" stroke-linecap="round"/><path d="M945,1017 L1079,1022" fill="none" stroke="#cdc9c9" stroke-width="9.6" stroke-linejoin="round" stroke-linecap="round"/><path d="M945,1017 L1079,1022" fill="none" stroke="#ffffff" stroke-width="8" stroke-linejoin="round" stroke-linecap="round"/><path d="M1079,1022 L1079,1053" fill="none" stroke="#cdc9c9" stroke-width="10.6" stroke-linejoin="round" stroke-linecap="round"/><path d="M1079,1022 L1079,1053" fill="none" stroke="#ffffff" stroke-width="9" stroke-linejoin="round" stroke-linecap="round"/><path d="M1080,1050 L1186,1026" fill="none" stroke="#cdc9c9" stroke-width="9.6" stroke-linejoin="round" stroke-linecap="round"/><path d="M1080,1050 L1186,1026" fill="none" stroke="#ffffff" stroke-width="8" stroke-linejoin="round" stroke-linecap="round"/><path d="M888,1000 L960,1011" fill="none" stroke="#cdc9c9" stroke-width="9.6" stroke-linejoin="round" stroke-linecap="round"/><path d="M888,1000 L960,1011" fill="none" stroke="#ffffff" stroke-width="8" stroke-linejoin="round" stroke-linecap="round"/><path d="M874,880 L960,857" fill="none" stroke="#cdc9c9" stroke-width="10.6" stroke-linejoin="round" stroke-linecap="round"/><path d="M874,880 L960,857" fill="none" stroke="#ffffff" stroke-width="9" stroke-linejoin="round" stroke-linecap="round"/><path d="M825 987L883 1000" stroke="#c8c8c8" stroke-width="1.2" stroke-dasharray="1.5 1.5"/><path d="M1038,840 L1103,900 L1202,1042 L1209,1053" fill="none" stroke="#d8c8a0" stroke-width="19" stroke-linejoin="round" stroke-linecap="round"/><path d="M1038,840 L1103,900 L1202,1042 L1209,1053" fill="none" stroke="#f7fabf" stroke-width="17" stroke-linejoin="round" stroke-linecap="round"/><path d="M1290,914 L1327,990" fill="none" stroke="#b8b8c8" stroke-width="11.6" stroke-linejoin="round" stroke-linecap="round"/><path d="M1290,914 L1327,990" fill="none" stroke="#dcdce6" stroke-width="10" stroke-linejoin="round" stroke-linecap="round"/><path d="M1334,1052 L1450,987" fill="none" stroke="#c8c090" stroke-width="11.6" stroke-linejoin="round" stroke-linecap="round"/><path d="M1334,1052 L1450,987" fill="none" stroke="#fbf6cc" stroke-width="10" stroke-linejoin="round" stroke-linecap="round"/><path d="M1040 980L1050 1000" stroke="#fff" stroke-width="3"/><path d="M1175 1012L1270 1000" stroke="#444" stroke-width="0.8"/><path d="M1350 845L1450 955" stroke="#888" stroke-width="2" stroke-dasharray="4 3"/><path d="M1360 845L1450 942" stroke="#888" stroke-width="1.5" stroke-dasharray="4 3"/><path d="M1378 845L1330 890" stroke="#36c" stroke-width="1" stroke-dasharray="2 2"/><path d="M1025,845 L1089,903 L1188,1052" fill="none" stroke="#f08a80" stroke-width="1" stroke-dasharray="3 2"/><path d="M1052,840 L1117,897 L1216,1040" fill="none" stroke="#f08a80" stroke-width="1" stroke-dasharray="3 2"/><path d="M1108,890 L1170,935 L1285,910" fill="none" stroke="#f08a80" stroke-width="1" stroke-dasharray="3 2"/><path d="M980,958 L1180,945 L1200,1050" fill="none" stroke="#f08a80" stroke-width="1" stroke-dasharray="3 2"/><path d="M715,990 L825,990" fill="none" stroke="#f08a80" stroke-width="1" stroke-dasharray="3 2"/><text x="548" y="333" font-family="Liberation Sans" font-size="10" fill="#222" style="letter-spacing:0.3px" text-anchor="start" transform="rotate(55 548 333)">Neufeldstrasse</text><text x="625" y="387" font-family="Liberation Sans" font-size="10" fill="#222" style="letter-spacing:0.3px" text-anchor="start" transform="rotate(-70 625 387)">Gesellschaftsstr</text><text x="462" y="435" font-family="Liberation Sans" font-size="10" fill="#c33" style="letter-spacing:0.3px" text-anchor="start" transform="rotate(0 462 435)">Unitobler</text><text x="568" y="515" font-family="Liberation Sans" font-size="10" fill="#222" style="letter-spacing:0.3px" text-anchor="start" transform="rotate(28 568 515)">Länggassstrasse</text><text x="470" y="670" font-family="Liberation Sans" font-size="10" fill="#336" style="letter-spacing:0.3px" text-anchor="start" transform="rotate(0 470 670)">Pauluskirche</text><text x="500" y="715" font-family="Liberation Sans" font-size="10" fill="#222" style="letter-spacing:0.3px" text-anchor="start" transform="rotate(30 500 715)">Freiestrasse</text><text x="467" y="746" font-family="Liberation Sans" font-size="9" fill="#775" style="font-style:italic;letter-spacing:0.3px" text-anchor="start" transform="rotate(0 467 746)">Theodor</text><text x="473" y="758" font-family="Liberation Sans" font-size="9" fill="#775" style="font-style:italic;letter-spacing:0.3px" text-anchor="start" transform="rotate(0 473 758)">Kocher</text><text x="470" y="770" font-family="Liberation Sans" font-size="9" fill="#775" style="font-style:italic;letter-spacing:0.3px" text-anchor="start" transform="rotate(0 470 770)">Institut</text><text x="468" y="783" font-family="Liberation Sans" font-size="9" fill="#775" style="font-style:italic;letter-spacing:0.3px" text-anchor="start" transform="rotate(0 468 783)">Institut</text><text x="458" y="795" font-family="Liberation Sans" font-size="9" fill="#775" style="font-style:italic;letter-spacing:0.3px" text-anchor="start" transform="rotate(0 458 795)">r Biochemie</text><text x="548" y="708" font-family="Liberation Sans" font-size="10" fill="#222" style="letter-spacing:0.3px" text-anchor="start" transform="rotate(-58 548 708)">Fellenbergstrasse</text><text x="488" y="625" font-family="Liberation Sans" font-size="10" fill="#222" style="letter-spacing:0.3px" text-anchor="start" transform="rotate(-58 488 625)">Lerchenweg</text><text x="492" y="832" font-family="Liberation Sans" font-size="10" fill="#38c" style="letter-spacing:0.3px" text-anchor="start" transform="rotate(0 492 832)">Bühlstrasse</text><text x="500" y="836" font-family="Liberation Sans" font-size="10" fill="#38c" style="letter-spacing:0.3px" text-anchor="start" transform="rotate(0 500 836)">Uni</text><text x="580" y="820" font-family="Liberation Sans" font-size="10" fill="#222" style="letter-spacing:0.3px" text-anchor="start" transform="rotate(22 580 820)">Donnerbühlweg</text><text x="760" y="877" font-family="Liberation Sans" font-size="10" fill="#222" style="letter-spacing:0.3px" text-anchor="start" transform="rotate(7 760 877)">Donnerbühlweg</text><text x="890" y="885" font-family="Liberation Sans" font-size="10" fill="#222" style="letter-spacing:0.3px" text-anchor="start" transform="rotate(0 890 885)">Falkenhöheweg</text><text x="882" y="962" font-family="Liberation Sans" font-size="10" fill="#222" style="letter-spacing:0.3px" text-anchor="start" transform="rotate(0 882 962)">Schanzeneckstrasse</text><text x="1250" y="990" font-family="Liberation Sans" font-size="11" fill="#555" style="letter-spacing:0.3px" text-anchor="start" transform="rotate(0 1250 990)">UniS</text><text x="1300" y="907" font-family="Liberation Sans" font-size="10" fill="#222" style="letter-spacing:0.3px" text-anchor="start" transform="rotate(10 1300 907)">Falkenplatz</text><text x="1112" y="917" font-family="Liberation Sans" font-size="10" fill="#222" style="letter-spacing:0.3px" text-anchor="start" transform="rotate(55 1112 917)">Falkenplatz</text><text x="1250" y="928" font-family="Liberation Sans" font-size="10" fill="#222" style="letter-spacing:0.3px" text-anchor="start" transform="rotate(-14 1250 928)">Sidlerstrasse</text><text x="1290" y="912" font-family="Liberation Sans" font-size="9" fill="#222" style="letter-spacing:0.3px" text-anchor="start" transform="rotate(70 1290 912)">Sidlerstrasse</text><text x="1172" y="947" font-family="Liberation Sans" font-size="9" fill="#222" style="letter-spacing:0.3px" text-anchor="start" transform="rotate(68 1172 947)">Schanzenstrasse</text><text x="900" y="1010" font-family="Liberation Sans" font-size="10" fill="#222" style="letter-spacing:0.3px" text-anchor="start" transform="rotate(12 900 1010)">Terrassenweg</text><text x="1130" y="1040" font-family="Liberation Sans" font-size="10" fill="#222" style="letter-spacing:0.3px" text-anchor="start" transform="rotate(-10 1130 1040)">Hochschulstrasse</text><text x="1325" y="936" font-family="Liberation Sans" font-size="10" fill="#875" style="letter-spacing:0.3px" text-anchor="start" transform="rotate(0 1325 936)">Juristische</text><text x="1330" y="947" font-family="Liberation Sans" font-size="9" fill="#875" style="letter-spacing:0.3px" text-anchor="start" transform="rotate(0 1330 947)">Bibliothek</text><text x="510" y="845" font-family="Liberation Sans" font-size="10" fill="#222" style="letter-spacing:0.3px" text-anchor="start" transform="rotate(30 510 845)">Finkenrain</text><text x="467" y="937" font-family="Liberation Sans" font-size="10" fill="#222" style="letter-spacing:0.3px" text-anchor="start" transform="rotate(-42 467 937)">Finkenhubelweg</text><text x="604" y="916" font-family="Liberation Sans" font-size="10" fill="#222" style="letter-spacing:0.3px" text-anchor="start" transform="rotate(62 604 916)">Wildhainweg</text><text x="612" y="1050" font-family="Liberation Sans" font-size="10" fill="#222" style="letter-spacing:0.3px" text-anchor="start" transform="rotate(-14 612 1050)">hubelweg</text><text x="878" y="950" font-family="Liberation Sans" font-size="9" fill="#222" style="letter-spacing:0.3px" text-anchor="start" transform="rotate(-90 878 950)">Falkenhöheweg</text><text x="1090" y="892" font-family="Liberation Sans" font-size="9" fill="#875" style="font-style:italic;letter-spacing:0.3px" text-anchor="start" transform="rotate(0 1090 892)">Universität</text><text x="1123" y="900" font-family="Liberation Sans" font-size="9" fill="#875" style="font-style:italic;letter-spacing:0.3px" text-anchor="start" transform="rotate(0 1123 900)">Bern</text><text x="1183" y="912" font-family="Liberation Sans" font-size="9" fill="#5a5" style="font-style:italic;letter-spacing:0.3px" text-anchor="start" transform="rotate(0 1183 912)">Falkenplatz</text><text x="1070" y="920" font-family="Liberation Sans" font-size="9" fill="#5a5" style="font-style:italic;letter-spacing:0.3px" text-anchor="start" transform="rotate(0 1070 920)">Barebox</text><text x="770" y="862" font-family="Liberation Sans" font-size="9" fill="#875" style="font-style:italic;letter-spacing:0.3px" text-anchor="start" transform="rotate(0 770 862)">Universität</text><text x="1372" y="860" font-family="Liberation Sans" font-size="10" fill="#222" style="letter-spacing:0.3px" text-anchor="start" transform="rotate(32 1372 860)">Tumarkinweg</text><text x="1390" y="1030" font-family="Liberation Sans" font-size="10" fill="#222" style="letter-spacing:0.3px" text-anchor="start" transform="rotate(-30 1390 1030)">Kleine Wehr</text><text x="1170" y="1035" font-family="Liberation Sans" font-size="9" fill="#222" style="letter-spacing:0.3px" text-anchor="start" transform="rotate(90 1170 1035)">Kanon</text><text x="740" y="945" font-family="Liberation Sans" font-size="9" fill="#5a5" style="font-style:italic;letter-spacing:0.3px" text-anchor="start" transform="rotate(0 740 945)">Favorite</text><text x="497" y="585" font-family="Liberation Sans" font-size="9" fill="#875" style="letter-spacing:0.3px" text-anchor="start" transform="rotate(0 497 585)">Bibliothek</text><text x="473" y="517" font-family="Liberation Sans" font-size="9" fill="#875" style="letter-spacing:0.3px" text-anchor="start" transform="rotate(0 473 517)">sbibliothek</text><text x="520" y="370" font-family="Liberation Sans" font-size="9" fill="#666" style="letter-spacing:0.3px" text-anchor="start" transform="rotate(0 520 370)">3</text><text x="553" y="383" font-family="Liberation Sans" font-size="9" fill="#666" style="letter-spacing:0.3px" text-anchor="start" transform="rotate(0 553 383)">5</text><text x="596" y="393" font-family="Liberation Sans" font-size="9" fill="#666" style="letter-spacing:0.3px" text-anchor="start" transform="rotate(0 596 393)">9</text><text x="575" y="333" font-family="Liberation Sans" font-size="9" fill="#666" style="letter-spacing:0.3px" text-anchor="start" transform="rotate(0 575 333)">11</text><text x="598" y="367" font-family="Liberation Sans" font-size="9" fill="#666" style="letter-spacing:0.3px" text-anchor="start" transform="rotate(0 598 367)">25b</text><text x="506" y="402" font-family="Liberation Sans" font-size="9" fill="#666" style="letter-spacing:0.3px" text-anchor="start" transform="rotate(0 506 402)">39</text><text x="525" y="412" font-family="Liberation Sans" font-size="9" fill="#666" style="letter-spacing:0.3px" text-anchor="start" transform="rotate(0 525 412)">87</text><text x="556" y="428" font-family="Liberation Sans" font-size="9" fill="#666" style="letter-spacing:0.3px" text-anchor="start" transform="rotate(0 556 428)">85</text><text x="582" y="440" font-family="Liberation Sans" font-size="9" fill="#666" style="letter-spacing:0.3px" text-anchor="start" transform="rotate(0 582 440)">83</text><text x="605" y="452" font-family="Liberation Sans" font-size="9" fill="#666" style="letter-spacing:0.3px" text-anchor="start" transform="rotate(0 605 452)">81</text><text x="472" y="441" font-family="Liberation Sans" font-size="9" fill="#666" style="letter-spacing:0.3px" text-anchor="start" transform="rotate(0 472 441)">54</text><text x="490" y="462" font-family="Liberation Sans" font-size="9" fill="#666" style="letter-spacing:0.3px" text-anchor="start" transform="rotate(0 490 462)">52</text><text x="515" y="480" font-family="Liberation Sans" font-size="9" fill="#666" style="letter-spacing:0.3px" text-anchor="start" transform="rotate(0 515 480)">50</text><text x="540" y="496" font-family="Liberation Sans" font-size="9" fill="#666" style="letter-spacing:0.3px" text-anchor="start" transform="rotate(0 540 496)">48</text><text x="618" y="475" font-family="Liberation Sans" font-size="9" fill="#666" style="letter-spacing:0.3px" text-anchor="start" transform="rotate(0 618 475)">81a</text><text x="620" y="490" font-family="Liberation Sans" font-size="9" fill="#666" style="letter-spacing:0.3px" text-anchor="start" transform="rotate(0 620 490)">20a</text><text x="498" y="582" font-family="Liberation Sans" font-size="9" fill="#666" style="letter-spacing:0.3px" text-anchor="start" transform="rotate(0 498 582)">36</text><text x="600" y="594" font-family="Liberation Sans" font-size="9" fill="#666" style="letter-spacing:0.3px" text-anchor="start" transform="rotate(0 600 594)">10</text><text x="565" y="617" font-family="Liberation Sans" font-size="9" fill="#666" style="letter-spacing:0.3px" text-anchor="start" transform="rotate(0 565 617)">8</text><text x="567" y="663" font-family="Liberation Sans" font-size="9" fill="#666" style="letter-spacing:0.3px" text-anchor="start" transform="rotate(0 567 663)">5</text><text x="598" y="635" font-family="Liberation Sans" font-size="9" fill="#666" style="letter-spacing:0.3px" text-anchor="start" transform="rotate(0 598 635)">19a</text><text x="617" y="648" font-family="Liberation Sans" font-size="9" fill="#666" style="letter-spacing:0.3px" text-anchor="start" transform="rotate(0 617 648)">9</text><text x="605" y="664" font-family="Liberation Sans" font-size="9" fill="#666" style="letter-spacing:0.3px" text-anchor="start" transform="rotate(0 605 664)">7</text><text x="592" y="683" font-family="Liberation Sans" font-size="9" fill="#666" style="letter-spacing:0.3px" text-anchor="start" transform="rotate(0 592 683)">5a</text><text x="540" y="690" font-family="Liberation Sans" font-size="9" fill="#666" style="letter-spacing:0.3px" text-anchor="start" transform="rotate(0 540 690)">1</text><text x="563" y="712" font-family="Liberation Sans" font-size="9" fill="#666" style="letter-spacing:0.3px" text-anchor="start" transform="rotate(0 563 712)">4</text><text x="617" y="714" font-family="Liberation Sans" font-size="9" fill="#666" style="letter-spacing:0.3px" text-anchor="start" transform="rotate(0 617 714)">38</text><text x="595" y="776" font-family="Liberation Sans" font-size="9" fill="#666" style="letter-spacing:0.3px" text-anchor="start" transform="rotate(0 595 776)">1a</text><text x="597" y="787" font-family="Liberation Sans" font-size="9" fill="#666" style="letter-spacing:0.3px" text-anchor="start" transform="rotate(0 597 787)">3</text><text x="555" y="795" font-family="Liberation Sans" font-size="9" fill="#666" style="letter-spacing:0.3px" text-anchor="start" transform="rotate(0 555 795)">51</text><text x="550" y="818" font-family="Liberation Sans" font-size="9" fill="#666" style="letter-spacing:0.3px" text-anchor="start" transform="rotate(0 550 818)">41</text><text x="580" y="818" font-family="Liberation Sans" font-size="9" fill="#666" style="letter-spacing:0.3px" text-anchor="start" transform="rotate(0 580 818)">38</text><text x="458" y="832" font-family="Liberation Sans" font-size="9" fill="#666" style="letter-spacing:0.3px" text-anchor="start" transform="rotate(0 458 832)">26</text><text x="570" y="856" font-family="Liberation Sans" font-size="9" fill="#666" style="letter-spacing:0.3px" text-anchor="start" transform="rotate(0 570 856)">6</text><text x="460" y="874" font-family="Liberation Sans" font-size="9" fill="#666" style="letter-spacing:0.3px" text-anchor="start" transform="rotate(0 460 874)">33</text><text x="595" y="855" font-family="Liberation Sans" font-size="9" fill="#666" style="letter-spacing:0.3px" text-anchor="start" transform="rotate(0 595 855)">33</text><text x="640" y="860" font-family="Liberation Sans" font-size="9" fill="#666" style="letter-spacing:0.3px" text-anchor="start" transform="rotate(0 640 860)">29</text><text x="600" y="887" font-family="Liberation Sans" font-size="9" fill="#666" style="letter-spacing:0.3px" text-anchor="start" transform="rotate(0 600 887)">25</text><text x="543" y="882" font-family="Liberation Sans" font-size="9" fill="#666" style="letter-spacing:0.3px" text-anchor="start" transform="rotate(0 543 882)">13</text><text x="520" y="878" font-family="Liberation Sans" font-size="9" fill="#666" style="letter-spacing:0.3px" text-anchor="start" transform="rotate(0 520 878)">9</text><text x="505" y="883" font-family="Liberation Sans" font-size="9" fill="#666" style="letter-spacing:0.3px" text-anchor="start" transform="rotate(0 505 883)">7</text><text x="617" y="887" font-family="Liberation Sans" font-size="9" fill="#666" style="letter-spacing:0.3px" text-anchor="start" transform="rotate(0 617 887)">29a</text><text x="527" y="910" font-family="Liberation Sans" font-size="9" fill="#666" style="letter-spacing:0.3px" text-anchor="start" transform="rotate(0 527 910)">28</text><text x="462" y="948" font-family="Liberation Sans" font-size="9" fill="#666" style="letter-spacing:0.3px" text-anchor="start" transform="rotate(0 462 948)">21c</text><text x="475" y="970" font-family="Liberation Sans" font-size="9" fill="#666" style="letter-spacing:0.3px" text-anchor="start" transform="rotate(0 475 970)">20</text><text x="478" y="985" font-family="Liberation Sans" font-size="9" fill="#666" style="letter-spacing:0.3px" text-anchor="start" transform="rotate(0 478 985)">12b</text><text x="532" y="972" font-family="Liberation Sans" font-size="9" fill="#666" style="letter-spacing:0.3px" text-anchor="start" transform="rotate(0 532 972)">16</text><text x="620" y="965" font-family="Liberation Sans" font-size="9" fill="#666" style="letter-spacing:0.3px" text-anchor="start" transform="rotate(0 620 965)">16</text><text x="515" y="1012" font-family="Liberation Sans" font-size="9" fill="#666" style="letter-spacing:0.3px" text-anchor="start" transform="rotate(0 515 1012)">14</text><text x="490" y="1030" font-family="Liberation Sans" font-size="9" fill="#666" style="letter-spacing:0.3px" text-anchor="start" transform="rotate(0 490 1030)">12a</text><text x="610" y="1013" font-family="Liberation Sans" font-size="9" fill="#666" style="letter-spacing:0.3px" text-anchor="start" transform="rotate(0 610 1013)">4</text><text x="650" y="1013" font-family="Liberation Sans" font-size="9" fill="#666" style="letter-spacing:0.3px" text-anchor="start" transform="rotate(0 650 1013)">12a</text><text x="680" y="1013" font-family="Liberation Sans" font-size="9" fill="#666" style="letter-spacing:0.3px" text-anchor="start" transform="rotate(0 680 1013)">12</text><text x="758" y="995" font-family="Liberation Sans" font-size="9" fill="#666" style="letter-spacing:0.3px" text-anchor="start" transform="rotate(0 758 995)">9</text><text x="836" y="893" font-family="Liberation Sans" font-size="9" fill="#666" style="letter-spacing:0.3px" text-anchor="start" transform="rotate(0 836 893)">11</text><text x="892" y="900" font-family="Liberation Sans" font-size="9" fill="#666" style="letter-spacing:0.3px" text-anchor="start" transform="rotate(0 892 900)">16</text><text x="930" y="900" font-family="Liberation Sans" font-size="9" fill="#666" style="letter-spacing:0.3px" text-anchor="start" transform="rotate(0 930 900)">19</text><text x="836" y="970" font-family="Liberation Sans" font-size="9" fill="#666" style="letter-spacing:0.3px" text-anchor="start" transform="rotate(0 836 970)">19a</text><text x="872" y="968" font-family="Liberation Sans" font-size="9" fill="#666" style="letter-spacing:0.3px" text-anchor="start" transform="rotate(0 872 968)">17</text><text x="820" y="1032" font-family="Liberation Sans" font-size="9" fill="#666" style="letter-spacing:0.3px" text-anchor="start" transform="rotate(0 820 1032)">14a</text><text x="830" y="1048" font-family="Liberation Sans" font-size="9" fill="#666" style="letter-spacing:0.3px" text-anchor="start" transform="rotate(0 830 1048)">12a</text><text x="877" y="1040" font-family="Liberation Sans" font-size="9" fill="#666" style="letter-spacing:0.3px" text-anchor="start" transform="rotate(0 877 1040)">12</text><text x="905" y="1042" font-family="Liberation Sans" font-size="9" fill="#666" style="letter-spacing:0.3px" text-anchor="start" transform="rotate(0 905 1042)">20</text><text x="950" y="1047" font-family="Liberation Sans" font-size="9" fill="#666" style="letter-spacing:0.3px" text-anchor="start" transform="rotate(0 950 1047)">20a</text><text x="1015" y="900" font-family="Liberation Sans" font-size="9" fill="#666" style="letter-spacing:0.3px" text-anchor="start" transform="rotate(0 1015 900)">20a</text><text x="995" y="920" font-family="Liberation Sans" font-size="9" fill="#666" style="letter-spacing:0.3px" text-anchor="start" transform="rotate(0 995 920)">11</text><text x="1050" y="950" font-family="Liberation Sans" font-size="9" fill="#666" style="letter-spacing:0.3px" text-anchor="start" transform="rotate(0 1050 950)">1</text><text x="1270" y="970" font-family="Liberation Sans" font-size="9" fill="#666" style="letter-spacing:0.3px" text-anchor="start" transform="rotate(0 1270 970)">6</text><text x="1240" y="945" font-family="Liberation Sans" font-size="9" fill="#666" style="letter-spacing:0.3px" text-anchor="start" transform="rotate(0 1240 945)">6a</text><text x="1307" y="963" font-family="Liberation Sans" font-size="9" fill="#666" style="letter-spacing:0.3px" text-anchor="start" transform="rotate(0 1307 963)">4</text><text x="1080" y="895" font-family="Liberation Sans" font-size="9" fill="#666" style="letter-spacing:0.3px" text-anchor="start" transform="rotate(0 1080 895)">7</text><text x="1085" y="907" font-family="Liberation Sans" font-size="9" fill="#666" style="letter-spacing:0.3px" text-anchor="start" transform="rotate(0 1085 907)">5</text><text x="1080" y="920" font-family="Liberation Sans" font-size="9" fill="#666" style="letter-spacing:0.3px" text-anchor="start" transform="rotate(0 1080 920)">3</text><rect x="481" y="416" width="12" height="9" rx="2" fill="#c00"/><rect x="484" y="413" width="6" height="4" fill="#c00"/><path d="M484 420H490M487 417V423" stroke="#fff" stroke-width="1.5"/><rect x="1302" y="864" width="12" height="9" rx="2" fill="#c00"/><rect x="1305" y="861" width="6" height="4" fill="#c00"/><path d="M1305 868H1311M1308 865V871" stroke="#fff" stroke-width="1.5"/><rect x="1294" y="876" width="12" height="9" rx="2" fill="#c00"/><rect x="1297" y="873" width="6" height="4" fill="#c00"/><path d="M1297 880H1303M1300 877V883" stroke="#fff" stroke-width="1.5"/><path d="M467 466Q471 464 475 466Q479 464 483 466V475Q479 473 475 475Q471 473 467 475Z" fill="#7a5018"/><path d="M475 466V475" stroke="#fff" stroke-width="0.8"/><path d="M467 494Q471 492 475 494Q479 492 483 494V503Q479 501 475 503Q471 501 467 503Z" fill="#7a5018"/><path d="M475 494V503" stroke="#fff" stroke-width="0.8"/><path d="M491 561Q495 559 499 561Q503 559 507 561V570Q503 568 499 570Q495 568 491 570Z" fill="#7a5018"/><path d="M499 561V570" stroke="#fff" stroke-width="0.8"/><path d="M1077 963Q1081 961 1085 963Q1089 961 1093 963V972Q1089 970 1085 972Q1081 970 1077 972Z" fill="#7a5018"/><path d="M1085 963V972" stroke="#fff" stroke-width="0.8"/><path d="M1077 994Q1081 992 1085 994Q1089 992 1093 994V1003Q1089 1001 1085 1003Q1081 1001 1077 1003Z" fill="#7a5018"/><path d="M1085 994V1003" stroke="#fff" stroke-width="0.8"/><path d="M1345 906Q1349 904 1353 906Q1357 904 1361 906V915Q1357 913 1353 915Q1349 913 1345 915Z" fill="#7a5018"/><path d="M1353 906V915" stroke="#fff" stroke-width="0.8"/><path d="M594 745H602L598 751L602 757H594L598 751Z" fill="#7a5018"/><path d="M751 924H759L755 930L759 936H751L755 930Z" fill="#7a5018"/><path d="M1230 869H1238L1234 875L1238 881H1230L1234 875Z" fill="#7a5018"/><path d="M1275 897H1283L1279 903L1283 909H1275L1279 903Z" fill="#7a5018"/><path d="M1084 844H1092L1088 850L1092 856H1084L1088 850Z" fill="#7a5018"/><circle cx="547" cy="526" r="3" fill="none" stroke="#29d" stroke-width="1.3"/><circle cx="555" cy="526" r="3" fill="none" stroke="#29d" stroke-width="1.3"/><path d="M545 519H557" stroke="#29d" stroke-width="2"/><circle cx="518" cy="818" r="3" fill="none" stroke="#29d" stroke-width="1.3"/><circle cx="526" cy="818" r="3" fill="none" stroke="#29d" stroke-width="1.3"/><path d="M516 811H528" stroke="#29d" stroke-width="2"/><circle cx="1028" cy="958" r="3" fill="none" stroke="#29d" stroke-width="1.3"/><circle cx="1036" cy="958" r="3" fill="none" stroke="#29d" stroke-width="1.3"/><path d="M1026 951H1038" stroke="#29d" stroke-width="2"/><circle cx="1148" cy="879" r="3" fill="none" stroke="#29d" stroke-width="1.3"/><circle cx="1156" cy="879" r="3" fill="none" stroke="#29d" stroke-width="1.3"/><path d="M1146 872H1158" stroke="#29d" stroke-width="2"/><circle cx="1263" cy="915" r="3" fill="none" stroke="#29d" stroke-width="1.3"/><circle cx="1271" cy="915" r="3" fill="none" stroke="#29d" stroke-width="1.3"/><path d="M1261 908H1273" stroke="#29d" stroke-width="2"/><circle cx="472" cy="695" r="3" fill="none" stroke="#29d" stroke-width="1.3"/><circle cx="480" cy="695" r="3" fill="none" stroke="#29d" stroke-width="1.3"/><path d="M470 688H482" stroke="#29d" stroke-width="2"/><rect x="486" y="468" width="12" height="10" rx="1" fill="none" stroke="#29d" stroke-width="1.6"/><rect x="1172" y="998" width="12" height="10" rx="1" fill="none" stroke="#29d" stroke-width="1.6"/><rect x="1065" y="849" width="12" height="10" rx="1" fill="none" stroke="#29d" stroke-width="1.6"/><circle cx="492" cy="386" r="2.2" fill="#a2a"/><circle cx="488" cy="368" r="2.2" fill="#a2a"/><circle cx="598" cy="537" r="2.2" fill="#a2a"/><circle cx="566" cy="530" r="2.2" fill="#a2a"/><circle cx="579" cy="542" r="2.2" fill="#a2a"/><circle cx="620" cy="546" r="2.2" fill="#a2a"/><circle cx="612" cy="532" r="2.2" fill="#f90"/><circle cx="555" cy="545" r="2.2" fill="#f90"/><circle cx="620" cy="545" r="2.2" fill="#a2a"/><circle cx="500" cy="573" r="2.2" fill="#f90"/><circle cx="551" cy="551" r="2.2" fill="#660"/><circle cx="1136" cy="860" r="2.2" fill="#a2a"/><circle cx="1118" cy="858" r="2.2" fill="#a2a"/><circle cx="1132" cy="870" r="2.2" fill="#a2a"/><circle cx="1112" cy="875" r="2.2" fill="#a2a"/><circle cx="1100" cy="880" r="2.2" fill="#a2a"/><circle cx="1170" cy="866" r="2.2" fill="#a2a"/><circle cx="1129" cy="884" r="2.2" fill="#f90"/><circle cx="1110" cy="886" r="2.2" fill="#f90"/><circle cx="1107" cy="935" r="2.2" fill="#f90"/><circle cx="1107" cy="972" r="2.2" fill="#f90"/><circle cx="1260" cy="932" r="2.2" fill="#f90"/><circle cx="699" cy="900" r="2.2" fill="#660"/><circle cx="480" cy="856" r="2.2" fill="#a2a"/><circle cx="500" cy="850" r="2.2" fill="#f90"/><circle cx="786" cy="945" r="2.2" fill="#f90"/><circle cx="480" cy="503" r="5" fill="#5a9a5a" stroke="#2a5a2a" stroke-width="0.8"/><circle cx="1383" cy="940" r="5" fill="#5a9a5a" stroke="#2a5a2a" stroke-width="0.8"/><circle cx="1422" cy="1033" r="5" fill="#5a9a5a" stroke="#2a5a2a" stroke-width="0.8"/></g></svg><div class="t" style="left:1457px;top:214.30px;font-size:15px;color:#1a1a1a;font-weight:normal;">Processing Toolbox</div><svg style="left:1893px;top:217px" width="26" height="12"><rect x="0.5" y="0.5" width="11" height="11" rx="2.5" fill="none" stroke="#666" stroke-width="1"/><rect x="3" y="5" width="4.5" height="4.5" fill="none" stroke="#666" stroke-width="1"/><path d="M5 5V3H9V7H7.5" fill="none" stroke="#666" stroke-width="1"/><rect x="14.5" y="0.5" width="11" height="11" rx="2.5" fill="none" stroke="#666" stroke-width="1"/><path d="M17.3 3.3L22.7 8.7M22.7 3.3L17.3 8.7" stroke="#555" stroke-width="2"/></svg><svg style="left:1458.0px;top:240.0px" width="16" height="16" viewBox="0 0 16 16"><g fill="#d32020"><rect x="-1.2" y="-7" width="2.4" height="3" transform="translate(8 8) rotate(0)"/><rect x="-1.2" y="-7" width="2.4" height="3" transform="translate(8 8) rotate(45)"/><rect x="-1.2" y="-7" width="2.4" height="3" transform="translate(8 8) rotate(90)"/><rect x="-1.2" y="-7" width="2.4" height="3" transform="translate(8 8) rotate(135)"/><rect x="-1.2" y="-7" width="2.4" height="3" transform="translate(8 8) rotate(180)"/><rect x="-1.2" y="-7" width="2.4" height="3" transform="translate(8 8) rotate(225)"/><rect x="-1.2" y="-7" width="2.4" height="3" transform="translate(8 8) rotate(270)"/><rect x="-1.2" y="-7" width="2.4" height="3" transform="translate(8 8) rotate(315)"/></g><circle cx="8" cy="8" r="4.5" fill="none" stroke="#d32020" stroke-width="2"/></svg><svg style="left:1485.0px;top:240.0px" width="16" height="16" viewBox="0 0 16 16"><circle cx="8" cy="8" r="6" fill="#3e78c0"/></svg><svg style="left:1512.0px;top:240.0px" width="16" height="16" viewBox="0 0 16 16"><circle cx="8" cy="8" r="6" fill="none" stroke="#999" stroke-width="1.2"/></svg><svg style="left:1535.0px;top:240.0px" width="16" height="16" viewBox="0 0 16 16"><rect x="2" y="2" width="11" height="13" fill="#fff" stroke="#999"/></svg><svg style="left:1565.0px;top:240.0px" width="16" height="16" viewBox="0 0 16 16"><rect x="2" y="4" width="12" height="10" fill="#f0d040" stroke="#b09818"/></svg><svg style="left:1595.0px;top:240.0px" width="16" height="16" viewBox="0 0 16 16"><path d="M3 14L13 3" stroke="#999" stroke-width="1.5"/></svg><div class="a" style="left:1453px;top:264px;width:466px;height:27px;background:#fff;border:1px solid #b4b4b4;border-radius:2px"></div><div class="a" style="left:1453px;top:291px;width:466px;height:876px;background:#fff;border:1px solid #b4b4b4"></div><div class="a" style="left:4px;top:1170px;width:266px;height:27px;background:#fff;border:1px solid #b0b0b0;border-radius:2px"></div><svg style="left:12px;top:1176px" width="14" height="14"><circle cx="5.5" cy="5.5" r="4" stroke="#555" stroke-width="1.4" fill="none"/><path d="M8.5 8.5L12.5 12.5" stroke="#555" stroke-width="1.6"/></svg><div class="t" style="left:33px;top:1176.47px;font-size:14.8px;color:#6e6e6e;font-weight:normal;">Type to locate (Ctrl+K)</div><div class="t" style="left:278px;top:1178.76px;font-size:12.1px;color:#1a1a1a;font-weight:normal;">Toggles the editing state of the current layer</div><div class="t" style="left:987px;top:1178.59px;font-size:12.3px;color:#1a1a1a;font-weight:normal;">Coordinate</div><div class="a" style="left:1050px;top:1171px;width:130px;height:26px;background:#fff;border:1px solid #b0b0b0;border-radius:2px"></div><div class="t" style="left:1058px;top:1178.59px;font-size:12.3px;color:#1a1a1a;font-weight:normal;">7.438397,46.956825</div><svg style="left:1183.0px;top:1175.0px" width="16" height="16" viewBox="0 0 16 16"><path d="M3 3C6 1 10 2 12 5M5 13C3 10 3 7 6 5C8 4 11 5 12 8C13 11 11 13 9 13M7 7L11 12M11 7L7 12" stroke="#333" stroke-width="1.4" fill="none"/></svg><svg style="left:1355.0px;top:1175.0px" width="16" height="16" viewBox="0 0 16 16"><rect x="3" y="7" width="10" height="8" rx="1" fill="#555"/><path d="M5 7V5C5 2 11 2 11 5V7" stroke="#555" stroke-width="1.8" fill="none"/></svg><svg style="left:1765.0px;top:1176.0px" width="16" height="16" viewBox="0 0 16 16"><circle cx="8" cy="8" r="6.5" fill="none" stroke="#555" stroke-width="1"/><ellipse cx="8" cy="8" rx="3" ry="6.5" fill="none" stroke="#555" stroke-width="0.9"/><path d="M1.5 8H14.5M2.5 4.5H13.5M2.5 11.5H13.5" stroke="#555" stroke-width="0.9"/></svg><svg style="left:1866.0px;top:1176.0px" width="16" height="16" viewBox="0 0 16 16"><path d="M2 7C2 3 5 2 8 2C11 2 14 3 14 7C14 10 11 12 8 12C7 12 6 12 5 11.5L2 14L3 10.5C2.3 9.5 2 8.5 2 7Z" fill="#333"/><circle cx="5.2" cy="7" r="1" fill="#fff"/><circle cx="8" cy="7" r="1" fill="#fff"/><circle cx="10.8" cy="7" r="1" fill="#fff"/></svg><svg style="left:1896.0px;top:1174.0px" width="18" height="18" viewBox="0 0 16 16"><path d="M1 6H4C4 3 8 3 8 6H12V9C15 9 15 13 12 13V15H1Z" fill="#bbb" stroke="#333" stroke-width="1"/><path d="M10 1C12 1 14 3 14 5" stroke="#333" stroke-width="1" fill="none"/></svg><div class="t" style="left:1213px;top:1178.59px;font-size:12.3px;color:#1a1a1a;font-weight:normal;">Scale</div><div class="a" style="left:1245px;top:1171px;width:101px;height:26px;background:#fff;border:1px solid #b0b0b0;border-radius:2px"></div><div class="a" style="left:1325px;top:1172px;width:1px;height:24px;background:#c8c8c8"></div><svg style="left:1330px;top:1181px" width="10" height="6"><path d="M0 0L10 0L5 5Z" fill="#555"/></svg><div class="t" style="left:1249px;top:1178.59px;font-size:12.3px;color:#1a1a1a;font-weight:normal;">1:1803</div><div class="t" style="left:1379px;top:1178.59px;font-size:12.3px;color:#1a1a1a;font-weight:normal;">Magnifier</div><div class="a" style="left:1433px;top:1171px;width:95px;height:26px;background:#fff;border:1px solid #b0b0b0;border-radius:2px"></div><div class="t" style="left:1437px;top:1178.59px;font-size:12.3px;color:#1a1a1a;font-weight:normal;">100%</div><div class="t" style="left:1537px;top:1178.59px;font-size:12.3px;color:#1a1a1a;font-weight:normal;">Rotation</div><div class="a" style="left:1592px;top:1171px;width:95px;height:26px;background:#fff;border:1px solid #b0b0b0;border-radius:2px"></div><div class="t" style="left:1597px;top:1178.59px;font-size:12.3px;color:#1a1a1a;font-weight:normal;">0.0 °</div><div class="a" style="left:1513px;top:1172px;width:1px;height:24px;background:#d0d0d0"></div><svg style="left:1517px;top:1175px" width="9" height="18"><path d="M0.5 5L4.5 1L8.5 5Z M0.5 13L4.5 17L8.5 13Z" fill="#555"/></svg><div class="a" style="left:1672px;top:1172px;width:1px;height:24px;background:#d0d0d0"></div><svg style="left:1676px;top:1175px" width="9" height="18"><path d="M0.5 5L4.5 1L8.5 5Z M0.5 13L4.5 17L8.5 13Z" fill="#555"/></svg><div class="a" style="left:1694px;top:1177px;width:13px;height:13px;background:#fff;border:1px solid #a0a0a0"></div><svg style="left:1695px;top:1179px" width="10" height="10"><path d="M1.5 5L4 8.5L9 1" stroke="#000" stroke-width="1.8" fill="none"/></svg><div class="t" style="left:1712px;top:1178.59px;font-size:12.3px;color:#1a1a1a;font-weight:normal;">Render</div><div class="t" style="left:1783px;top:1178.59px;font-size:12.3px;color:#1a1a1a;font-weight:normal;">EPSG:4326</div><div class="a" style="left:640px;top:243px;width:1054px;height:602px;box-shadow:0 4px 22px 4px rgba(0,0,0,0.28);border-radius:5px 5px 0 0;background:#efefef"></div><div class="a" style="left:640px;top:243px;width:1054px;height:32px;background:#373737;border-radius:5px 5px 0 0"></div><div class="t" style="left:768px;width:800px;text-align:center;top:252.06px;font-size:14.1px;color:#e8e8e8;font-weight:bold;">points — Features Total: 5, Filtered: 5, Selected: 0</div><svg style="left:1673px;top:254px" width="10" height="10"><path d="M1.3 1.3L8.7 8.7M8.7 1.3L1.3 8.7" stroke="#b0b0b0" stroke-width="2.1"/></svg><svg style="left:647.0px;top:282.0px" width="16" height="16" viewBox="0 0 16 16"><path d="M2 15L3 11L12 1L15 4L6 14Z" fill="#f2dc4a" stroke="#776a20" stroke-width="0.8"/><path d="M2 15L3 11L6 14Z" fill="#bbb"/></svg><svg style="left:673.0px;top:282.0px" width="16" height="16" viewBox="0 0 16 16"><rect x="1" y="2" width="13" height="3.5" fill="#dad9d3"/><rect x="1" y="7" width="13" height="3.5" fill="#dad9d3"/><rect x="1" y="12" width="13" height="3.5" fill="#dad9d3"/><path d="M6 15L14 2" stroke="#e6e5e0" stroke-width="2.5"/></svg><svg style="left:697.0px;top:282.0px" width="16" height="16" viewBox="0 0 16 16"><rect x="1" y="1" width="14" height="14" rx="1.5" fill="#d9d8d3"/><rect x="4" y="2" width="8" height="5" fill="#f1f1f0"/><rect x="5" y="10" width="6" height="4" fill="#f1f1f0"/></svg><svg style="left:723.0px;top:282.0px" width="16" height="16" viewBox="0 0 24 24"><defs><linearGradient id="rg1" x1="0" y1="0" x2="1" y2="0.6"><stop offset="0" stop-color="#9dbbe2"/><stop offset="1" stop-color="#4479bd"/></linearGradient><linearGradient id="rg2" x1="0" y1="0" x2="1" y2="0.6"><stop offset="0" stop-color="#78a0d6"/><stop offset="1" stop-color="#3a6cb0"/></linearGradient></defs><path d="M2 10.75Q3 1 11 1.2Q15.5 1.5 18.5 5L21.75 2V11.75H13.25L15.5 8.25Q12.5 5.5 8.25 5.75Q4.5 6.5 2.75 10.75Z" fill="url(#rg1)" stroke="#3f6fae" stroke-width="0.5"/><path d="M21.75 13.25Q21 22.5 13 22.75Q8.5 22.5 5.5 19L2 21.75V12H10.5L7.75 15.5Q11.5 18.5 15.75 18Q19.5 17 21 13.25Z" fill="url(#rg2)" stroke="#3f6fae" stroke-width="0.5"/></svg><svg style="left:754.0px;top:282.0px" width="16" height="16" viewBox="0 0 16 16"><rect x="1" y="2" width="13" height="12" fill="#e4e3de" stroke="#d0cfc8" stroke-width="0.8"/><rect x="1" y="2" width="13" height="3" fill="#d6d5d0"/><rect x="9" y="9" width="6" height="6" fill="#cfcdc6"/></svg><svg style="left:779.0px;top:282.0px" width="16" height="16" viewBox="0 0 16 16"><rect x="2" y="2" width="12" height="2" fill="#d9cfcf"/><path d="M3 5H13L12 15H4Z" fill="#e0d6d6" stroke="#d0c4c4" stroke-width="0.8"/></svg><svg style="left:804.0px;top:282.0px" width="16" height="16" viewBox="0 0 16 16"><path d="M1 6L10 10M1 10L10 6" stroke="#cfcfcf" stroke-width="1.2"/><circle cx="12.5" cy="5" r="2.2" fill="none" stroke="#d4c8c8" stroke-width="1.2"/><circle cx="12.5" cy="11" r="2.2" fill="none" stroke="#d4c8c8" stroke-width="1.2"/></svg><svg style="left:829.0px;top:282.0px" width="16" height="16" viewBox="0 0 16 16"><path d="M6 1H12L14 3V11H6Z" fill="#f6f6f6" stroke="#d4d4d0" stroke-width="0.8"/><path d="M3 5H9L11 7V15H3Z" fill="#f6f6f6" stroke="#d4d4d0" stroke-width="0.8"/></svg><svg style="left:854.0px;top:282.0px" width="16" height="16" viewBox="0 0 16 16"><rect x="3" y="2" width="10" height="13" rx="1" fill="#eee" stroke="#d4d4d0" stroke-width="0.8"/></svg><svg style="left:887.0px;top:282.0px" width="16" height="16" viewBox="0 0 16 16"><text x="0" y="10.5" font-family="Liberation Serif" font-size="14" fill="#6a2a7a">ε</text><rect x="6.5" y="6.5" width="9" height="9" rx="1" fill="#f5dc3c" stroke="#a89010" stroke-width="0.7"/></svg><svg style="left:912.0px;top:282.0px" width="16" height="16" viewBox="0 0 16 16"><rect x="1" y="1.5" width="14" height="3.5" rx="1" fill="#f5dc3c" stroke="#b09818" stroke-width="0.6"/><rect x="1" y="6.5" width="14" height="3.5" rx="1" fill="#f5dc3c" stroke="#b09818" stroke-width="0.6"/><rect x="1" y="11.5" width="14" height="3.5" rx="1" fill="#f5dc3c" stroke="#b09818" stroke-width="0.6"/></svg><svg style="left:937.0px;top:282.0px" width="16" height="16" viewBox="0 0 16 16"><rect x="1" y="1" width="14" height="14" fill="#f4f4f4" stroke="#777" stroke-width="0.7"/><path d="M1 1L15 15H1Z" fill="#f5dc3c"/><path d="M1 1L15 15" stroke="#555" stroke-width="0.8"/></svg><svg style="left:962.0px;top:282.0px" width="16" height="16" viewBox="0 0 16 16"><rect x="0.5" y="0.5" width="10" height="10" rx="1.5" fill="#f5dc3c" stroke="#c0a010" stroke-width="0.6"/><circle cx="12" cy="12" r="4" fill="#e02828"/><circle cx="12" cy="12" r="2.2" fill="none" stroke="#fff" stroke-width="0.9"/><path d="M10.5 13.5L13.5 10.5" stroke="#fff" stroke-width="0.9"/></svg><svg style="left:987.0px;top:282.0px" width="16" height="16" viewBox="0 0 16 16"><path d="M1 1.5H15L9.5 8V15L6.5 13V8Z" fill="#6a97cf" stroke="#3e6aa8" stroke-width="0.7"/><rect x="1.5" y="1.5" width="13" height="2" fill="#f2dc3a"/></svg><svg style="left:1012.0px;top:282.0px" width="16" height="16" viewBox="0 0 16 16"><rect x="1" y="1" width="14" height="14" fill="#b8cfec" stroke="#6a97cf" stroke-width="0.8"/><path d="M3 3.5H13" stroke="#2f4f80" stroke-width="1"/><path d="M8 12V4.5M5.5 7L8 4.5L10.5 7" stroke="#2f4f80" stroke-width="1.2" fill="none"/><rect x="2" y="11" width="12" height="2.5" fill="#f5dc3c"/><path d="M3 9H6M10 9H13" stroke="#fff" stroke-width="0.8"/></svg><svg style="left:1037.0px;top:282.0px" width="16" height="16" viewBox="0 0 16 16"><rect x="2" y="2" width="9" height="9" fill="#fbe54a" stroke="#d8b410" stroke-width="0.7"/><path d="M8 0.3L11 3.3H9V5.5H7V3.3H5ZM8 15.7L11 12.7H9V10.5H7V12.7H5ZM0.3 8L3.3 5V7H5.5V9H3.3V11ZM15.7 8L12.7 5V7H10.5V9H12.7V11Z" fill="#6a97cf" stroke="#2f4f80" stroke-width="0.5"/></svg><svg style="left:1062.0px;top:282.0px" width="16" height="16" viewBox="0 0 16 16"><rect x="2" y="1.5" width="6" height="9" fill="#f5dc3c" stroke="#a89010" stroke-width="0.6"/><path d="M5.5 10.5L1 15" stroke="#222" stroke-width="2.4"/><path d="M5 11L1.5 14.5" stroke="#f2d230" stroke-width="1.1"/><circle cx="10" cy="6" r="5.2" fill="#f3f3f3" stroke="#666" stroke-width="0.9"/><path d="M10 1V11A5 5 0 0 1 10 1Z" fill="#efe8c4"/></svg><svg style="left:1094.0px;top:282.0px" width="16" height="16" viewBox="0 0 16 16"><rect x="1" y="1" width="5" height="14" fill="#e8e7e2" stroke="#d0cfc8" stroke-width="0.8"/><rect x="6" y="1" width="5" height="14" fill="#e8e7e2" stroke="#d0cfc8" stroke-width="0.8"/><rect x="10" y="10" width="6" height="6" fill="#d6d5cf"/></svg><svg style="left:1119.0px;top:282.0px" width="16" height="16" viewBox="0 0 16 16"><rect x="1" y="1" width="5" height="14" fill="#e8e7e2" stroke="#d0cfc8" stroke-width="0.8"/><rect x="6" y="1" width="5" height="14" fill="#e8e7e2" stroke="#d0cfc8" stroke-width="0.8"/><rect x="10" y="10" width="6" height="6" fill="#d6d5cf"/></svg><svg style="left:1144.0px;top:282.0px" width="16" height="16" viewBox="0 0 16 16"><rect x="1.5" y="1.5" width="13" height="13" fill="#dde8f5" stroke="#6a97cf" stroke-width="0.9"/><path d="M3 4H13M3 7H8M3 10H7M3 13H6" stroke="#6a97cf" stroke-width="0.8"/><path d="M5.5 14.5L13.5 2.5" stroke="#333" stroke-width="2.8"/><path d="M5.5 14.5L13.5 2.5" stroke="#e07a20" stroke-width="1.8"/></svg><svg style="left:1169.0px;top:282.0px" width="16" height="16" viewBox="0 0 24 24"><path d="M2.4 2V21M21.4 2V21M2.4 4.3H21.4M2.4 10.4H21.4M2.4 16.4H21.4" stroke="#444" stroke-width="1.1"/><path d="M9.4 2.0L11.7 4.3L9.4 6.6L7.1000000000000005 4.3Z" fill="#f4a0a8" stroke="#c8283a" stroke-width="1"/><path d="M17.5 2.0L19.8 4.3L17.5 6.6L15.2 4.3Z" fill="#f4a0a8" stroke="#c8283a" stroke-width="1"/><path d="M7.3 8.100000000000001L9.6 10.4L7.3 12.7L5.0 10.4Z" fill="#b8f0b8" stroke="#4aa85a" stroke-width="1"/><path d="M12.3 8.100000000000001L14.600000000000001 10.4L12.3 12.7L10.0 10.4Z" fill="#b8f0b8" stroke="#4aa85a" stroke-width="1"/><path d="M7.3 14.099999999999998L9.6 16.4L7.3 18.7L5.0 16.4Z" fill="#b8ddf8" stroke="#4a7fb0" stroke-width="1"/><path d="M12.3 14.099999999999998L14.600000000000001 16.4L12.3 18.7L10.0 16.4Z" fill="#b8ddf8" stroke="#4a7fb0" stroke-width="1"/><path d="M17.5 14.099999999999998L19.8 16.4L17.5 18.7L15.2 16.4Z" fill="#b8ddf8" stroke="#4a7fb0" stroke-width="1"/><rect x="1.6" y="20.6" width="20.9" height="2" rx="1" fill="#ddd" stroke="#444" stroke-width="0.9"/></svg><svg style="left:1201.0px;top:282.0px" width="16" height="16" viewBox="0 0 16 16"><rect x="1" y="1.5" width="14" height="3.5" rx="0.8" fill="#fff" stroke="#999" stroke-width="0.6"/><path d="M8 3.2H13" stroke="#333" stroke-width="1"/><rect x="1" y="6.5" width="14" height="3.5" rx="0.8" fill="#7ccf6c" stroke="#5a9a4a" stroke-width="0.6"/><path d="M8 8.2H13" stroke="#fff" stroke-width="1"/><rect x="1" y="11.5" width="14" height="3.5" rx="0.8" fill="#fff" stroke="#999" stroke-width="0.6"/><path d="M3 13.2H5" stroke="#d22" stroke-width="1.5"/><path d="M6 13.2H13" stroke="#d22" stroke-width="0.8"/></svg><svg style="left:1233.0px;top:282.0px" width="16" height="16" viewBox="0 0 16 16"><rect x="3" y="1" width="12" height="10" fill="#f4f4f4" stroke="#777" stroke-width="0.8"/><rect x="3" y="1" width="12" height="2" fill="#555"/><rect x="1" y="6" width="11" height="9" fill="#e8eef6" stroke="#6a8ab0" stroke-width="0.8"/><rect x="1" y="6" width="11" height="2" fill="#6a8ab0"/><path d="M3 10.5H10M3 12.5H10M6 9V14" stroke="#8fb0dd" stroke-width="0.7"/></svg><svg style="left:1258.0px;top:282.0px" width="16" height="16" viewBox="0 0 16 16"><circle cx="7" cy="7" r="6" fill="#dde6f0" stroke="#888" stroke-width="1.2" stroke-dasharray="1.5 1"/><circle cx="7" cy="7" r="4" fill="#3e78c0"/><path d="M6 5V9L9 7Z" fill="#fff"/><path d="M9.5 9.5L10 15.5L11.3 14L12.8 16L13.8 15.3L12.4 13.3L14.5 13Z" fill="#fff" stroke="#444" stroke-width="0.6"/></svg><div class="a" style="left:747px;top:282px;width:1px;height:16px;background:#d0d0d0"></div><div class="a" style="left:879px;top:282px;width:1px;height:16px;background:#d0d0d0"></div><div class="a" style="left:1087px;top:282px;width:1px;height:16px;background:#d0d0d0"></div><div class="a" style="left:1194px;top:282px;width:1px;height:16px;background:#d0d0d0"></div><div class="a" style="left:1225px;top:282px;width:1px;height:16px;background:#d0d0d0"></div><div class="t" style="left:643px;top:313.54px;font-size:10px;color:#444;font-weight:bold;">123</div><div class="t" style="left:661px;top:312.30px;font-size:15px;color:#1a1a1a;font-weight:normal;">id</div><svg style="left:1040px;top:325px" width="6" height="4"><path d="M0 0L6 0L3 3.5Z" fill="#555"/></svg><div class="a" style="left:641px;top:334px;width:407px;height:454px;background:#fff;border-top:1px solid #c8c8c8;border-bottom:1px solid #b0b0b0"></div><div class="a" style="left:641px;top:335px;width:406px;height:24px;background:#308cc6"></div><div class="a" style="left:646px;top:340px;width:12px;height:12px;background:#eeeeee;border:1px solid #9a9a9a"></div><div class="t" style="left:667px;top:340.30px;font-size:15px;color:#fff;font-weight:normal;">1</div><div class="a" style="left:646px;top:364px;width:12px;height:12px;background:#eeeeee;border:1px solid #9a9a9a"></div><div class="t" style="left:667px;top:364.30px;font-size:15px;color:#1a1a1a;font-weight:normal;">2</div><div class="a" style="left:646px;top:388px;width:12px;height:12px;background:#eeeeee;border:1px solid #9a9a9a"></div><div class="t" style="left:667px;top:388.30px;font-size:15px;color:#1a1a1a;font-weight:normal;">3</div><div class="a" style="left:646px;top:412px;width:12px;height:12px;background:#eeeeee;border:1px solid #9a9a9a"></div><div class="t" style="left:667px;top:412.30px;font-size:15px;color:#1a1a1a;font-weight:normal;">4</div><div class="a" style="left:646px;top:436px;width:12px;height:12px;background:#eeeeee;border:1px solid #9a9a9a"></div><div class="t" style="left:667px;top:436.30px;font-size:15px;color:#1a1a1a;font-weight:normal;">5</div><svg style="left:645.0px;top:793.0px" width="16" height="16" viewBox="0 0 16 16"><path d="M8 2L2 8L8 14Z" fill="#d4dae2" stroke="#b8c0ca" stroke-width="0.6"/><path d="M14 2L8 8L14 14Z" fill="#d4dae2" stroke="#b8c0ca" stroke-width="0.6"/><path d="M12 2V14" stroke="#b8c0ca"/></svg><svg style="left:669.0px;top:793.0px" width="16" height="16" viewBox="0 0 16 16"><path d="M12 2L4 8L12 14Z" fill="#d4dae2" stroke="#b8c0ca" stroke-width="0.6"/></svg><svg style="left:693.0px;top:793.0px" width="16" height="16" viewBox="0 0 16 16"><path d="M4 2L13 8L4 14Z" fill="#6a97cf" stroke="#2f5a8f" stroke-width="0.8"/></svg><svg style="left:718.0px;top:793.0px" width="16" height="16" viewBox="0 0 16 16"><path d="M1 2L8 8L1 14Z" fill="#6a97cf" stroke="#2f5a8f" stroke-width="0.8"/><path d="M7 2L15 8L7 14Z" fill="#6a97cf" stroke="#2f5a8f" stroke-width="0.8"/></svg><div class="a" style="left:954px;top:790px;width:24px;height:23px;background:#e0e0e0;border:1px solid #b8b8b8;border-radius:3px"></div><svg style="left:958.0px;top:793.0px" width="16" height="16" viewBox="0 0 16 16"><path d="M5 9C3 7 3 2 8 1.5C13 2 13 7 11 9V11H5Z" fill="#f7ef4a" stroke="#d8c820" stroke-width="0.6"/><rect x="5.5" y="11.5" width="5" height="2.5" fill="#666"/></svg><svg style="left:1002.0px;top:793.0px" width="16" height="16" viewBox="0 0 16 16"><path d="M8 0.5L10.5 3H5.5ZM8 15.5L10.5 13H5.5ZM0.5 8L3 5.5V10.5ZM15.5 8L13 5.5V10.5Z" fill="#5b89c8"/><path d="M8 4L10 6H6ZM8 12L10 10H6ZM4 8L6 6V10ZM12 8L10 6V10Z" fill="#5b89c8"/></svg><svg style="left:1028.0px;top:793.0px" width="16" height="16" viewBox="0 0 16 16"><path d="M6 10L1.5 14.5" stroke="#333" stroke-width="2.4"/><path d="M6 10L2 14" stroke="#f5dc3c" stroke-width="1.2"/><circle cx="10" cy="6" r="4.8" fill="#fafafa" stroke="#444" stroke-width="1"/></svg><div class="t" style="left:740px;top:794.30px;font-size:15px;color:#1a1a1a;font-weight:normal;">1 / 5</div><div class="a" style="left:643px;top:816px;width:154px;height:26px;background:linear-gradient(#fbfbfb,#ececec);border:1px solid #a8a8a8;border-radius:3px"></div><svg style="left:646.0px;top:821.0px" width="16" height="16" viewBox="0 0 16 16"><path d="M1 1.5H15L9.5 8V15L6.5 13V8Z" fill="#6a97cf" stroke="#3e6aa8" stroke-width="0.7"/><rect x="1.5" y="1.5" width="13" height="2" fill="#f2dc3a"/></svg><div class="t" style="left:663px;top:821.30px;font-size:15px;color:#1a1a1a;font-weight:normal;">Show All Features</div><svg style="left:787px;top:834px" width="6" height="4"><path d="M0 0L6 0L3 3Z" fill="#555"/></svg><div class="a" style="left:1052px;top:306px;width:642px;height:507px;border:2px solid #b4b4b4;background:#efefef"></div><div class="t" style="left:1072px;top:332.30px;font-size:15px;color:#1a1a1a;font-weight:normal;">id</div><div class="a" style="left:1112px;top:329px;width:562px;height:21px;background:#fafafa"></div><div class="t" style="left:1114px;top:332.30px;font-size:15px;color:#1a1a1a;font-weight:normal;">1</div><div class="t" style="left:1072px;top:365.30px;font-size:15px;color:#1a1a1a;font-weight:normal;">label</div><div class="a" style="left:1112px;top:362px;width:562px;height:21px;background:#fafafa"></div><div class="t" style="left:1114px;top:365.30px;font-size:15px;color:#1a1a1a;font-weight:normal;">Institute</div><div class="a" style="left:1643px;top:817px;width:24px;height:23px;background:#e0e0e0;border:1px solid #b8b8b8;border-radius:3px"></div><svg style="left:1647.0px;top:820.0px" width="16" height="16" viewBox="0 0 16 16"><rect x="1.5" y="1.5" width="13" height="13" fill="#dde8f5" stroke="#6a97cf"/><rect x="6" y="4" width="7" height="3" rx="1" fill="#fff" stroke="#6a97cf" stroke-width="0.8"/><rect x="6" y="9" width="7" height="3" rx="1" fill="#fff" stroke="#6a97cf" stroke-width="0.8"/><path d="M3 5.5H6M3 10.5H6" stroke="#333" stroke-width="0.8"/></svg><svg style="left:1671.0px;top:820.0px" width="16" height="16" viewBox="0 0 16 16"><rect x="1.5" y="1.5" width="13" height="13" fill="#fff" stroke="#6a97cf"/><rect x="1.5" y="1.5" width="13" height="3" fill="#8fb0dd"/><path d="M3 7H13M3 9.5H13M3 12H13M6 5V14" stroke="#6a97cf" stroke-width="0.8"/></svg><div class="a" style="left:1652px;top:841px;width:141px;height:25px;background:#ffffdc;border:1px solid #000;box-shadow:0 2px 10px rgba(0,0,0,0.25)"></div><div class="t" style="left:1656px;top:846.30px;font-size:15px;color:#000;font-weight:normal;">Switch to form view</div></body></html>
